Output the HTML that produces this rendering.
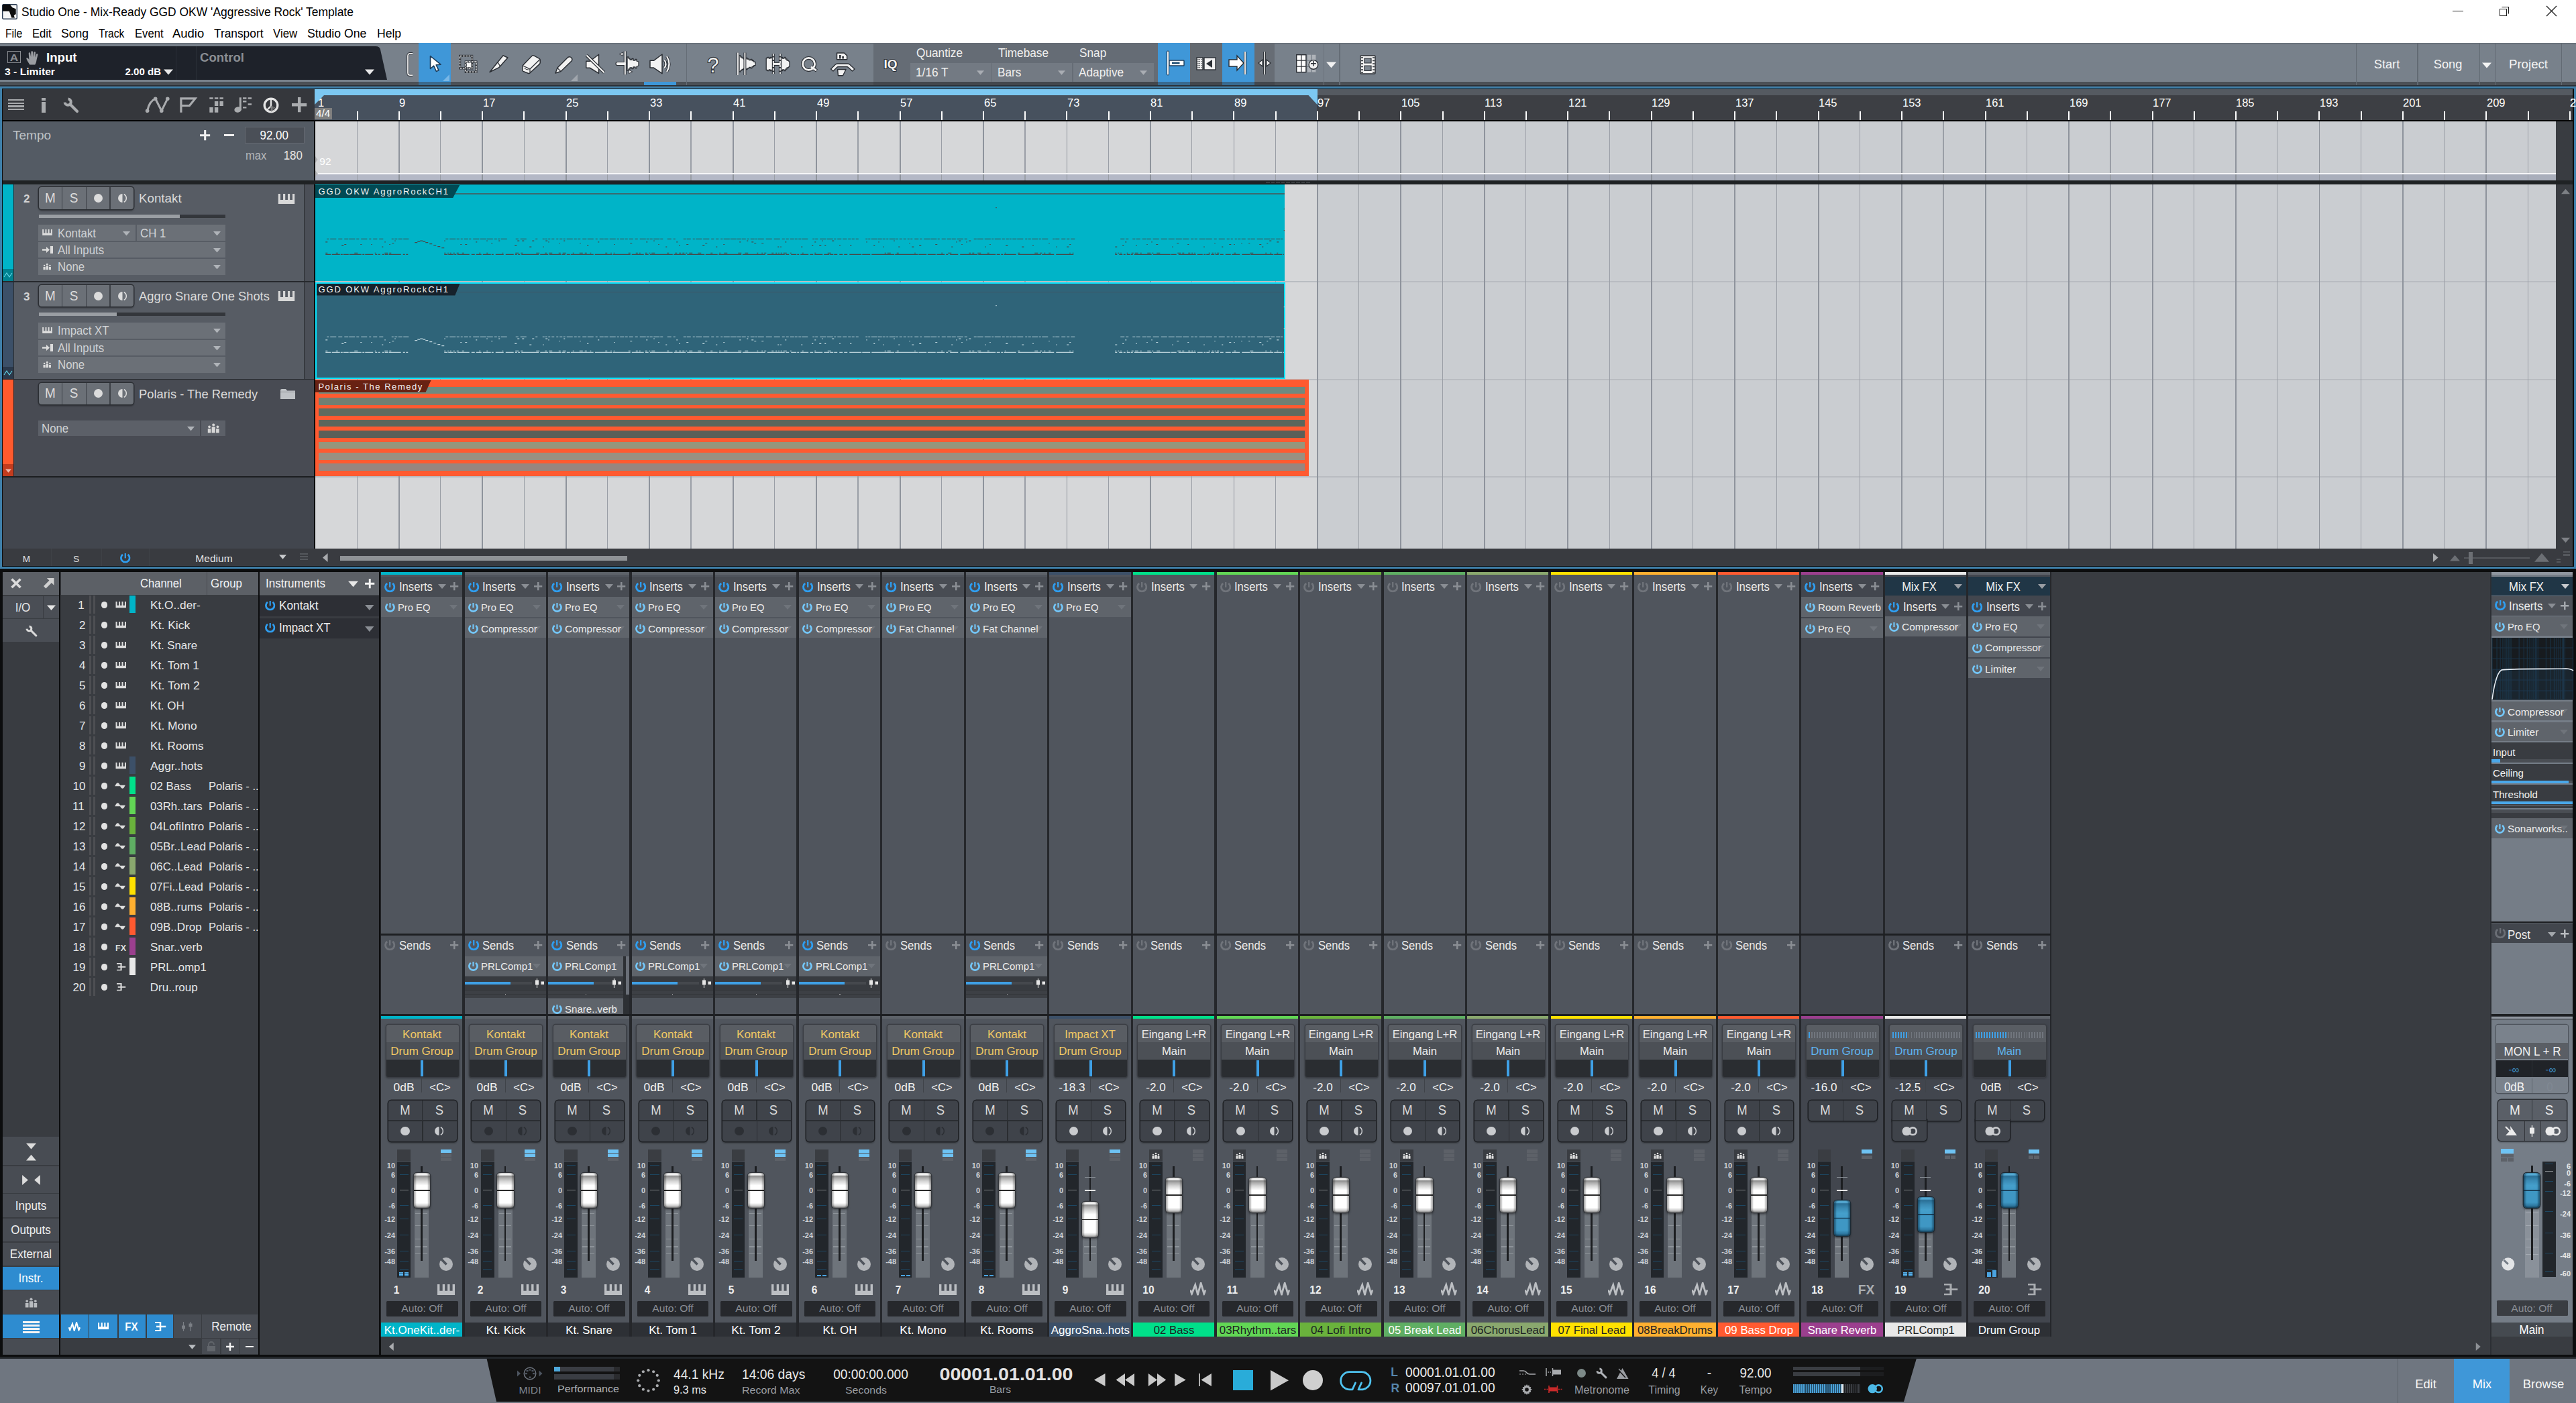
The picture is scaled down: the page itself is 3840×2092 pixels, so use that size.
<!DOCTYPE html><html><head><meta charset="utf-8"><title>Studio One</title><style>html,body{margin:0;padding:0;background:#393c41}
body{width:3840px;height:2092px;position:relative;overflow:hidden;font-family:"Liberation Sans",sans-serif;font-size:17.5px;color:#e4e4e4}
i{position:absolute;display:block;font-style:normal}
b{font-weight:400}
.t,.tc,.tr{position:absolute;white-space:nowrap;line-height:1;transform-origin:0 0}
.tc{transform-origin:50% 0;translate:-50% 0}
.tr{transform-origin:100% 0;translate:-100% 0}
.u{position:absolute;overflow:visible;fill:currentColor}.f115{font-size:11.5px;line-height:12px}.f125{font-size:12.5px;line-height:14px}.f130{font-size:13px;line-height:15px}.f135{font-size:13.5px;line-height:15px}.f150{font-size:15px;line-height:17px}.f155{font-size:15.5px;line-height:17px}.f160{font-size:16px;line-height:17px}.f165{font-size:16.5px;line-height:18px}.f170{font-size:17px;line-height:19px}.f175{font-size:17.5px;line-height:20px}.f180{font-size:18px;line-height:20px}.f185{font-size:18.5px;line-height:21px}.f190{font-size:19px;line-height:21px}.f195{font-size:19.5px;line-height:22px}.f205{font-size:20.5px;line-height:23px}.f255{font-size:25.5px;line-height:28px}.f320{font-size:32px;line-height:36px}</style></head><body><svg width="0" height="0" style="position:absolute">
<symbol id="pw" viewBox="0 0 16.400 15.400"><path d="M12.230 1.850A6.700 6.700 0 1 1 4.170 1.850" fill="none" stroke="currentColor" stroke-width="2.900"/><rect x="7.050" y="0" width="2.300" height="7.700"/></symbol>
<symbol id="td" viewBox="0 0 12 7"><path d="M0 0H12L6 7z"/></symbol>
<symbol id="tu" viewBox="0 0 12 7"><path d="M0 7H12L6 0z"/></symbol>
<symbol id="tl" viewBox="0 0 7 12"><path d="M7 0V12L0 6z"/></symbol>
<symbol id="trr" viewBox="0 0 7 12"><path d="M0 0V12L7 6z"/></symbol>
<symbol id="pl" viewBox="0 0 12 12"><path d="M4.8 0h2.4v4.8H12v2.4H7.2V12H4.8V7.2H0V4.8h4.8z"/></symbol>
<symbol id="mi" viewBox="0 0 12 12"><path d="M0 4.8h12v2.4H0z"/></symbol>
<symbol id="kb" viewBox="0 0 26 16"><path d="M0 0H3.400V9.700H7.700V0H11.100V9.700H15.100V0H18.500V9.700H22.600V0H26V16H0z"/></symbol>
<symbol id="wv" viewBox="0 0 24 19.500"><path d="M.5 11.500L2.600 17.300L7.800 3.800L11.600 18.400L16.300 1.200L21 17.300L23.300 11.500" fill="none" stroke="currentColor" stroke-width="2.900" stroke-linejoin="miter" stroke-miterlimit="8"/></symbol>
<symbol id="wv2" viewBox="0 0 16 9"><path d="M0 5.200L.8 4.200Q4.400 -3.800 8.400 4.500L8.400 5.200zM7.600 3.800L16 3.800 15.200 4.800Q11.800 12.800 7.600 4.500z"/></symbol>
<symbol id="bus" viewBox="0 0 20.500 17.400"><path d="M0 0h11.500v17.400H0v-2.600h8.400v-4.700H2.600V7.300h5.800V2.500H0zM11.500 7.300h9v2.800h-9z"/></symbol>
<symbol id="ppl" viewBox="0 0 24 18"><circle cx="4" cy="6.2" r="2.4"/><path d="M1 10h6v8H1z"/><circle cx="12" cy="2.6" r="2.6"/><path d="M8.6 6.4h6.8V18H8.6z"/><circle cx="20" cy="6.2" r="2.4"/><path d="M17 10h6v8h-6z"/></symbol>
<symbol id="knob" viewBox="0 0 20 20"><circle cx="10" cy="10" r="10" fill="#b1b4b8"/><path d="M10.600 10.600L2.800 2.400" stroke="#50555d" stroke-width="3.600"/></symbol>
<symbol id="mono" viewBox="0 0 14 16"><circle cx="7" cy="8" r="7" fill="currentColor" opacity=".0"/><path d="M7 1a7 7 0 0 0 0 14z"/><path d="M9.5 1.8a7 7 0 0 1 0 12.4" fill="none" stroke="currentColor" stroke-width="1.6"/></symbol>
<symbol id="link" viewBox="0 0 24 14"><circle cx="7" cy="7" r="7"/><circle cx="16.5" cy="7" r="5.6" fill="none" stroke="currentColor" stroke-width="2.8"/></symbol>
<symbol id="wr" viewBox="0 0 24 24"><path d="M7.6 2.6A4.6 4.6 0 1 1 2.6 7.6" fill="none" stroke="currentColor" stroke-width="4"/><path d="M10.5 10.5L21 21" stroke="currentColor" stroke-width="4.2" stroke-linecap="round"/></symbol>
</svg>
<i style="left:0px;top:0px;width:3840px;height:64px;background:#fff;"></i>
<svg class="u" style="left:3px;top:6px;width:23px;height:23px;" viewBox="0 0 23 23"><rect x=".7" y=".7" width="21.6" height="21.6" rx="1.5" fill="#f6f6f6" stroke="#2a3a50" stroke-width="1.4"/><path d="M.9.8H11.800L15.500 5.200 10.800 10.800H.9zM15.500 5.200L20.700 7.300V15.100L17.600 16.900 19 20.600 14.300 20.600 10.800 10.800z" fill="#0d0d0d"/></svg>
<b class="t f180" style="left:31.6px;top:8px;color:#000;transform:scaleX(0.969);">Studio One - Mix-Ready GGD OKW 'Aggressive Rock' Template</b>
<b class="t f180" style="left:7.5px;top:40px;color:#000;transform:scaleX(0.873);">File</b>
<b class="t f180" style="left:47.7px;top:40px;color:#000;transform:scaleX(0.924);">Edit</b>
<b class="t f180" style="left:91.3px;top:40px;color:#000;transform:scaleX(0.975);">Song</b>
<b class="t f180" style="left:147.2px;top:40px;color:#000;transform:scaleX(0.864);">Track</b>
<b class="t f180" style="left:200.5px;top:40px;color:#000;transform:scaleX(0.924);">Event</b>
<b class="t f180" style="left:257.2px;top:40px;color:#000;transform:scaleX(1.026);">Audio</b>
<b class="t f180" style="left:319.4px;top:40px;color:#000;transform:scaleX(0.962);">Transport</b>
<b class="t f180" style="left:407.4px;top:40px;color:#000;transform:scaleX(0.933);">View</b>
<b class="t f180" style="left:458.4px;top:40px;color:#000;transform:scaleX(0.981);">Studio One</b>
<b class="t f180" style="left:561.7px;top:40px;color:#000;transform:scaleX(0.976);">Help</b>
<i style="left:3656px;top:16px;width:16px;height:1.3px;background:#222;"></i>
<i style="left:3725.5px;top:12.5px;width:11.5px;height:11.5px;background:transparent;border:1.3px solid #222;box-sizing:border-box"></i>
<i style="left:3728.5px;top:9.5px;width:11.5px;height:11.5px;background:transparent;border:1.3px solid #222;border-left-color:transparent;border-bottom-color:transparent;box-sizing:border-box"></i>
<svg class="u" style="left:3796px;top:9px;width:15px;height:15px;" viewBox="0 0 15 15"><path d="M0 0L15 15M15 0L0 15" stroke="#222" stroke-width="1.4" fill="none"/></svg>
<i style="left:0px;top:64px;width:3840px;height:58px;background:#78818b;"></i>
<i style="left:0px;top:64px;width:3840px;height:1.5px;background:#6a727b;"></i>
<i style="left:0px;top:122px;width:3840px;height:5.5px;background:#4b5056;"></i>
<svg class="u" style="left:0px;top:69px;width:580px;height:50px;" viewBox="0 0 580 50"><path d="M0 0H560Q566 0 567 5L577 50H0z" fill="#1e222a"/></svg>
<i style="left:262px;top:69px;width:1px;height:50px;background:#2a2f38;"></i>
<i style="left:292px;top:69px;width:1px;height:50px;background:#2a2f38;"></i>
<i style="left:10.5px;top:76px;width:20px;height:17.5px;background:transparent;border:1.3px solid #8a8d92;box-sizing:border-box"></i>
<b class="tc f150" style="left:20.52px;top:77px;color:#8a8d92;font-weight:700;transform:scaleX(1.150);">A</b>
<svg class="u" style="left:36.5px;top:75.5px;width:22px;height:21px;" viewBox="0 0 16.5 18.5"><path d="M5 18C3 15 1 12 .5 9.5 1.6 8.6 3 9.4 4.2 11.5L3.6 3.2C3.6 1.6 5.6 1.6 5.8 3.2L6.6 8 6.8 1.4C7 -.2 9 -.2 9.2 1.4L9.4 8 10.4 2C10.8.4 12.8.8 12.6 2.4L12 8.6 13.6 4.4C14.2 3 16 3.6 15.6 5.2L14 12C13.6 15 13 16.6 12 18z" fill="#9a9da2"/></svg>
<b class="t f185" style="left:69px;top:75px;color:#fff;font-weight:700;transform:scaleX(1.006);">Input</b>
<b class="t f155" style="left:7px;top:98px;color:#fff;font-weight:700;transform:scaleX(1.012);">3 - Limiter</b>
<b class="tr f155" style="left:239.53px;top:98px;color:#fff;font-weight:700;transform:scaleX(0.970);">2.00 dB</b>
<svg class="u" style="left:243.5px;top:102.5px;width:14px;height:9px;color:#e8e8e8;"><use href="#td"/></svg>
<b class="t f185" style="left:298px;top:75px;color:#8b8e93;font-weight:700;transform:scaleX(1.004);">Control</b>
<svg class="u" style="left:543.5px;top:102.5px;width:14px;height:9px;color:#e8e8e8;"><use href="#td"/></svg>
<i style="left:624px;top:64px;width:48px;height:58px;background:#3f97d8;"></i>
<i style="left:624px;top:122px;width:48px;height:5.5px;background:#3a6a8e;"></i>
<i style="left:960px;top:121.5px;width:48px;height:5px;background:#3f97d8;"></i>
<svg class="u" style="left:606px;top:77.5px;width:10px;height:36px;" viewBox="0 0 10 36"><path d="M9 1.800H5.500Q2 1.800 2 5.500V30.500Q2 34.200 5.500 34.200H9" fill="none" stroke="#2b2f35" stroke-width="3.600"/><path d="M9 1.800H5.500Q2 1.800 2 5.500V30.500Q2 34.200 5.500 34.200H9" fill="none" stroke="#f2f2f2" stroke-width="1.800"/></svg>
<svg class="u" style="left:640px;top:82px;width:20px;height:26px;" viewBox="0 0 20 26"><path d="M1.5 1.5V20.5L6.6 16.2 10.4 24.5 14 22.8 10.2 14.8 17 14.2z" fill="#fff" stroke="#1c3d5c" stroke-width="1.6" stroke-linejoin="round"/></svg>
<svg class="u" style="left:659.5px;top:111px;width:10px;height:10px;" viewBox="0 0 10 10"><path d="M10 0V10H0z" fill="#79b7e6"/></svg>
<svg class="u" style="left:684px;top:82px;width:28px;height:27px;" viewBox="0 0 28 27"><rect x="10.500" y="10.200" width="9" height="9.500" fill="#e2e2e2"/><rect x="1.600" y="1.400" width="18" height="18.400" fill="none" stroke="#2b2f35" stroke-width="3.200"/><rect x="1.600" y="1.400" width="18" height="18.400" fill="none" stroke="#f2f2f2" stroke-width="1.500" stroke-dasharray="2.800 1.500"/><rect x="10.300" y="10" width="15.600" height="15.300" fill="none" stroke="#2b2f35" stroke-width="3.200"/><rect x="10.300" y="10" width="15.600" height="15.300" fill="none" stroke="#f2f2f2" stroke-width="1.500" stroke-dasharray="2.800 1.500"/><path d="M12 12l6 6m0-6l-6 6" stroke="#f7f7f7" stroke-width="2.200"/></svg>
<svg class="u" style="left:729px;top:82px;width:29px;height:27px;" viewBox="0 0 29 27"><path d="M1 25.500L12.900 10.750 21 .8 27.900 4 16.600 16.750 14.750 18.600z" fill="#f2f2f2" stroke="#2b2f35" stroke-width="1.500" stroke-linejoin="round"/><path d="M12.900 10.750L16.600 16.750" stroke="#2b2f35" stroke-width="1.300"/></svg>
<svg class="u" style="left:777px;top:82px;width:30px;height:29px;" viewBox="0 0 30 29"><path d="M1.750 17.500Q1.750 16.200 2.800 15L15.800 1.500Q17.400 .3 19.200 1.200L27 5.400Q28.200 6.200 28.200 7.600V11.500Q28.200 12.600 27.200 13.600L13 26.800Q11.750 27.800 10.200 27.200L3 24.400Q1.750 23.800 1.750 22.400z" fill="#f2f2f2" stroke="#2b2f35" stroke-width="1.500"/><path d="M2.500 16L12.300 20.600Q13.300 21.300 13 22.800V26.600M13 21L27.800 6.500" fill="none" stroke="#2b2f35" stroke-width="1.300"/><path d="M4.500 19.500Q8 22.500 11 22" fill="none" stroke="#2b2f35" stroke-width="1"/></svg>
<svg class="u" style="left:826px;top:83px;width:29px;height:28px;" viewBox="0 0 29 28"><path d="M2 26L5 18 20.5 2.5Q23.5.8 26 3.2 27.8 5.6 26 8L10 23.5z" fill="#f2f2f2" stroke="#2b2f35" stroke-width="1.5" stroke-linejoin="round"/><path d="M5 18.5L9.6 23" stroke="#2b2f35" stroke-width="1.2"/></svg>
<svg class="u" style="left:851px;top:111px;width:10px;height:10px;" viewBox="0 0 10 10"><path d="M10 0V10H0z" fill="#a0a6ad"/></svg>
<svg class="u" style="left:872px;top:80px;width:31px;height:31px;" viewBox="0 0 31 31"><path d="M1.750 11.250H7.400L20.500 1.250V29.400L7.400 21.250H1.750z" fill="#f2f2f2" stroke="#2b2f35" stroke-width="1.500" stroke-linejoin="round"/><path d="M2.400 2.500L28.600 28.100" stroke="#2b2f35" stroke-width="4.600"/><path d="M2.400 2.500L28.600 28.100" stroke="#f2f2f2" stroke-width="2.200"/></svg>
<svg class="u" style="left:916px;top:75px;width:38px;height:38px;" viewBox="0 0 38 38"><path d="M19 10h2v2h2v2h3v-1.500h2V15h3v-1.500h2V16l3 1v6l-3 1v2.500h-2V25h-3v2.500h-2V26h-3v2h-2v2h-2z" fill="#f2f2f2" stroke="#2b2f35" stroke-width="1.300" stroke-linejoin="round"/><path d="M15.800 1.300V36.200" stroke="#2b2f35" stroke-width="4.200"/><path d="M4.500 20H15" stroke="#2b2f35" stroke-width="6.200" stroke-linecap="round"/><path d="M4.500 20H15" stroke="#f2f2f2" stroke-width="3.800" stroke-linecap="round"/><path d="M15.800 1.300V36.200" stroke="#f2f2f2" stroke-width="2"/><path d="M12.700 2.900V8.300L7.300 5.600zM21.300 29.300V34.700L26.800 32z" fill="#f2f2f2" stroke="#2b2f35" stroke-width=".9"/></svg>
<svg class="u" style="left:968px;top:80px;width:33px;height:31px;" viewBox="0 0 33 31"><path d="M1 10.300H6.500L19 1V29.700L6.500 21.100H1z" fill="#f2f2f2" stroke="#2b2f35" stroke-width="1.500" stroke-linejoin="round"/><path d="M22.500 9.500Q26.500 15.500 22.500 21.500M26 4Q33 15.500 26 27" fill="none" stroke="#2b2f35" stroke-width="4.200"/><path d="M22.500 9.500Q26.500 15.500 22.500 21.500M26 4Q33 15.500 26 27" fill="none" stroke="#f2f2f2" stroke-width="2.200"/></svg>
<i style="left:1023px;top:64px;width:1px;height:63px;background:#656d76;"></i>
<b class="tc f320" style="left:1063.42px;top:79px;color:#2b2f35;transform:scaleX(0.950);-webkit-text-stroke:2.5px #2b2f35">?</b>
<b class="tc f320" style="left:1063.42px;top:79px;color:#f2f2f2;transform:scaleX(0.950);">?</b>
<svg class="u" style="left:1097px;top:77px;width:32px;height:38px;" viewBox="0 0 32 38"><path d="M5 6h2v2h2v1.500h2.500V11H15V9.500h2V11h2.500v1.500H22v-1h2v2h2.500V15l2.500.5v5l-2.500.5v1.500H24v2h-2v-1h-2.500V25H17v1.500h-2V25h-3.500v1.500H9V28H7v2H5z" fill="#f2f2f2" stroke="#2b2f35" stroke-width="1.300" stroke-linejoin="round"/><path d="M3 1.600V35M13.400 1.600V35" stroke="#2b2f35" stroke-width="4"/><path d="M3 1.600V35M13.400 1.600V35" stroke="#f2f2f2" stroke-width="1.900"/></svg>
<svg class="u" style="left:1141px;top:77px;width:38px;height:38px;" viewBox="0 0 38 38"><path d="M1.200 9.500h2V8.500h2V10h2V8.500h2.500v1.500h1.500v17H9.700v1.500H7.200V27h-2v1.500h-2V27.500h-2zM23.500 8.500h2V10h2.500V8.500h2v2.500h2V13h2l2 2.500v6l-2 2.500h-2v2h-2v2.500h-2V27h-2.500v1.500h-2z" fill="#f2f2f2" stroke="#2b2f35" stroke-width="1.300" stroke-linejoin="round"/><path d="M11.800 3.200V33M21.900 3.200V33" stroke="#2b2f35" stroke-width="4"/><path d="M11 18.400H22.500" stroke="#2b2f35" stroke-width="5.200"/><path d="M11 18.400H22.500" stroke="#f2f2f2" stroke-width="3"/><path d="M11.800 3.200V33M21.900 3.200V33" stroke="#f2f2f2" stroke-width="1.900" stroke-dasharray="3.600 1.800"/></svg>
<svg class="u" style="left:1192px;top:82px;width:28px;height:28px;" viewBox="0 0 28 28"><circle cx="13.600" cy="13.400" r="9" fill="none" stroke="#2b2f35" stroke-width="5"/><path d="M17 17.500L25.500 23.500" stroke="#2b2f35" stroke-width="5"/><circle cx="13.600" cy="13.400" r="9" fill="none" stroke="#f2f2f2" stroke-width="2.800"/><path d="M17 17.500L25 23.200" stroke="#f2f2f2" stroke-width="2.800"/></svg>
<svg class="u" style="left:1237px;top:76px;width:38px;height:38px;" viewBox="0 0 38 38"><path d="M10.500 3H21.500L25.600 7V12.700H10.500z" fill="#f2f2f2" stroke="#2b2f35" stroke-width="1.500" stroke-linejoin="round"/><path d="M14 6h2.600v5.500H14zM18.300 8h2.600v3.500h-2.600z" fill="#2b2f35"/><path d="M1.500 27L8.500 20Q10 19 12 19H26Q28 19 29.500 20L37 27 33.500 30 27.500 24.500Q26.500 23.500 25 23.500H13Q11.500 23.500 10.500 24.500L5 30z" fill="#f2f2f2" stroke="#2b2f35" stroke-width="1.400" stroke-linejoin="round"/><path d="M11.600 27.500H24L19.500 36.800H12.400z" fill="#f2f2f2" stroke="#2b2f35" stroke-width="1.400" stroke-linejoin="round"/></svg>
<i style="left:1301.6px;top:64px;width:598.4px;height:58px;background:#656c75;"></i>
<i style="left:1301.6px;top:122px;width:598.4px;height:5.5px;background:#43474d;"></i>
<b class="tc f190" style="left:1327.51px;top:85px;color:#2b2f35;font-weight:700;-webkit-text-stroke:2.2px #2b2f35">IQ</b>
<b class="tc f190" style="left:1327.51px;top:85px;color:#f2f2f2;font-weight:700;">IQ</b>
<i style="left:1356.5px;top:94px;width:120px;height:27.5px;background:#737a83;"></i>
<b class="t f175" style="left:1366px;top:69px;color:#f0f0f0;transform:scaleX(0.985);">Quantize</b>
<b class="t f175" style="left:1365px;top:98px;color:#f0f0f0;transform:scaleX(0.985);">1/16 T</b>
<svg class="u" style="left:1455.5px;top:104.5px;width:11px;height:7px;color:#a9adb3;"><use href="#td"/></svg>
<i style="left:1478.2px;top:94px;width:120px;height:27.5px;background:#737a83;"></i>
<b class="t f175" style="left:1487.7px;top:69px;color:#f0f0f0;transform:scaleX(0.985);">Timebase</b>
<b class="t f175" style="left:1486.7px;top:98px;color:#f0f0f0;transform:scaleX(0.985);">Bars</b>
<svg class="u" style="left:1577.2px;top:104.5px;width:11px;height:7px;color:#a9adb3;"><use href="#td"/></svg>
<i style="left:1599.9px;top:94px;width:120px;height:27.5px;background:#737a83;"></i>
<b class="t f175" style="left:1609.4px;top:69px;color:#f0f0f0;transform:scaleX(0.985);">Snap</b>
<b class="t f175" style="left:1608.4px;top:98px;color:#f0f0f0;transform:scaleX(0.985);">Adaptive</b>
<svg class="u" style="left:1698.9px;top:104.5px;width:11px;height:7px;color:#a9adb3;"><use href="#td"/></svg>
<i style="left:1726px;top:64px;width:48px;height:58px;background:#3f97d8;"></i>
<i style="left:1726px;top:122px;width:48px;height:5.5px;background:#386a90;"></i>
<i style="left:1774px;top:64px;width:48px;height:58px;background:#636970;"></i>
<i style="left:1822px;top:64px;width:48px;height:58px;background:#3f97d8;"></i>
<i style="left:1822px;top:122px;width:48px;height:5.5px;background:#386a90;"></i>
<i style="left:1870px;top:64px;width:30px;height:58px;background:#676d75;"></i>
<svg class="u" style="left:1738px;top:76px;width:28px;height:36px;" viewBox="0 0 28 36"><rect x="5" y="14" width="22" height="8" rx=".8" fill="#fff" stroke="#1c3d5c" stroke-width="1.400"/><rect x="9" y="16.700" width="11.500" height="2.600" fill="#17476e"/><path d="M3 1.500V34.500" stroke="#1c3d5c" stroke-width="4.200" stroke-linecap="round"/><path d="M3 1.500V34.500" stroke="#fff" stroke-width="1.900" stroke-linecap="round"/></svg>
<svg class="u" style="left:1783px;top:85px;width:30px;height:20px;" viewBox="0 0 30 20"><rect x="1" y="1" width="9" height="18" fill="#f2f2f2" stroke="#2b2f35" stroke-width="1.400"/><path d="M3 3v14M5.500 3v14M8 3v14" stroke="#2b2f35" stroke-width="1" stroke-dasharray="1.500 1.500"/><rect x="12" y="1" width="17" height="18" fill="#f2f2f2" stroke="#2b2f35" stroke-width="1.400"/><path d="M24 4V16L15 10z" fill="#2b2f35"/></svg>
<svg class="u" style="left:1831px;top:76px;width:30px;height:36px;" viewBox="0 0 30 36"><path d="M25 1V35" stroke="#2b2f35" stroke-width="4"/><path d="M25 1V35" stroke="#fff" stroke-width="1.800"/><path d="M1 13H13V7L23 18 13 29V23H1z" fill="#fff" stroke="#2b2f35" stroke-width="1.400"/></svg>
<svg class="u" style="left:1874px;top:76px;width:22px;height:36px;" viewBox="0 0 22 36"><path d="M11 1V35" stroke="#2b2f35" stroke-width="3.800"/><path d="M11 1V35" stroke="#f2f2f2" stroke-width="1.600"/><path d="M8 13V23L2 18zM14 13V23L20 18z" fill="#f2f2f2" stroke="#2b2f35" stroke-width="1.200"/></svg>
<i style="left:1972.5px;top:64px;width:1px;height:63px;background:#6a727b;"></i>
<i style="left:1996px;top:64px;width:1.5px;height:63px;background:#656d76;"></i>
<svg class="u" style="left:1932px;top:81px;width:34px;height:28px;" viewBox="0 0 34 28"><path d="M16.800.7h5.600v7.700h-5.600zM23.800.7h5.600v7.700h-5.600zM16.800 9.800h5.600v7.700h-5.600zM16.800 18.900h5.600v7.700h-5.600zM23.800 18.900h5.600v7.700h-5.600z" fill="#aeb3b9"/><rect x=".7" y=".7" width="14.200" height="25.900" fill="#fdfdfd" stroke="#2b2f35" stroke-width="1.400"/><path d="M7.800.7V26.600M.7 9.100H14.900M.7 18.200H14.900" stroke="#2b2f35" stroke-width="1.300"/><circle cx="25.900" cy="15.400" r="6.800" fill="#f2f2f2" stroke="#2b2f35" stroke-width="1.400"/><path d="M22 13.700h7.800M25.900 9.800v7.800" stroke="#2b2f35" stroke-width="1.500"/></svg>
<svg class="u" style="left:1977px;top:92px;width:15px;height:9.5px;color:#f2f2f2;"><use href="#td"/></svg>
<svg class="u" style="left:2027px;top:82px;width:24px;height:29px;" viewBox="0 0 24 29"><rect x="1" y="1" width="22" height="27" rx="1" fill="#f2f2f2" stroke="#2b2f35" stroke-width="1.400"/><path d="M7 5H17V12H7zM7 16H17V23.500H7z" fill="#7b848e" stroke="#2b2f35" stroke-width="1.200"/><path d="M2 4h3M2 8.500h3M2 13h3M2 17.500h3M2 22h3M2 26h3M19 4h3M19 8.500h3M19 13h3M19 17.500h3M19 22h3M19 26h3" stroke="#2b2f35" stroke-width="1.600"/></svg>
<i style="left:3511.5px;top:64px;width:1.5px;height:63px;background:#626a73;"></i>
<i style="left:3603px;top:64px;width:1.5px;height:63px;background:#626a73;"></i>
<i style="left:3695.5px;top:64px;width:1.5px;height:63px;background:#626a73;"></i>
<i style="left:3718.5px;top:64px;width:1.5px;height:63px;background:#626a73;"></i>
<i style="left:3817.5px;top:64px;width:1.5px;height:63px;background:#626a73;"></i>
<b class="tc f180" style="left:3558.02px;top:86px;color:#f4f4f4;transform:scaleX(1.014);">Start</b>
<b class="tc f180" style="left:3649px;top:86px;color:#f4f4f4;transform:scaleX(1.011);">Song</b>
<svg class="u" style="left:3700px;top:93px;width:14px;height:9px;color:#f4f4f4;"><use href="#td"/></svg>
<b class="tc f180" style="left:3768.82px;top:86px;color:#f4f4f4;transform:scaleX(1.036);">Project</b>
<i style="left:0px;top:127.4px;width:3840px;height:1.1px;background:#2b3036;"></i>
<i style="left:0px;top:128.5px;width:3840px;height:719.7px;background:#3f80aa;"></i>
<i style="left:3px;top:132px;width:3834px;height:713px;background:#0c0d0e;"></i>
<i style="left:4px;top:133px;width:3831px;height:711px;background:#d6d7d9;"></i>
<i style="left:4px;top:133px;width:464.8px;height:45.8px;background:#35373c;"></i>
<i style="left:12px;top:148px;width:24px;height:2.4px;background:#a9abae;"></i>
<i style="left:12px;top:152.7px;width:24px;height:2.4px;background:#a9abae;"></i>
<i style="left:12px;top:157.4px;width:24px;height:2.4px;background:#a9abae;"></i>
<i style="left:12px;top:162.1px;width:24px;height:2.4px;background:#a9abae;"></i>
<i style="left:62px;top:145.5px;width:5.5px;height:4.5px;background:#a9abae;"></i>
<i style="left:62px;top:152px;width:5.5px;height:16px;background:#a9abae;"></i>
<svg class="u" style="left:94px;top:145px;width:24px;height:24px;color:#a9abae;"><use href="#wr"/></svg>
<svg class="u" style="left:216px;top:144px;width:37px;height:25px;" viewBox="0 0 37 25"><path d="M3.600 21.200Q6.500 7 15.700 3.200L24.800 21.200 33.800 3.200" fill="none" stroke="#a9abae" stroke-width="3" stroke-linejoin="round"/><circle cx="3.600" cy="21.200" r="2.800" fill="#a9abae"/><circle cx="15.700" cy="3.200" r="2.800" fill="#a9abae"/><circle cx="24.800" cy="21.200" r="2.800" fill="#a9abae"/><circle cx="33.800" cy="3.200" r="2.800" fill="#a9abae"/></svg>
<svg class="u" style="left:267px;top:144px;width:28px;height:24px;" viewBox="0 0 28 24"><path d="M2.900 23.700V2.900H24L15.500 13.500H2.900" fill="none" stroke="#a9abae" stroke-width="3.200"/></svg>
<svg class="u" style="left:312px;top:145px;width:21px;height:23px;" viewBox="0 0 21 23"><path d="M.3.3h5.400v2.500H.3zM7.900.3h5.400v2.500H7.900zM15.500.3h5.400v2.500h-5.400zM7.900 6h5.400v7.100H7.900zM15.500 6h5.400v7.100h-5.400zM.3 15h5.400v7.700H.3zM7.900 15h5.400v7.700H7.900z" fill="#a9abae"/></svg>
<svg class="u" style="left:349px;top:145px;width:27px;height:23px;" viewBox="0 0 27 23"><ellipse cx="5.600" cy="18.500" rx="5.300" ry="4.200" fill="#a9abae" transform="rotate(-15 5.600 18.500)"/><path d="M7.800 .3h3V19h-3z" fill="#a9abae"/><path d="M13 .3h5.400v2.400H13zM20.600 .3H26v2.400h-5.400zM13 5h5.400v2.400H13zM20.600 9.300H26v2.400h-5.400zM13 14.200h5.400v2.400H13z" fill="#a9abae"/></svg>
<svg class="u" style="left:392.3px;top:144.5px;width:24px;height:24px;" viewBox="0 0 24 24"><circle cx="12" cy="12" r="9.800" fill="none" stroke="#e4e4e4" stroke-width="3.300"/><path d="M12 3V13L5.500 19.500" fill="none" stroke="#e4e4e4" stroke-width="2.400"/><path d="M12 13L17.500 19.500M12 13L15 21M12 13L12.500 21.500M12 13L19.500 17" stroke="#8f8f8f" stroke-width="1"/></svg>
<svg class="u" style="left:435.3px;top:145.3px;width:22.4px;height:22.4px;color:#a9abae;"><use href="#pl"/></svg>
<i style="left:468.8px;top:133px;width:3366.2px;height:9px;background:#555a61;"></i>
<i style="left:468.8px;top:142px;width:3366.2px;height:36.8px;background:#3d3f44;"></i>
<i style="left:468.8px;top:142px;width:1494.37px;height:36.8px;background:#47515e;"></i>
<i style="left:468.8px;top:133px;width:1495.37px;height:9px;background:#7cc8f2;"></i>
<svg class="u" style="left:468.8px;top:141.5px;width:14px;height:15px;" viewBox="0 0 14 15"><path d="M0 0H14L0 14z" fill="#7cc8f2"/></svg>
<svg class="u" style="left:1950.17px;top:141.5px;width:14px;height:15px;" viewBox="0 0 14 15"><path d="M.5 0H14V14.500z" fill="#7cc8f2"/></svg>
<i style="left:468.8px;top:161px;width:26px;height:16.8px;background:#7f7f7f;"></i>
<b class="t f155" style="left:471.3px;top:160px;color:#fff;transform:scaleX(0.980);">4/4</b>
<b class="t f170" style="left:473.8px;top:144px;color:#fff;transform:scaleX(0.970);">1</b>
<i style="left:531.53px;top:166.2px;width:2px;height:12.6px;background:#fff;"></i>
<i style="left:593.76px;top:166.2px;width:2px;height:12.6px;background:#fff;"></i>
<b class="t f170" style="left:595.26px;top:144px;color:#fff;transform:scaleX(0.970);">9</b>
<i style="left:656px;top:166.2px;width:2px;height:12.6px;background:#fff;"></i>
<i style="left:718.23px;top:166.2px;width:2px;height:12.6px;background:#fff;"></i>
<b class="t f170" style="left:719.73px;top:144px;color:#fff;transform:scaleX(0.970);">17</b>
<i style="left:780.46px;top:166.2px;width:2px;height:12.6px;background:#fff;"></i>
<i style="left:842.69px;top:166.2px;width:2px;height:12.6px;background:#fff;"></i>
<b class="t f170" style="left:844.19px;top:144px;color:#fff;transform:scaleX(0.970);">25</b>
<i style="left:904.92px;top:166.2px;width:2px;height:12.6px;background:#fff;"></i>
<i style="left:967.16px;top:166.2px;width:2px;height:12.6px;background:#fff;"></i>
<b class="t f170" style="left:968.66px;top:144px;color:#fff;transform:scaleX(0.970);">33</b>
<i style="left:1029.39px;top:166.2px;width:2px;height:12.6px;background:#fff;"></i>
<i style="left:1091.62px;top:166.2px;width:2px;height:12.6px;background:#fff;"></i>
<b class="t f170" style="left:1093.12px;top:144px;color:#fff;transform:scaleX(0.970);">41</b>
<i style="left:1153.85px;top:166.2px;width:2px;height:12.6px;background:#fff;"></i>
<i style="left:1216.08px;top:166.2px;width:2px;height:12.6px;background:#fff;"></i>
<b class="t f170" style="left:1217.58px;top:144px;color:#fff;transform:scaleX(0.970);">49</b>
<i style="left:1278.32px;top:166.2px;width:2px;height:12.6px;background:#fff;"></i>
<i style="left:1340.55px;top:166.2px;width:2px;height:12.6px;background:#fff;"></i>
<b class="t f170" style="left:1342.05px;top:144px;color:#fff;transform:scaleX(0.970);">57</b>
<i style="left:1402.78px;top:166.2px;width:2px;height:12.6px;background:#fff;"></i>
<i style="left:1465.01px;top:166.2px;width:2px;height:12.6px;background:#fff;"></i>
<b class="t f170" style="left:1466.51px;top:144px;color:#fff;transform:scaleX(0.970);">65</b>
<i style="left:1527.24px;top:166.2px;width:2px;height:12.6px;background:#fff;"></i>
<i style="left:1589.48px;top:166.2px;width:2px;height:12.6px;background:#fff;"></i>
<b class="t f170" style="left:1590.98px;top:144px;color:#fff;transform:scaleX(0.970);">73</b>
<i style="left:1651.71px;top:166.2px;width:2px;height:12.6px;background:#fff;"></i>
<i style="left:1713.94px;top:166.2px;width:2px;height:12.6px;background:#fff;"></i>
<b class="t f170" style="left:1715.44px;top:144px;color:#fff;transform:scaleX(0.970);">81</b>
<i style="left:1776.17px;top:166.2px;width:2px;height:12.6px;background:#fff;"></i>
<i style="left:1838.4px;top:166.2px;width:2px;height:12.6px;background:#fff;"></i>
<b class="t f170" style="left:1839.9px;top:144px;color:#fff;transform:scaleX(0.970);">89</b>
<i style="left:1900.64px;top:166.2px;width:2px;height:12.6px;background:#fff;"></i>
<i style="left:1962.87px;top:166.2px;width:2px;height:12.6px;background:#fff;"></i>
<b class="t f170" style="left:1964.37px;top:144px;color:#fff;transform:scaleX(0.970);">97</b>
<i style="left:2025.1px;top:166.2px;width:2px;height:12.6px;background:#fff;"></i>
<i style="left:2087.33px;top:166.2px;width:2px;height:12.6px;background:#fff;"></i>
<b class="t f170" style="left:2088.83px;top:144px;color:#fff;transform:scaleX(0.970);">105</b>
<i style="left:2149.56px;top:166.2px;width:2px;height:12.6px;background:#fff;"></i>
<i style="left:2211.8px;top:166.2px;width:2px;height:12.6px;background:#fff;"></i>
<b class="t f170" style="left:2213.3px;top:144px;color:#fff;transform:scaleX(0.970);">113</b>
<i style="left:2274.03px;top:166.2px;width:2px;height:12.6px;background:#fff;"></i>
<i style="left:2336.26px;top:166.2px;width:2px;height:12.6px;background:#fff;"></i>
<b class="t f170" style="left:2337.76px;top:144px;color:#fff;transform:scaleX(0.970);">121</b>
<i style="left:2398.49px;top:166.2px;width:2px;height:12.6px;background:#fff;"></i>
<i style="left:2460.72px;top:166.2px;width:2px;height:12.6px;background:#fff;"></i>
<b class="t f170" style="left:2462.22px;top:144px;color:#fff;transform:scaleX(0.970);">129</b>
<i style="left:2522.96px;top:166.2px;width:2px;height:12.6px;background:#fff;"></i>
<i style="left:2585.19px;top:166.2px;width:2px;height:12.6px;background:#fff;"></i>
<b class="t f170" style="left:2586.69px;top:144px;color:#fff;transform:scaleX(0.970);">137</b>
<i style="left:2647.42px;top:166.2px;width:2px;height:12.6px;background:#fff;"></i>
<i style="left:2709.65px;top:166.2px;width:2px;height:12.6px;background:#fff;"></i>
<b class="t f170" style="left:2711.15px;top:144px;color:#fff;transform:scaleX(0.970);">145</b>
<i style="left:2771.88px;top:166.2px;width:2px;height:12.6px;background:#fff;"></i>
<i style="left:2834.12px;top:166.2px;width:2px;height:12.6px;background:#fff;"></i>
<b class="t f170" style="left:2835.62px;top:144px;color:#fff;transform:scaleX(0.970);">153</b>
<i style="left:2896.35px;top:166.2px;width:2px;height:12.6px;background:#fff;"></i>
<i style="left:2958.58px;top:166.2px;width:2px;height:12.6px;background:#fff;"></i>
<b class="t f170" style="left:2960.08px;top:144px;color:#fff;transform:scaleX(0.970);">161</b>
<i style="left:3020.81px;top:166.2px;width:2px;height:12.6px;background:#fff;"></i>
<i style="left:3083.04px;top:166.2px;width:2px;height:12.6px;background:#fff;"></i>
<b class="t f170" style="left:3084.54px;top:144px;color:#fff;transform:scaleX(0.970);">169</b>
<i style="left:3145.28px;top:166.2px;width:2px;height:12.6px;background:#fff;"></i>
<i style="left:3207.51px;top:166.2px;width:2px;height:12.6px;background:#fff;"></i>
<b class="t f170" style="left:3209.01px;top:144px;color:#fff;transform:scaleX(0.970);">177</b>
<i style="left:3269.74px;top:166.2px;width:2px;height:12.6px;background:#fff;"></i>
<i style="left:3331.97px;top:166.2px;width:2px;height:12.6px;background:#fff;"></i>
<b class="t f170" style="left:3333.47px;top:144px;color:#fff;transform:scaleX(0.970);">185</b>
<i style="left:3394.2px;top:166.2px;width:2px;height:12.6px;background:#fff;"></i>
<i style="left:3456.44px;top:166.2px;width:2px;height:12.6px;background:#fff;"></i>
<b class="t f170" style="left:3457.94px;top:144px;color:#fff;transform:scaleX(0.970);">193</b>
<i style="left:3518.67px;top:166.2px;width:2px;height:12.6px;background:#fff;"></i>
<i style="left:3580.9px;top:166.2px;width:2px;height:12.6px;background:#fff;"></i>
<b class="t f170" style="left:3582.4px;top:144px;color:#fff;transform:scaleX(0.970);">201</b>
<i style="left:3643.13px;top:166.2px;width:2px;height:12.6px;background:#fff;"></i>
<i style="left:3705.36px;top:166.2px;width:2px;height:12.6px;background:#fff;"></i>
<b class="t f170" style="left:3706.86px;top:144px;color:#fff;transform:scaleX(0.970);">209</b>
<i style="left:3767.6px;top:166.2px;width:2px;height:12.6px;background:#fff;"></i>
<i style="left:3829.83px;top:166.2px;width:2px;height:12.6px;background:#fff;"></i>
<b class="t f170" style="left:3831.33px;top:144px;color:#fff;transform:scaleX(0.970);clip-path:inset(0 3px 0 0);">217</b>
<i style="left:3835px;top:133px;width:5px;height:50px;background:transparent;"></i>
<i style="left:3828px;top:140px;width:7px;height:24px;overflow:hidden"><b class="t" style="left:3px;top:4.600px;font-size:17px;color:#fff">2</b></i>
<i style="left:4px;top:178.75px;width:3831px;height:2.25px;background:#000;"></i>
<i style="left:4px;top:181px;width:464px;height:87.75px;background:#545b64;"></i>
<b class="t f185" style="left:19.4px;top:191px;color:#bfc2c6;transform:scaleX(1.027);">Tempo</b>
<svg class="u" style="left:297.8px;top:194px;width:15.4px;height:15.4px;color:#f0f0f0;"><use href="#pl"/></svg>
<i style="left:333.5px;top:200.3px;width:15px;height:2.4px;background:#f0f0f0;"></i>
<i style="left:365px;top:189.3px;width:89px;height:24.5px;background:#4a4f57;box-shadow:inset 0 0 0 1px #646971"></i>
<b class="tr f175" style="left:430.46px;top:192px;color:#fff;transform:scaleX(0.970);">92.00</b>
<b class="t f175" style="left:366.3px;top:222px;color:#b4b7bb;transform:scaleX(0.949);">max</b>
<b class="tr f175" style="left:451.47px;top:222px;color:#e6e6e6;transform:scaleX(0.970);">180</b>
<i style="left:468.3px;top:178.75px;width:1.6px;height:665.25px;background:#0c0d0e;"></i>
<i style="left:469.75px;top:181px;width:1493.42px;height:87.75px;background:#d6d7d9;"></i>
<i style="left:1963.17px;top:181px;width:1846.83px;height:87.75px;background:#cacdd1;"></i>
<i style="left:469.75px;top:260px;width:1493.42px;height:8.75px;background:#b4b8c6;"></i>
<i style="left:1963.17px;top:260px;width:1846.83px;height:8.75px;background:#a9aebb;"></i>
<i style="left:1963.17px;top:275px;width:1846.83px;height:542.5px;background:#cacdd1;"></i>
<i style="left:469.75px;top:419.1px;width:3340.25px;height:1.7px;background:#b9bcc1;"></i>
<i style="left:469.75px;top:565.1px;width:3340.25px;height:1.7px;background:#b9bcc1;"></i>
<i style="left:469.75px;top:710.3px;width:3340.25px;height:1.7px;background:#b9bcc1;"></i>
<i style="left:531.63px;top:181px;width:1.2px;height:87.75px;background:#9a9ea6;"></i>
<i style="left:531.63px;top:275px;width:1.2px;height:542.5px;background:#9a9ea6;"></i>
<i style="left:593.86px;top:181px;width:1.9px;height:87.75px;background:#8e939c;"></i>
<i style="left:593.86px;top:275px;width:1.9px;height:542.5px;background:#8e939c;"></i>
<i style="left:656.1px;top:181px;width:1.2px;height:87.75px;background:#9a9ea6;"></i>
<i style="left:656.1px;top:275px;width:1.2px;height:542.5px;background:#9a9ea6;"></i>
<i style="left:718.33px;top:181px;width:1.9px;height:87.75px;background:#8e939c;"></i>
<i style="left:718.33px;top:275px;width:1.9px;height:542.5px;background:#8e939c;"></i>
<i style="left:780.56px;top:181px;width:1.2px;height:87.75px;background:#9a9ea6;"></i>
<i style="left:780.56px;top:275px;width:1.2px;height:542.5px;background:#9a9ea6;"></i>
<i style="left:842.79px;top:181px;width:1.9px;height:87.75px;background:#8e939c;"></i>
<i style="left:842.79px;top:275px;width:1.9px;height:542.5px;background:#8e939c;"></i>
<i style="left:905.02px;top:181px;width:1.2px;height:87.75px;background:#9a9ea6;"></i>
<i style="left:905.02px;top:275px;width:1.2px;height:542.5px;background:#9a9ea6;"></i>
<i style="left:967.26px;top:181px;width:1.9px;height:87.75px;background:#8e939c;"></i>
<i style="left:967.26px;top:275px;width:1.9px;height:542.5px;background:#8e939c;"></i>
<i style="left:1029.49px;top:181px;width:1.2px;height:87.75px;background:#9a9ea6;"></i>
<i style="left:1029.49px;top:275px;width:1.2px;height:542.5px;background:#9a9ea6;"></i>
<i style="left:1091.72px;top:181px;width:1.9px;height:87.75px;background:#8e939c;"></i>
<i style="left:1091.72px;top:275px;width:1.9px;height:542.5px;background:#8e939c;"></i>
<i style="left:1153.95px;top:181px;width:1.2px;height:87.75px;background:#9a9ea6;"></i>
<i style="left:1153.95px;top:275px;width:1.2px;height:542.5px;background:#9a9ea6;"></i>
<i style="left:1216.18px;top:181px;width:1.9px;height:87.75px;background:#8e939c;"></i>
<i style="left:1216.18px;top:275px;width:1.9px;height:542.5px;background:#8e939c;"></i>
<i style="left:1278.42px;top:181px;width:1.2px;height:87.75px;background:#9a9ea6;"></i>
<i style="left:1278.42px;top:275px;width:1.2px;height:542.5px;background:#9a9ea6;"></i>
<i style="left:1340.65px;top:181px;width:1.9px;height:87.75px;background:#8e939c;"></i>
<i style="left:1340.65px;top:275px;width:1.9px;height:542.5px;background:#8e939c;"></i>
<i style="left:1402.88px;top:181px;width:1.2px;height:87.75px;background:#9a9ea6;"></i>
<i style="left:1402.88px;top:275px;width:1.2px;height:542.5px;background:#9a9ea6;"></i>
<i style="left:1465.11px;top:181px;width:1.9px;height:87.75px;background:#8e939c;"></i>
<i style="left:1465.11px;top:275px;width:1.9px;height:542.5px;background:#8e939c;"></i>
<i style="left:1527.34px;top:181px;width:1.2px;height:87.75px;background:#9a9ea6;"></i>
<i style="left:1527.34px;top:275px;width:1.2px;height:542.5px;background:#9a9ea6;"></i>
<i style="left:1589.58px;top:181px;width:1.9px;height:87.75px;background:#8e939c;"></i>
<i style="left:1589.58px;top:275px;width:1.9px;height:542.5px;background:#8e939c;"></i>
<i style="left:1651.81px;top:181px;width:1.2px;height:87.75px;background:#9a9ea6;"></i>
<i style="left:1651.81px;top:275px;width:1.2px;height:542.5px;background:#9a9ea6;"></i>
<i style="left:1714.04px;top:181px;width:1.9px;height:87.75px;background:#8e939c;"></i>
<i style="left:1714.04px;top:275px;width:1.9px;height:542.5px;background:#8e939c;"></i>
<i style="left:1776.27px;top:181px;width:1.2px;height:87.75px;background:#9a9ea6;"></i>
<i style="left:1776.27px;top:275px;width:1.2px;height:542.5px;background:#9a9ea6;"></i>
<i style="left:1838.5px;top:181px;width:1.9px;height:87.75px;background:#8e939c;"></i>
<i style="left:1838.5px;top:275px;width:1.9px;height:542.5px;background:#8e939c;"></i>
<i style="left:1900.74px;top:181px;width:1.2px;height:87.75px;background:#9a9ea6;"></i>
<i style="left:1900.74px;top:275px;width:1.2px;height:542.5px;background:#9a9ea6;"></i>
<i style="left:1962.97px;top:181px;width:1.9px;height:87.75px;background:#8e939c;"></i>
<i style="left:1962.97px;top:275px;width:1.9px;height:542.5px;background:#8e939c;"></i>
<i style="left:2025.2px;top:181px;width:1.2px;height:87.75px;background:#9a9ea6;"></i>
<i style="left:2025.2px;top:275px;width:1.2px;height:542.5px;background:#9a9ea6;"></i>
<i style="left:2087.43px;top:181px;width:1.9px;height:87.75px;background:#8e939c;"></i>
<i style="left:2087.43px;top:275px;width:1.9px;height:542.5px;background:#8e939c;"></i>
<i style="left:2149.66px;top:181px;width:1.2px;height:87.75px;background:#9a9ea6;"></i>
<i style="left:2149.66px;top:275px;width:1.2px;height:542.5px;background:#9a9ea6;"></i>
<i style="left:2211.9px;top:181px;width:1.9px;height:87.75px;background:#8e939c;"></i>
<i style="left:2211.9px;top:275px;width:1.9px;height:542.5px;background:#8e939c;"></i>
<i style="left:2274.13px;top:181px;width:1.2px;height:87.75px;background:#9a9ea6;"></i>
<i style="left:2274.13px;top:275px;width:1.2px;height:542.5px;background:#9a9ea6;"></i>
<i style="left:2336.36px;top:181px;width:1.9px;height:87.75px;background:#8e939c;"></i>
<i style="left:2336.36px;top:275px;width:1.9px;height:542.5px;background:#8e939c;"></i>
<i style="left:2398.59px;top:181px;width:1.2px;height:87.75px;background:#9a9ea6;"></i>
<i style="left:2398.59px;top:275px;width:1.2px;height:542.5px;background:#9a9ea6;"></i>
<i style="left:2460.82px;top:181px;width:1.9px;height:87.75px;background:#8e939c;"></i>
<i style="left:2460.82px;top:275px;width:1.9px;height:542.5px;background:#8e939c;"></i>
<i style="left:2523.06px;top:181px;width:1.2px;height:87.75px;background:#9a9ea6;"></i>
<i style="left:2523.06px;top:275px;width:1.2px;height:542.5px;background:#9a9ea6;"></i>
<i style="left:2585.29px;top:181px;width:1.9px;height:87.75px;background:#8e939c;"></i>
<i style="left:2585.29px;top:275px;width:1.9px;height:542.5px;background:#8e939c;"></i>
<i style="left:2647.52px;top:181px;width:1.2px;height:87.75px;background:#9a9ea6;"></i>
<i style="left:2647.52px;top:275px;width:1.2px;height:542.5px;background:#9a9ea6;"></i>
<i style="left:2709.75px;top:181px;width:1.9px;height:87.75px;background:#8e939c;"></i>
<i style="left:2709.75px;top:275px;width:1.9px;height:542.5px;background:#8e939c;"></i>
<i style="left:2771.98px;top:181px;width:1.2px;height:87.75px;background:#9a9ea6;"></i>
<i style="left:2771.98px;top:275px;width:1.2px;height:542.5px;background:#9a9ea6;"></i>
<i style="left:2834.22px;top:181px;width:1.9px;height:87.75px;background:#8e939c;"></i>
<i style="left:2834.22px;top:275px;width:1.9px;height:542.5px;background:#8e939c;"></i>
<i style="left:2896.45px;top:181px;width:1.2px;height:87.75px;background:#9a9ea6;"></i>
<i style="left:2896.45px;top:275px;width:1.2px;height:542.5px;background:#9a9ea6;"></i>
<i style="left:2958.68px;top:181px;width:1.9px;height:87.75px;background:#8e939c;"></i>
<i style="left:2958.68px;top:275px;width:1.9px;height:542.5px;background:#8e939c;"></i>
<i style="left:3020.91px;top:181px;width:1.2px;height:87.75px;background:#9a9ea6;"></i>
<i style="left:3020.91px;top:275px;width:1.2px;height:542.5px;background:#9a9ea6;"></i>
<i style="left:3083.14px;top:181px;width:1.9px;height:87.75px;background:#8e939c;"></i>
<i style="left:3083.14px;top:275px;width:1.9px;height:542.5px;background:#8e939c;"></i>
<i style="left:3145.38px;top:181px;width:1.2px;height:87.75px;background:#9a9ea6;"></i>
<i style="left:3145.38px;top:275px;width:1.2px;height:542.5px;background:#9a9ea6;"></i>
<i style="left:3207.61px;top:181px;width:1.9px;height:87.75px;background:#8e939c;"></i>
<i style="left:3207.61px;top:275px;width:1.9px;height:542.5px;background:#8e939c;"></i>
<i style="left:3269.84px;top:181px;width:1.2px;height:87.75px;background:#9a9ea6;"></i>
<i style="left:3269.84px;top:275px;width:1.2px;height:542.5px;background:#9a9ea6;"></i>
<i style="left:3332.07px;top:181px;width:1.9px;height:87.75px;background:#8e939c;"></i>
<i style="left:3332.07px;top:275px;width:1.9px;height:542.5px;background:#8e939c;"></i>
<i style="left:3394.3px;top:181px;width:1.2px;height:87.75px;background:#9a9ea6;"></i>
<i style="left:3394.3px;top:275px;width:1.2px;height:542.5px;background:#9a9ea6;"></i>
<i style="left:3456.54px;top:181px;width:1.9px;height:87.75px;background:#8e939c;"></i>
<i style="left:3456.54px;top:275px;width:1.9px;height:542.5px;background:#8e939c;"></i>
<i style="left:3518.77px;top:181px;width:1.2px;height:87.75px;background:#9a9ea6;"></i>
<i style="left:3518.77px;top:275px;width:1.2px;height:542.5px;background:#9a9ea6;"></i>
<i style="left:3581px;top:181px;width:1.9px;height:87.75px;background:#8e939c;"></i>
<i style="left:3581px;top:275px;width:1.9px;height:542.5px;background:#8e939c;"></i>
<i style="left:3643.23px;top:181px;width:1.2px;height:87.75px;background:#9a9ea6;"></i>
<i style="left:3643.23px;top:275px;width:1.2px;height:542.5px;background:#9a9ea6;"></i>
<i style="left:3705.46px;top:181px;width:1.9px;height:87.75px;background:#8e939c;"></i>
<i style="left:3705.46px;top:275px;width:1.9px;height:542.5px;background:#8e939c;"></i>
<i style="left:3767.7px;top:181px;width:1.2px;height:87.75px;background:#9a9ea6;"></i>
<i style="left:3767.7px;top:275px;width:1.2px;height:542.5px;background:#9a9ea6;"></i>
<i style="left:474px;top:258px;width:3336px;height:2.2px;background:#f6f6f8;"></i>
<b class="t f155" style="left:476.3px;top:232px;color:#fff;">92</b>
<svg class="u" style="left:469.75px;top:233px;width:3.5px;height:10px;" viewBox="0 0 3.500 10"><path d="M0 0L3.500 5 0 10z" fill="#b4b4b6"/></svg>
<svg class="u" style="left:469.75px;top:254px;width:3.5px;height:10px;" viewBox="0 0 3.500 10"><path d="M0 0L3.500 5 0 10z" fill="#b4b4b6"/></svg>
<i style="left:4px;top:268.75px;width:3831px;height:6.25px;background:#1f2224;"></i>
<i style="left:1887px;top:271px;width:5.5px;height:2px;background:#3a3d41;"></i>
<i style="left:1894.5px;top:271px;width:5.5px;height:2px;background:#3a3d41;"></i>
<i style="left:1902px;top:271px;width:5.5px;height:2px;background:#3a3d41;"></i>
<i style="left:1909.5px;top:271px;width:5.5px;height:2px;background:#3a3d41;"></i>
<i style="left:1917px;top:271px;width:5.5px;height:2px;background:#3a3d41;"></i>
<i style="left:1924.5px;top:271px;width:5.5px;height:2px;background:#3a3d41;"></i>
<i style="left:1932px;top:271px;width:5.5px;height:2px;background:#3a3d41;"></i>
<i style="left:1939.5px;top:271px;width:5.5px;height:2px;background:#3a3d41;"></i>
<i style="left:1947px;top:271px;width:5.5px;height:2px;background:#3a3d41;"></i>
<i style="left:3810px;top:181px;width:25px;height:87.75px;background:#393c41;"></i>
<i style="left:3810px;top:275px;width:25px;height:569px;background:#393c41;"></i>
<svg class="u" style="left:3817.5px;top:281px;width:13px;height:9px;color:#7d8085;"><use href="#tu"/></svg>
<svg class="u" style="left:3817.5px;top:801px;width:13px;height:9px;color:#7d8085;"><use href="#td"/></svg>
<i style="left:4px;top:275px;width:464px;height:437px;background:#2a2d31;"></i>
<i style="left:4px;top:275px;width:15.5px;height:144.2px;background:#00b4c8;"></i>
<i style="left:20.5px;top:275px;width:432.7px;height:144.2px;background:#575c64;"></i>
<i style="left:454.2px;top:275px;width:13.8px;height:144.2px;background:#4b4f57;"></i>
<b class="tc f170" style="left:39.61px;top:287px;color:#d4d4d4;font-weight:700;">2</b>
<i style="left:57.5px;top:279px;width:141.5px;height:32.6px;background:#6b7077;border-radius:4px;box-shadow:0 0 0 1.5px #2c2f34,0 2px 2px 1px rgba(0,0,0,.25)"></i>
<i style="left:91.7px;top:279px;width:1.5px;height:32.6px;background:#3c4046;"></i>
<i style="left:127.6px;top:279px;width:1.5px;height:32.6px;background:#3c4046;"></i>
<i style="left:163.4px;top:279px;width:1.5px;height:32.6px;background:#3c4046;"></i>
<b class="tc f195" style="left:75.08px;top:284px;color:#dcdcdc;transform:scaleX(0.970);">M</b>
<b class="tc f195" style="left:110.32px;top:284px;color:#dcdcdc;transform:scaleX(0.970);">S</b>
<i style="left:139.5px;top:288.8px;width:13px;height:13px;background:#dcdcdc;border-radius:50%"></i>
<svg class="u" style="left:175.5px;top:287.8px;width:13px;height:15px;color:#dcdcdc;"><use href="#mono"/></svg>
<b class="t f190" style="left:207.3px;top:285px;color:#dadada;transform:scaleX(0.987);">Kontakt</b>
<svg class="u" style="left:414px;top:288.5px;width:26px;height:15px;color:#d8d8d8;"><use href="#kb"/></svg>
<i style="left:58px;top:320.3px;width:278px;height:5px;background:#33363b;"></i>
<i style="left:58px;top:320.3px;width:209.5px;height:5px;background:#9a9ea3;"></i>
<i style="left:4px;top:401px;width:15.5px;height:18px;background:rgba(0,0,0,.28);"></i>
<svg class="u" style="left:6px;top:405px;width:12px;height:10px;" viewBox="0 0 12 10"><path d="M0 8L4 2 8 8 12 2" fill="none" stroke="#5fd3e6" stroke-width="1.200"/></svg>
<i style="left:57px;top:335.3px;width:144.5px;height:23.8px;background:#6b7077;"></i>
<svg class="u" style="left:63px;top:342.3px;width:15px;height:9px;color:#dcdcdc;"><use href="#kb"/></svg>
<b class="t f175" style="left:85.5px;top:338px;color:#d0d2d5;transform:scaleX(0.960);">Kontakt</b>
<svg class="u" style="left:183px;top:344.6px;width:11px;height:6.5px;color:#b0b4b9;"><use href="#td"/></svg>
<i style="left:203.8px;top:335.3px;width:132.2px;height:23.8px;background:#6b7077;"></i>
<b class="t f175" style="left:208.8px;top:338px;color:#d0d2d5;transform:scaleX(0.960);">CH 1</b>
<svg class="u" style="left:317.5px;top:344.6px;width:11px;height:6.5px;color:#b0b4b9;"><use href="#td"/></svg>
<i style="left:57px;top:360.5px;width:279px;height:23.8px;background:#6b7077;"></i>
<svg class="u" style="left:63px;top:366.5px;width:16px;height:11px;" viewBox="0 0 16 11"><path d="M0 4.300h6V1l5 4.500-5 4.500V6.700H0zM12 0h4v11h-4z" fill="#dcdcdc"/></svg>
<b class="t f175" style="left:85.5px;top:363px;color:#d0d2d5;transform:scaleX(0.960);">All Inputs</b>
<svg class="u" style="left:317.5px;top:369.8px;width:11px;height:6.5px;color:#b0b4b9;"><use href="#td"/></svg>
<i style="left:57px;top:386.1px;width:279px;height:23.8px;background:#6b7077;"></i>
<svg class="u" style="left:63.5px;top:391.6px;width:12.5px;height:11px;color:#dcdcdc;"><use href="#ppl"/></svg>
<b class="t f175" style="left:85.5px;top:388px;color:#d0d2d5;transform:scaleX(0.960);">None</b>
<svg class="u" style="left:317.5px;top:395.4px;width:11px;height:6.5px;color:#b0b4b9;"><use href="#td"/></svg>
<i style="left:4px;top:419.1px;width:464px;height:1.7px;background:#26292d;"></i>
<i style="left:4px;top:420.8px;width:15.5px;height:144.2px;background:#3c5068;"></i>
<i style="left:20.5px;top:420.8px;width:432.7px;height:144.2px;background:#575c64;"></i>
<i style="left:454.2px;top:420.8px;width:13.8px;height:144.2px;background:#4b4f57;"></i>
<b class="tc f170" style="left:39.61px;top:433px;color:#d4d4d4;font-weight:700;">3</b>
<i style="left:57.5px;top:424.8px;width:141.5px;height:32.6px;background:#6b7077;border-radius:4px;box-shadow:0 0 0 1.5px #2c2f34,0 2px 2px 1px rgba(0,0,0,.25)"></i>
<i style="left:91.7px;top:424.8px;width:1.5px;height:32.6px;background:#3c4046;"></i>
<i style="left:127.6px;top:424.8px;width:1.5px;height:32.6px;background:#3c4046;"></i>
<i style="left:163.4px;top:424.8px;width:1.5px;height:32.6px;background:#3c4046;"></i>
<b class="tc f195" style="left:75.08px;top:430px;color:#dcdcdc;transform:scaleX(0.970);">M</b>
<b class="tc f195" style="left:110.32px;top:430px;color:#dcdcdc;transform:scaleX(0.970);">S</b>
<i style="left:139.5px;top:434.6px;width:13px;height:13px;background:#dcdcdc;border-radius:50%"></i>
<svg class="u" style="left:175.5px;top:433.6px;width:13px;height:15px;color:#dcdcdc;"><use href="#mono"/></svg>
<b class="t f190" style="left:207.3px;top:431px;color:#dadada;transform:scaleX(0.966);">Aggro Snare One Shots</b>
<svg class="u" style="left:414px;top:434.3px;width:26px;height:15px;color:#d8d8d8;"><use href="#kb"/></svg>
<i style="left:58px;top:466.1px;width:278px;height:5px;background:#33363b;"></i>
<i style="left:58px;top:466.1px;width:116px;height:5px;background:#9a9ea3;"></i>
<i style="left:4px;top:546.8px;width:15.5px;height:18px;background:rgba(0,0,0,.28);"></i>
<svg class="u" style="left:6px;top:550.8px;width:12px;height:10px;" viewBox="0 0 12 10"><path d="M0 8L4 2 8 8 12 2" fill="none" stroke="#5fd3e6" stroke-width="1.200"/></svg>
<i style="left:57px;top:481px;width:279px;height:23.8px;background:#6b7077;"></i>
<svg class="u" style="left:63px;top:488px;width:15px;height:9px;color:#dcdcdc;"><use href="#kb"/></svg>
<b class="t f175" style="left:85.5px;top:483px;color:#d0d2d5;transform:scaleX(0.960);">Impact XT</b>
<svg class="u" style="left:317.5px;top:490.3px;width:11px;height:6.5px;color:#b0b4b9;"><use href="#td"/></svg>
<i style="left:57px;top:506.5px;width:279px;height:23.8px;background:#6b7077;"></i>
<svg class="u" style="left:63px;top:512.5px;width:16px;height:11px;" viewBox="0 0 16 11"><path d="M0 4.300h6V1l5 4.500-5 4.500V6.700H0zM12 0h4v11h-4z" fill="#dcdcdc"/></svg>
<b class="t f175" style="left:85.5px;top:509px;color:#d0d2d5;transform:scaleX(0.960);">All Inputs</b>
<svg class="u" style="left:317.5px;top:515.8px;width:11px;height:6.5px;color:#b0b4b9;"><use href="#td"/></svg>
<i style="left:57px;top:532.1px;width:279px;height:23.8px;background:#6b7077;"></i>
<svg class="u" style="left:63.5px;top:537.6px;width:12.5px;height:11px;color:#dcdcdc;"><use href="#ppl"/></svg>
<b class="t f175" style="left:85.5px;top:534px;color:#d0d2d5;transform:scaleX(0.960);">None</b>
<svg class="u" style="left:317.5px;top:541.4px;width:11px;height:6.5px;color:#b0b4b9;"><use href="#td"/></svg>
<i style="left:4px;top:565.1px;width:464px;height:1.1px;background:#26292d;"></i>
<i style="left:4px;top:566.2px;width:15.5px;height:143.8px;background:#ff5a2d;"></i>
<i style="left:20.5px;top:566.2px;width:447.5px;height:143.8px;background:#484b53;"></i>
<i style="left:57.5px;top:570.5px;width:141.5px;height:32.6px;background:#6b7077;border-radius:4px;box-shadow:0 0 0 1.5px #2c2f34,0 2px 2px 1px rgba(0,0,0,.25)"></i>
<i style="left:91.7px;top:570.5px;width:1.5px;height:32.6px;background:#3c4046;"></i>
<i style="left:127.6px;top:570.5px;width:1.5px;height:32.6px;background:#3c4046;"></i>
<i style="left:163.4px;top:570.5px;width:1.5px;height:32.6px;background:#3c4046;"></i>
<b class="tc f195" style="left:75.08px;top:575px;color:#dcdcdc;transform:scaleX(0.970);">M</b>
<b class="tc f195" style="left:110.32px;top:575px;color:#dcdcdc;transform:scaleX(0.970);">S</b>
<i style="left:139.5px;top:580.3px;width:13px;height:13px;background:#dcdcdc;border-radius:50%"></i>
<svg class="u" style="left:175.5px;top:579.3px;width:13px;height:15px;color:#dcdcdc;"><use href="#mono"/></svg>
<b class="t f190" style="left:207.3px;top:577px;color:#dadada;transform:scaleX(0.966);">Polaris - The Remedy</b>
<svg class="u" style="left:417.7px;top:580px;width:22px;height:15px;" viewBox="0 0 22 15"><path d="M0 2Q0 0 2 0H8L10 2.500H22V15H0z" fill="#bfc2c6"/><path d="M0 4.500H22" stroke="#8d9096" stroke-width="1"/></svg>
<i style="left:57px;top:626.6px;width:240.6px;height:23.8px;background:#5c6068;"></i>
<b class="t f175" style="left:61.5px;top:629px;color:#d0d2d5;transform:scaleX(0.960);">None</b>
<svg class="u" style="left:279.1px;top:635.9px;width:11px;height:6.5px;color:#b0b4b9;"><use href="#td"/></svg>
<i style="left:299.7px;top:626.6px;width:36.3px;height:23.8px;background:#5c6068;"></i>
<svg class="u" style="left:308.5px;top:630.5px;width:18.5px;height:15px;color:#d6d6d6;"><use href="#ppl"/></svg>
<i style="left:4px;top:692px;width:15.5px;height:18px;background:#c33c1e;"></i>
<svg class="u" style="left:7.5px;top:698.5px;width:9px;height:6px;color:#f1b8aa;"><use href="#td"/></svg>
<i style="left:4px;top:710px;width:464px;height:2px;background:#1c1e21;"></i>
<i style="left:4px;top:712px;width:464px;height:105.5px;background:#42464e;"></i>
<i style="left:469.75px;top:275px;width:1445px;height:144.1px;background:#00b4c8;"></i>
<i style="left:469.75px;top:288.2px;width:1445px;height:1.7px;background:#3a6a6e;"></i>
<i style="left:469.75px;top:275px;width:1445px;height:1.1px;background:#0293a4;"></i>
<svg class="u" style="left:469.75px;top:276px;width:218px;height:19px;" viewBox="0 0 218 19"><path d="M0 0H215.300L205.200 19H0z" fill="#014a54"/></svg>
<b class="t f130" style="left:474.4px;top:278px;color:#f4f4f4;letter-spacing:1.9px">GGD OKW AggroRockCH1</b>
<svg class="u" style="left:469.75px;top:275px;width:1445px;height:144px;" viewBox="0 0 1445 144"><path d="M15.25 104.4h8M24.75 104.4h12M37.75 104.4h3M41.75 104.4h8M50.75 104.4h18M70.25 104.4h3M74.25 104.4h12M89.25 104.4h3M93.75 104.4h3M99.75 104.4h3M103.75 104.4h5M109.75 104.4h18M130.75 104.4h3M135.25 104.4h3M15.25 102.3h3M30.75 102.3h3M58.25 102.3h5M88.75 102.3h1.5M103.25 102.3h5M110.25 102.3h3M17.25 81.2h3M22.25 81.2h9M34.25 81.2h6M43.25 81.2h6M50.25 81.2h9M61.25 81.2h4M68.25 81.2h9M80.25 81.2h3M86.25 81.2h6M95.25 81.2h6M113.75 81.2h3M118.25 81.2h4M123.75 81.2h6M131.25 81.2h8M15.25 85.9h3M39.25 91.3h3M43.25 89.5h3M67.25 89.5h2M83.25 89.5h1.5M99.25 93.1h2M103.25 85.9h1.5M110.25 89.5h1.5M114.25 87.7h3M118.25 84.1h1.5M192.25 104.4h5M198.25 104.4h8M207.25 104.4h3M211.75 104.4h18M232.75 104.4h5M239.75 104.4h8M249.75 104.4h12M262.75 104.4h3M268.75 104.4h12M283.75 104.4h12M297.75 104.4h3M302.25 104.4h3M307.25 104.4h26M335.25 104.4h12M348.75 104.4h18M367.75 104.4h5M374.75 104.4h5M380.75 104.4h34M416.75 104.4h26M443.75 104.4h26M471.75 104.4h18M491.75 104.4h5M498.75 104.4h34M534.25 104.4h18M554.25 104.4h26M581.75 104.4h18M601.25 104.4h34M636.75 104.4h34M673.75 104.4h26M701.25 104.4h5M709.25 104.4h8M718.25 104.4h3M723.25 104.4h12M737.25 104.4h5M744.25 104.4h12M758.25 104.4h8M767.25 104.4h5M773.25 104.4h5M781.25 104.4h5M788.25 104.4h5M796.25 104.4h18M815.25 104.4h12M829.25 104.4h34M864.25 104.4h34M899.25 104.4h12M912.75 104.4h12M926.25 104.4h12M940.25 104.4h3M946.25 104.4h12M961.25 104.4h26M988.25 104.4h26M1015.75 104.4h5M1022.25 104.4h3M1026.75 104.4h18M1047.75 104.4h34M1083.25 104.4h18M1104.25 104.4h26M192.25 102.3h2M197.25 102.3h1.5M200.75 102.3h2M205.75 102.3h2M210.75 102.3h3M218.75 102.3h3M244.25 102.3h2M255.25 102.3h2M278.75 102.3h1.5M298.25 102.3h5M306.25 102.3h3M329.25 102.3h5M342.25 102.3h3M348.25 102.3h5M362.75 102.3h3M368.75 102.3h5M383.75 102.3h2M393.75 102.3h5M401.75 102.3h3M409.75 102.3h1.5M432.25 102.3h3M440.25 102.3h1.5M444.75 102.3h1.5M466.75 102.3h3M477.75 102.3h3M482.75 102.3h2M491.75 102.3h3M497.75 102.3h1.5M501.25 102.3h5M524.25 102.3h3M536.25 102.3h3M542.25 102.3h3M547.25 102.3h3M552.25 102.3h2M557.25 102.3h5M570.25 102.3h5M589.25 102.3h3M602.25 102.3h2M609.25 102.3h5M630.25 102.3h5M640.25 102.3h5M658.25 102.3h2M665.25 102.3h2M669.25 102.3h3M680.25 102.3h3M686.25 102.3h2M690.25 102.3h1.5M693.75 102.3h2M697.75 102.3h5M707.75 102.3h2M725.75 102.3h2M744.25 102.3h2M763.75 102.3h5M848.75 102.3h2M852.75 102.3h5M866.75 102.3h3M893.25 102.3h1.5M933.25 102.3h2M943.25 102.3h5M974.25 102.3h3M979.25 102.3h3M987.25 102.3h5M1001.75 102.3h3M1027.75 102.3h1.5M1047.25 102.3h3M1072.25 102.3h5M1080.25 102.3h3M1086.25 102.3h2M1093.25 102.3h3M1124.25 102.3h1.5M1128.75 102.3h1.5M194.25 81.2h4M200.25 81.2h9M210.75 81.2h4M216.75 81.2h3M221.75 81.2h6M229.25 81.2h3M235.25 81.2h9M245.75 81.2h9M255.75 81.2h9M266.75 81.2h4M272.25 81.2h3M276.75 81.2h9M298.75 81.2h4M305.75 81.2h9M328.25 81.2h3M338.75 81.2h3M342.75 81.2h3M347.25 81.2h3M352.25 81.2h4M359.25 81.2h3M364.25 81.2h4M369.75 81.2h3M374.75 81.2h9M385.75 81.2h4M391.25 81.2h4M398.25 81.2h6M405.75 81.2h9M417.75 81.2h3M423.75 81.2h6M430.75 81.2h6M438.75 81.2h9M449.75 81.2h3M454.25 81.2h6M461.75 81.2h4M467.75 81.2h6M476.75 81.2h4M483.75 81.2h9M493.75 81.2h4M498.75 81.2h4M504.25 81.2h9M514.25 81.2h4M524.75 81.2h6M533.75 81.2h3M548.75 81.2h4M553.75 81.2h6M562.75 81.2h3M567.25 81.2h9M578.25 81.2h9M590.25 81.2h4M597.25 81.2h4M604.25 81.2h3M608.75 81.2h9M618.75 81.2h9M628.75 81.2h6M635.75 81.2h6M643.75 81.2h3M648.75 81.2h6M655.75 81.2h3M659.75 81.2h9M671.75 81.2h9M683.75 81.2h9M695.75 81.2h4M701.75 81.2h4M707.75 81.2h6M714.75 81.2h4M720.25 81.2h4M725.25 81.2h9M741.25 81.2h3M745.25 81.2h4M752.25 81.2h9M762.75 81.2h9M773.25 81.2h3M778.25 81.2h6M786.25 81.2h6M794.25 81.2h4M799.75 81.2h4M805.75 81.2h4M820.25 81.2h3M824.25 81.2h3M828.75 81.2h9M838.75 81.2h6M845.75 81.2h4M851.25 81.2h3M855.75 81.2h9M865.75 81.2h3M870.75 81.2h4M876.75 81.2h4M882.75 81.2h3M887.25 81.2h3M893.25 81.2h6M901.25 81.2h3M907.25 81.2h9M917.25 81.2h9M927.75 81.2h3M933.75 81.2h6M941.75 81.2h6M948.75 81.2h6M956.75 81.2h9M967.75 81.2h4M981.75 81.2h4M986.75 81.2h9M997.75 81.2h9M1008.25 81.2h3M1012.75 81.2h9M1023.75 81.2h4M1029.75 81.2h4M1034.75 81.2h3M1039.25 81.2h6M1046.25 81.2h9M1058.25 81.2h3M1062.75 81.2h4M1068.25 81.2h9M1078.75 81.2h3M1083.25 81.2h9M1099.25 81.2h3M1103.25 81.2h6M1112.25 81.2h6M1120.25 81.2h4M1126.25 81.2h6M192.25 84.1h1.5M216.25 89.5h2M223.25 89.5h3M239.25 85.9h2M255.25 84.1h1.5M262.25 87.7h2M273.25 84.1h2M297.25 91.3h3M301.25 84.1h3M308.25 84.1h3M319.25 93.1h3M323.25 84.1h3M339.25 93.1h1.5M343.25 84.1h3M347.25 85.9h1.5M363.25 87.7h1.5M370.25 84.1h2M394.25 87.7h1.5M405.25 91.3h2M421.25 85.9h2M445.25 89.5h1.5M469.25 87.7h3M493.25 85.9h2M504.25 84.1h1.5M511.25 89.5h1.5M522.25 93.1h2M538.25 85.9h2M542.25 91.3h1.5M553.25 89.5h3M577.25 91.3h3M581.25 87.7h3M597.25 93.1h2M608.25 89.5h2M632.25 85.9h2M643.25 84.1h2M650.25 85.9h3M654.25 87.7h3M665.25 87.7h3M689.25 93.1h2M693.25 93.1h1.5M700.25 85.9h2M724.25 93.1h2M740.25 91.3h2M744.25 85.9h2M751.25 91.3h3M755.25 84.1h1.5M759.25 91.3h2M770.25 84.1h3M781.25 91.3h1.5M797.25 91.3h2M821.25 85.9h1.5M832.25 91.3h2M839.25 85.9h1.5M846.25 93.1h1.5M862.25 84.1h1.5M869.25 93.1h2M885.25 87.7h1.5M889.25 93.1h3M900.25 91.3h3M924.25 89.5h3M948.25 93.1h2M955.25 85.9h1.5M959.25 84.1h3M963.25 89.5h1.5M970.25 85.9h1.5M974.25 84.1h3M998.25 93.1h1.5M1005.25 89.5h1.5M1029.25 91.3h3M1053.25 93.1h3M1069.25 91.3h1.5M1093.25 87.7h1.5M1104.25 93.1h1.5M1120.25 93.1h3M1124.25 89.5h2M1192.25 104.4h3M1198.25 104.4h5M1204.75 104.4h3M1209.75 104.4h5M1215.75 104.4h3M1220.75 104.4h26M1248.75 104.4h26M1275.75 104.4h8M1286.75 104.4h26M1314.75 104.4h8M1324.25 104.4h3M1328.25 104.4h5M1335.25 104.4h5M1341.75 104.4h5M1348.75 104.4h5M1356.75 104.4h8M1366.25 104.4h12M1381.25 104.4h12M1394.25 104.4h34M1429.25 104.4h12M1442.75 104.4h1.25M1192.25 102.3h2M1196.25 102.3h2M1200.25 102.3h1.5M1209.75 102.3h1.5M1216.75 102.3h3M1221.75 102.3h5M1229.75 102.3h2M1240.25 102.3h5M1247.25 102.3h2M1254.25 102.3h5M1285.25 102.3h5M1292.25 102.3h3M1301.25 102.3h3M1306.25 102.3h2M1310.25 102.3h1.5M1331.75 102.3h2M1336.75 102.3h2M1340.75 102.3h1.5M1344.25 102.3h3M1369.25 102.3h3M1393.25 102.3h5M1416.25 102.3h2M1423.25 102.3h2M1433.25 102.3h2M1200.25 81.2h6M1208.25 81.2h4M1218.25 81.2h4M1223.75 81.2h6M1232.75 81.2h6M1239.75 81.2h6M1248.75 81.2h9M1260.75 81.2h9M1271.75 81.2h9M1282.75 81.2h9M1293.25 81.2h9M1305.25 81.2h4M1310.75 81.2h4M1317.75 81.2h9M1327.75 81.2h9M1339.75 81.2h4M1346.75 81.2h9M1358.75 81.2h4M1364.75 81.2h3M1370.75 81.2h3M1375.25 81.2h4M1380.75 81.2h6M1389.75 81.2h4M1394.75 81.2h6M1403.75 81.2h9M1414.25 81.2h9M1424.25 81.2h6M1432.25 81.2h6M1439.25 81.2h3M1192.25 93.1h3M1203.25 91.3h2M1207.25 85.9h2M1223.25 91.3h1.5M1239.25 89.5h1.5M1246.25 85.9h1.5M1253.25 89.5h3M1277.25 93.1h1.5M1284.25 87.7h3M1300.25 89.5h2M1324.25 93.1h1.5M1340.25 87.7h1.5M1351.25 93.1h2M1362.25 89.5h3M1369.25 89.5h1.5M1380.25 87.7h1.5M1391.25 87.7h2M1407.25 89.5h3M1411.25 93.1h2M1418.25 87.7h2M1422.25 84.1h3M1433.25 85.9h3M148.25 86.6h4M152.25 85.1h4M156.25 84.1h4M160.25 85.1h4M164.25 86.6h4M170.25 88.6h4M176.25 90.6h4M182.25 92.6h4M188.25 94.6h4M1014.25 34.6h1.5M1443.75 36.6h1.2M1443.75 68.6h1.2" stroke="#46494a" stroke-width="1.15" fill="none"/></svg>
<i style="left:469.75px;top:420.8px;width:1446px;height:144.3px;background:#2f6479;box-shadow:inset 0 0 0 2px #0ae4ff"></i>
<i style="left:471.75px;top:434.5px;width:1442px;height:1.6px;background:#3d5666;"></i>
<svg class="u" style="left:471.75px;top:422.8px;width:216px;height:17.5px;" viewBox="0 0 216 17.500"><path d="M0 0H213.500L206.300 17.500H0z" fill="#16222c"/></svg>
<b class="t f130" style="left:474.4px;top:424px;color:#f4f4f4;letter-spacing:1.9px">GGD OKW AggroRockCH1</b>
<svg class="u" style="left:469.75px;top:420.8px;width:1445px;height:144px;" viewBox="0 0 1445 144"><path d="M15.25 104.4h8M24.75 104.4h12M37.75 104.4h3M41.75 104.4h8M50.75 104.4h18M70.25 104.4h3M74.25 104.4h12M89.25 104.4h3M93.75 104.4h3M99.75 104.4h3M103.75 104.4h5M109.75 104.4h18M130.75 104.4h3M135.25 104.4h3M15.25 102.3h3M30.75 102.3h3M58.25 102.3h5M88.75 102.3h1.5M103.25 102.3h5M110.25 102.3h3M17.25 81.2h3M22.25 81.2h9M34.25 81.2h6M43.25 81.2h6M50.25 81.2h9M61.25 81.2h4M68.25 81.2h9M80.25 81.2h3M86.25 81.2h6M95.25 81.2h6M113.75 81.2h3M118.25 81.2h4M123.75 81.2h6M131.25 81.2h8M15.25 85.9h3M39.25 91.3h3M43.25 89.5h3M67.25 89.5h2M83.25 89.5h1.5M99.25 93.1h2M103.25 85.9h1.5M110.25 89.5h1.5M114.25 87.7h3M118.25 84.1h1.5M192.25 104.4h5M198.25 104.4h8M207.25 104.4h3M211.75 104.4h18M232.75 104.4h5M239.75 104.4h8M249.75 104.4h12M262.75 104.4h3M268.75 104.4h12M283.75 104.4h12M297.75 104.4h3M302.25 104.4h3M307.25 104.4h26M335.25 104.4h12M348.75 104.4h18M367.75 104.4h5M374.75 104.4h5M380.75 104.4h34M416.75 104.4h26M443.75 104.4h26M471.75 104.4h18M491.75 104.4h5M498.75 104.4h34M534.25 104.4h18M554.25 104.4h26M581.75 104.4h18M601.25 104.4h34M636.75 104.4h34M673.75 104.4h26M701.25 104.4h5M709.25 104.4h8M718.25 104.4h3M723.25 104.4h12M737.25 104.4h5M744.25 104.4h12M758.25 104.4h8M767.25 104.4h5M773.25 104.4h5M781.25 104.4h5M788.25 104.4h5M796.25 104.4h18M815.25 104.4h12M829.25 104.4h34M864.25 104.4h34M899.25 104.4h12M912.75 104.4h12M926.25 104.4h12M940.25 104.4h3M946.25 104.4h12M961.25 104.4h26M988.25 104.4h26M1015.75 104.4h5M1022.25 104.4h3M1026.75 104.4h18M1047.75 104.4h34M1083.25 104.4h18M1104.25 104.4h26M192.25 102.3h2M197.25 102.3h1.5M200.75 102.3h2M205.75 102.3h2M210.75 102.3h3M218.75 102.3h3M244.25 102.3h2M255.25 102.3h2M278.75 102.3h1.5M298.25 102.3h5M306.25 102.3h3M329.25 102.3h5M342.25 102.3h3M348.25 102.3h5M362.75 102.3h3M368.75 102.3h5M383.75 102.3h2M393.75 102.3h5M401.75 102.3h3M409.75 102.3h1.5M432.25 102.3h3M440.25 102.3h1.5M444.75 102.3h1.5M466.75 102.3h3M477.75 102.3h3M482.75 102.3h2M491.75 102.3h3M497.75 102.3h1.5M501.25 102.3h5M524.25 102.3h3M536.25 102.3h3M542.25 102.3h3M547.25 102.3h3M552.25 102.3h2M557.25 102.3h5M570.25 102.3h5M589.25 102.3h3M602.25 102.3h2M609.25 102.3h5M630.25 102.3h5M640.25 102.3h5M658.25 102.3h2M665.25 102.3h2M669.25 102.3h3M680.25 102.3h3M686.25 102.3h2M690.25 102.3h1.5M693.75 102.3h2M697.75 102.3h5M707.75 102.3h2M725.75 102.3h2M744.25 102.3h2M763.75 102.3h5M848.75 102.3h2M852.75 102.3h5M866.75 102.3h3M893.25 102.3h1.5M933.25 102.3h2M943.25 102.3h5M974.25 102.3h3M979.25 102.3h3M987.25 102.3h5M1001.75 102.3h3M1027.75 102.3h1.5M1047.25 102.3h3M1072.25 102.3h5M1080.25 102.3h3M1086.25 102.3h2M1093.25 102.3h3M1124.25 102.3h1.5M1128.75 102.3h1.5M194.25 81.2h4M200.25 81.2h9M210.75 81.2h4M216.75 81.2h3M221.75 81.2h6M229.25 81.2h3M235.25 81.2h9M245.75 81.2h9M255.75 81.2h9M266.75 81.2h4M272.25 81.2h3M276.75 81.2h9M298.75 81.2h4M305.75 81.2h9M328.25 81.2h3M338.75 81.2h3M342.75 81.2h3M347.25 81.2h3M352.25 81.2h4M359.25 81.2h3M364.25 81.2h4M369.75 81.2h3M374.75 81.2h9M385.75 81.2h4M391.25 81.2h4M398.25 81.2h6M405.75 81.2h9M417.75 81.2h3M423.75 81.2h6M430.75 81.2h6M438.75 81.2h9M449.75 81.2h3M454.25 81.2h6M461.75 81.2h4M467.75 81.2h6M476.75 81.2h4M483.75 81.2h9M493.75 81.2h4M498.75 81.2h4M504.25 81.2h9M514.25 81.2h4M524.75 81.2h6M533.75 81.2h3M548.75 81.2h4M553.75 81.2h6M562.75 81.2h3M567.25 81.2h9M578.25 81.2h9M590.25 81.2h4M597.25 81.2h4M604.25 81.2h3M608.75 81.2h9M618.75 81.2h9M628.75 81.2h6M635.75 81.2h6M643.75 81.2h3M648.75 81.2h6M655.75 81.2h3M659.75 81.2h9M671.75 81.2h9M683.75 81.2h9M695.75 81.2h4M701.75 81.2h4M707.75 81.2h6M714.75 81.2h4M720.25 81.2h4M725.25 81.2h9M741.25 81.2h3M745.25 81.2h4M752.25 81.2h9M762.75 81.2h9M773.25 81.2h3M778.25 81.2h6M786.25 81.2h6M794.25 81.2h4M799.75 81.2h4M805.75 81.2h4M820.25 81.2h3M824.25 81.2h3M828.75 81.2h9M838.75 81.2h6M845.75 81.2h4M851.25 81.2h3M855.75 81.2h9M865.75 81.2h3M870.75 81.2h4M876.75 81.2h4M882.75 81.2h3M887.25 81.2h3M893.25 81.2h6M901.25 81.2h3M907.25 81.2h9M917.25 81.2h9M927.75 81.2h3M933.75 81.2h6M941.75 81.2h6M948.75 81.2h6M956.75 81.2h9M967.75 81.2h4M981.75 81.2h4M986.75 81.2h9M997.75 81.2h9M1008.25 81.2h3M1012.75 81.2h9M1023.75 81.2h4M1029.75 81.2h4M1034.75 81.2h3M1039.25 81.2h6M1046.25 81.2h9M1058.25 81.2h3M1062.75 81.2h4M1068.25 81.2h9M1078.75 81.2h3M1083.25 81.2h9M1099.25 81.2h3M1103.25 81.2h6M1112.25 81.2h6M1120.25 81.2h4M1126.25 81.2h6M192.25 84.1h1.5M216.25 89.5h2M223.25 89.5h3M239.25 85.9h2M255.25 84.1h1.5M262.25 87.7h2M273.25 84.1h2M297.25 91.3h3M301.25 84.1h3M308.25 84.1h3M319.25 93.1h3M323.25 84.1h3M339.25 93.1h1.5M343.25 84.1h3M347.25 85.9h1.5M363.25 87.7h1.5M370.25 84.1h2M394.25 87.7h1.5M405.25 91.3h2M421.25 85.9h2M445.25 89.5h1.5M469.25 87.7h3M493.25 85.9h2M504.25 84.1h1.5M511.25 89.5h1.5M522.25 93.1h2M538.25 85.9h2M542.25 91.3h1.5M553.25 89.5h3M577.25 91.3h3M581.25 87.7h3M597.25 93.1h2M608.25 89.5h2M632.25 85.9h2M643.25 84.1h2M650.25 85.9h3M654.25 87.7h3M665.25 87.7h3M689.25 93.1h2M693.25 93.1h1.5M700.25 85.9h2M724.25 93.1h2M740.25 91.3h2M744.25 85.9h2M751.25 91.3h3M755.25 84.1h1.5M759.25 91.3h2M770.25 84.1h3M781.25 91.3h1.5M797.25 91.3h2M821.25 85.9h1.5M832.25 91.3h2M839.25 85.9h1.5M846.25 93.1h1.5M862.25 84.1h1.5M869.25 93.1h2M885.25 87.7h1.5M889.25 93.1h3M900.25 91.3h3M924.25 89.5h3M948.25 93.1h2M955.25 85.9h1.5M959.25 84.1h3M963.25 89.5h1.5M970.25 85.9h1.5M974.25 84.1h3M998.25 93.1h1.5M1005.25 89.5h1.5M1029.25 91.3h3M1053.25 93.1h3M1069.25 91.3h1.5M1093.25 87.7h1.5M1104.25 93.1h1.5M1120.25 93.1h3M1124.25 89.5h2M1192.25 104.4h3M1198.25 104.4h5M1204.75 104.4h3M1209.75 104.4h5M1215.75 104.4h3M1220.75 104.4h26M1248.75 104.4h26M1275.75 104.4h8M1286.75 104.4h26M1314.75 104.4h8M1324.25 104.4h3M1328.25 104.4h5M1335.25 104.4h5M1341.75 104.4h5M1348.75 104.4h5M1356.75 104.4h8M1366.25 104.4h12M1381.25 104.4h12M1394.25 104.4h34M1429.25 104.4h12M1442.75 104.4h1.25M1192.25 102.3h2M1196.25 102.3h2M1200.25 102.3h1.5M1209.75 102.3h1.5M1216.75 102.3h3M1221.75 102.3h5M1229.75 102.3h2M1240.25 102.3h5M1247.25 102.3h2M1254.25 102.3h5M1285.25 102.3h5M1292.25 102.3h3M1301.25 102.3h3M1306.25 102.3h2M1310.25 102.3h1.5M1331.75 102.3h2M1336.75 102.3h2M1340.75 102.3h1.5M1344.25 102.3h3M1369.25 102.3h3M1393.25 102.3h5M1416.25 102.3h2M1423.25 102.3h2M1433.25 102.3h2M1200.25 81.2h6M1208.25 81.2h4M1218.25 81.2h4M1223.75 81.2h6M1232.75 81.2h6M1239.75 81.2h6M1248.75 81.2h9M1260.75 81.2h9M1271.75 81.2h9M1282.75 81.2h9M1293.25 81.2h9M1305.25 81.2h4M1310.75 81.2h4M1317.75 81.2h9M1327.75 81.2h9M1339.75 81.2h4M1346.75 81.2h9M1358.75 81.2h4M1364.75 81.2h3M1370.75 81.2h3M1375.25 81.2h4M1380.75 81.2h6M1389.75 81.2h4M1394.75 81.2h6M1403.75 81.2h9M1414.25 81.2h9M1424.25 81.2h6M1432.25 81.2h6M1439.25 81.2h3M1192.25 93.1h3M1203.25 91.3h2M1207.25 85.9h2M1223.25 91.3h1.5M1239.25 89.5h1.5M1246.25 85.9h1.5M1253.25 89.5h3M1277.25 93.1h1.5M1284.25 87.7h3M1300.25 89.5h2M1324.25 93.1h1.5M1340.25 87.7h1.5M1351.25 93.1h2M1362.25 89.5h3M1369.25 89.5h1.5M1380.25 87.7h1.5M1391.25 87.7h2M1407.25 89.5h3M1411.25 93.1h2M1418.25 87.7h2M1422.25 84.1h3M1433.25 85.9h3M148.25 86.6h4M152.25 85.1h4M156.25 84.1h4M160.25 85.1h4M164.25 86.6h4M170.25 88.6h4M176.25 90.6h4M182.25 92.6h4M188.25 94.6h4M1014.25 34.6h1.5M1443.75 36.6h1.2M1443.75 68.6h1.2" stroke="#bcd3dc" stroke-width="1.15" fill="none"/></svg>
<i style="left:469.75px;top:566.2px;width:1481.05px;height:143.6px;background:#ff5a30;"></i>
<i style="left:475px;top:576.7px;width:1470px;height:10.6px;background:#6e8a80;"></i>
<i style="left:475px;top:593.08px;width:1470px;height:10.6px;background:#717f72;"></i>
<i style="left:475px;top:609.46px;width:1470px;height:10.6px;background:#5f6b5f;"></i>
<i style="left:475px;top:625.84px;width:1470px;height:10.6px;background:#5b665c;"></i>
<i style="left:475px;top:642.22px;width:1470px;height:10.6px;background:#5b5f58;"></i>
<i style="left:475px;top:658.6px;width:1470px;height:10.6px;background:#97967b;"></i>
<i style="left:475px;top:674.98px;width:1470px;height:10.6px;background:#9a9081;"></i>
<i style="left:475px;top:691.36px;width:1470px;height:10.6px;background:#98857f;"></i>
<svg class="u" style="left:469.75px;top:567.2px;width:176px;height:18px;" viewBox="0 0 176 18"><path d="M0 0H172.500L164.500 18H0z" fill="#682213"/></svg>
<b class="t f130" style="left:474.4px;top:569px;color:#f4f4f4;letter-spacing:1.55px">Polaris - The Remedy</b>
<i style="left:4px;top:817.5px;width:3831px;height:26.5px;background:#393b40;"></i>
<i style="left:76px;top:817.5px;width:1px;height:26.5px;background:#3f4247;"></i>
<i style="left:150.5px;top:817.5px;width:1px;height:26.5px;background:#3f4247;"></i>
<i style="left:222px;top:817.5px;width:1px;height:26.5px;background:#3f4247;"></i>
<b class="tc f135" style="left:39.49px;top:826px;color:#e4e4e4;">M</b>
<b class="tc f135" style="left:113.71px;top:826px;color:#e4e4e4;">S</b>
<svg class="u" style="left:178.8px;top:824.5px;width:15.6px;height:14.7px;color:#2f9ef0;"><use href="#pw"/></svg>
<b class="tc f155" style="left:319.31px;top:824px;color:#e4e4e4;transform:scaleX(1.007);">Medium</b>
<svg class="u" style="left:416px;top:827px;width:11px;height:7px;color:#c9cbce;"><use href="#td"/></svg>
<i style="left:447px;top:824.5px;width:12px;height:2.4px;background:#55585d;"></i>
<i style="left:447px;top:828.7px;width:12px;height:2.4px;background:#55585d;"></i>
<i style="left:447px;top:832.9px;width:12px;height:2.4px;background:#55585d;"></i>
<svg class="u" style="left:479.5px;top:825px;width:9.5px;height:13px;color:#a9abae;"><use href="#tl"/></svg>
<i style="left:506.8px;top:828.5px;width:428px;height:7px;background:#8f9296;"></i>
<svg class="u" style="left:3626px;top:825px;width:9.5px;height:13px;color:#a9abae;"><use href="#trr"/></svg>
<svg class="u" style="left:3652px;top:826.5px;width:15px;height:10px;color:#6c6f74;"><use href="#tu"/></svg>
<i style="left:3672.5px;top:830.8px;width:98px;height:2.2px;background:#55585d;"></i>
<i style="left:3679.5px;top:823px;width:6px;height:17.5px;background:#6c6f74;"></i>
<svg class="u" style="left:3777.5px;top:824px;width:22px;height:14.5px;color:#6c6f74;"><use href="#tu"/></svg>
<i style="left:3821px;top:821.5px;width:10px;height:2.8px;background:#55585d;"></i>
<i style="left:3821px;top:826px;width:10px;height:2.8px;background:#55585d;"></i>
<i style="left:3811px;top:833px;width:6px;height:2.2px;background:#55585d;"></i>
<i style="left:3811px;top:837px;width:6px;height:2.2px;background:#55585d;"></i>
<i style="left:0px;top:848.2px;width:3840px;height:1176.8px;background:#0c0d0e;"></i>
<i style="left:4px;top:853px;width:3831px;height:1167px;background:#393c41;"></i>
<i style="left:4px;top:853px;width:83.8px;height:33.7px;background:#5c6066;"></i>
<svg class="u" style="left:16.3px;top:861.7px;width:16px;height:15.5px;" viewBox="0 0 16 15.500"><path d="M1.500 1.500L14.500 14M14.500 1.500L1.500 14" stroke="#dcdcdc" stroke-width="3.600"/></svg>
<svg class="u" style="left:64.5px;top:861.5px;width:15.5px;height:15.5px;" viewBox="0 0 16 16"><path d="M5 0H16V11L12.300 7.300 3.500 16 0 12.500 8.700 3.700z" fill="#d0d0d0"/></svg>
<i style="left:4px;top:889px;width:60.4px;height:32.5px;background:#4a4e55;"></i>
<i style="left:65.2px;top:889px;width:22.6px;height:32.5px;background:#4a4e55;"></i>
<b class="tc f175" style="left:33.99px;top:896px;color:#e6e6e6;transform:scaleX(0.970);">I/O</b>
<svg class="u" style="left:70px;top:901.5px;width:13px;height:8.5px;color:#e6e6e6;"><use href="#td"/></svg>
<i style="left:4px;top:923.4px;width:83.8px;height:34px;background:#4a4e55;"></i>
<svg class="u" style="left:37.5px;top:931.5px;width:18px;height:18px;color:#d8d8d8;"><use href="#wr"/></svg>
<i style="left:87.8px;top:853px;width:2.7px;height:1167px;background:#0c0d0e;"></i>
<i style="left:4px;top:1695.4px;width:83.8px;height:41.6px;background:#484c53;"></i>
<i style="left:4px;top:1738.5px;width:83.8px;height:40.1px;background:#484c53;"></i>
<i style="left:4px;top:1780px;width:83.8px;height:35px;background:#484c53;"></i>
<i style="left:4px;top:1816.5px;width:83.8px;height:34.5px;background:#484c53;"></i>
<i style="left:4px;top:1852.5px;width:83.8px;height:34.8px;background:#484c53;"></i>
<i style="left:4px;top:1888.5px;width:83.8px;height:34.2px;background:#2e8cd0;"></i>
<i style="left:4px;top:1924px;width:83.8px;height:34.7px;background:#484c53;"></i>
<i style="left:4px;top:1960.3px;width:83.8px;height:34.5px;background:#2e8cd0;"></i>
<i style="left:4px;top:1996px;width:83.8px;height:23.5px;background:#484c53;"></i>
<svg class="u" style="left:38.5px;top:1704px;width:15px;height:10px;color:#dcdcdc;"><use href="#td"/></svg>
<svg class="u" style="left:38.5px;top:1720.5px;width:15px;height:10px;color:#dcdcdc;"><use href="#tu"/></svg>
<svg class="u" style="left:32.5px;top:1751.5px;width:9px;height:15px;color:#dcdcdc;"><use href="#trr"/></svg>
<svg class="u" style="left:50.5px;top:1751.5px;width:9px;height:15px;color:#dcdcdc;"><use href="#tl"/></svg>
<b class="tc f175" style="left:45.99px;top:1788px;color:#f0f0f0;transform:scaleX(0.970);">Inputs</b>
<b class="tc f175" style="left:46.02px;top:1824px;color:#f0f0f0;transform:scaleX(0.970);">Outputs</b>
<b class="tc f175" style="left:45.99px;top:1860px;color:#f0f0f0;transform:scaleX(0.970);">External</b>
<b class="tc f175" style="left:45.98px;top:1896px;color:#fff;transform:scaleX(0.970);">Instr.</b>
<svg class="u" style="left:36.5px;top:1933.5px;width:19px;height:16.5px;color:#b9bcc0;"><use href="#ppl"/></svg>
<i style="left:34px;top:1970px;width:24.5px;height:2.8px;background:#f4f4f4;"></i>
<i style="left:34px;top:1975px;width:24.5px;height:2.8px;background:#f4f4f4;"></i>
<i style="left:34px;top:1980px;width:24.5px;height:2.8px;background:#f4f4f4;"></i>
<i style="left:34px;top:1985px;width:24.5px;height:2.8px;background:#f4f4f4;"></i>
<i style="left:90.5px;top:853px;width:294px;height:33.7px;background:#5c6066;"></i>
<i style="left:307.5px;top:853px;width:1.5px;height:33.7px;background:#484b51;"></i>
<b class="t f175" style="left:208.7px;top:860px;color:#f4f4f4;transform:scaleX(0.947);">Channel</b>
<b class="t f175" style="left:314px;top:860px;color:#f4f4f4;transform:scaleX(0.966);">Group</b>
<i style="left:90.500px;top:886.700px;width:294px;height:620px;overflow:hidden">
<b class="tr f170" style="left:35.32px;top:6px;color:#e6e6e6;">1</b>
<i style="left:42.8px;top:1.8px;width:2.8px;height:27px;background:#4d4e52;"></i>
<i style="left:48.6px;top:1.8px;width:2.8px;height:27px;background:#4d4e52;"></i>
<i style="left:60.5px;top:10.8px;width:9.2px;height:9.2px;background:#e2e2e2;border-radius:50%"></i>
<svg class="u" style="left:81.5px;top:10.8px;width:16.5px;height:9.5px;color:#dcdcdc;"><use href="#kb"/></svg>
<i style="left:102.6px;top:1px;width:9px;height:26.8px;background:#00b4c8;"></i>
<b class="t f170" style="left:133.3px;top:6px;color:#e6e6e6;transform:scaleX(1.014);">Kt.O..der-</b>
<b class="tr f170" style="left:37.02px;top:36px;color:#e6e6e6;">2</b>
<i style="left:42.8px;top:31.8px;width:2.8px;height:27px;background:#4d4e52;"></i>
<i style="left:48.6px;top:31.8px;width:2.8px;height:27px;background:#4d4e52;"></i>
<i style="left:60.5px;top:40.8px;width:9.2px;height:9.2px;background:#e2e2e2;border-radius:50%"></i>
<svg class="u" style="left:81.5px;top:40.8px;width:16.5px;height:9.5px;color:#dcdcdc;"><use href="#kb"/></svg>
<b class="t f170" style="left:133.3px;top:36px;color:#e6e6e6;transform:scaleX(1.026);">Kt. Kick</b>
<b class="tr f170" style="left:37.02px;top:66px;color:#e6e6e6;">3</b>
<i style="left:42.8px;top:61.8px;width:2.8px;height:27px;background:#4d4e52;"></i>
<i style="left:48.6px;top:61.8px;width:2.8px;height:27px;background:#4d4e52;"></i>
<i style="left:60.5px;top:70.8px;width:9.2px;height:9.2px;background:#e2e2e2;border-radius:50%"></i>
<svg class="u" style="left:81.5px;top:70.8px;width:16.5px;height:9.5px;color:#dcdcdc;"><use href="#kb"/></svg>
<b class="t f170" style="left:133.3px;top:66px;color:#e6e6e6;transform:scaleX(0.989);">Kt. Snare</b>
<b class="tr f170" style="left:37.02px;top:96px;color:#e6e6e6;">4</b>
<i style="left:42.8px;top:91.8px;width:2.8px;height:27px;background:#4d4e52;"></i>
<i style="left:48.6px;top:91.8px;width:2.8px;height:27px;background:#4d4e52;"></i>
<i style="left:60.5px;top:100.8px;width:9.2px;height:9.2px;background:#e2e2e2;border-radius:50%"></i>
<svg class="u" style="left:81.5px;top:100.8px;width:16.5px;height:9.5px;color:#dcdcdc;"><use href="#kb"/></svg>
<b class="t f170" style="left:133.3px;top:96px;color:#e6e6e6;transform:scaleX(1.018);">Kt. Tom 1</b>
<b class="tr f170" style="left:37.02px;top:126px;color:#e6e6e6;">5</b>
<i style="left:42.8px;top:121.8px;width:2.8px;height:27px;background:#4d4e52;"></i>
<i style="left:48.6px;top:121.8px;width:2.8px;height:27px;background:#4d4e52;"></i>
<i style="left:60.5px;top:130.8px;width:9.2px;height:9.2px;background:#e2e2e2;border-radius:50%"></i>
<svg class="u" style="left:81.5px;top:130.8px;width:16.5px;height:9.5px;color:#dcdcdc;"><use href="#kb"/></svg>
<b class="t f170" style="left:133.3px;top:126px;color:#e6e6e6;transform:scaleX(1.030);">Kt. Tom 2</b>
<b class="tr f170" style="left:37.02px;top:156px;color:#e6e6e6;">6</b>
<i style="left:42.8px;top:151.8px;width:2.8px;height:27px;background:#4d4e52;"></i>
<i style="left:48.6px;top:151.8px;width:2.8px;height:27px;background:#4d4e52;"></i>
<i style="left:60.5px;top:160.8px;width:9.2px;height:9.2px;background:#e2e2e2;border-radius:50%"></i>
<svg class="u" style="left:81.5px;top:160.8px;width:16.5px;height:9.5px;color:#dcdcdc;"><use href="#kb"/></svg>
<b class="t f170" style="left:133.3px;top:156px;color:#e6e6e6;">Kt. OH</b>
<b class="tr f170" style="left:37.02px;top:186px;color:#e6e6e6;">7</b>
<i style="left:42.8px;top:181.8px;width:2.8px;height:27px;background:#4d4e52;"></i>
<i style="left:48.6px;top:181.8px;width:2.8px;height:27px;background:#4d4e52;"></i>
<i style="left:60.5px;top:190.8px;width:9.2px;height:9.2px;background:#e2e2e2;border-radius:50%"></i>
<svg class="u" style="left:81.5px;top:190.8px;width:16.5px;height:9.5px;color:#dcdcdc;"><use href="#kb"/></svg>
<b class="t f170" style="left:133.3px;top:186px;color:#e6e6e6;transform:scaleX(1.024);">Kt. Mono</b>
<b class="tr f170" style="left:37.02px;top:216px;color:#e6e6e6;">8</b>
<i style="left:42.8px;top:211.8px;width:2.8px;height:27px;background:#4d4e52;"></i>
<i style="left:48.6px;top:211.8px;width:2.8px;height:27px;background:#4d4e52;"></i>
<i style="left:60.5px;top:220.8px;width:9.2px;height:9.2px;background:#e2e2e2;border-radius:50%"></i>
<svg class="u" style="left:81.5px;top:220.8px;width:16.5px;height:9.5px;color:#dcdcdc;"><use href="#kb"/></svg>
<b class="t f170" style="left:133.3px;top:216px;color:#e6e6e6;transform:scaleX(1.003);">Kt. Rooms</b>
<b class="tr f170" style="left:37.02px;top:246px;color:#e6e6e6;">9</b>
<i style="left:42.8px;top:241.8px;width:2.8px;height:27px;background:#4d4e52;"></i>
<i style="left:48.6px;top:241.8px;width:2.8px;height:27px;background:#4d4e52;"></i>
<i style="left:60.5px;top:250.8px;width:9.2px;height:9.2px;background:#e2e2e2;border-radius:50%"></i>
<svg class="u" style="left:81.5px;top:250.8px;width:16.5px;height:9.5px;color:#dcdcdc;"><use href="#kb"/></svg>
<i style="left:102.6px;top:241px;width:9px;height:26.8px;background:#3c5068;"></i>
<b class="t f170" style="left:133.3px;top:246px;color:#e6e6e6;transform:scaleX(1.022);">Aggr..hots</b>
<b class="tr f170" style="left:37.04px;top:276px;color:#e6e6e6;">10</b>
<i style="left:42.8px;top:271.8px;width:2.8px;height:27px;background:#4d4e52;"></i>
<i style="left:48.6px;top:271.8px;width:2.8px;height:27px;background:#4d4e52;"></i>
<i style="left:60.5px;top:280.8px;width:9.2px;height:9.2px;background:#e2e2e2;border-radius:50%"></i>
<svg class="u" style="left:80.7px;top:280.8px;width:16px;height:9px;color:#dcdcdc;"><use href="#wv2"/></svg>
<i style="left:102.6px;top:271px;width:9px;height:26.8px;background:#00e08a;"></i>
<b class="t f170" style="left:133.3px;top:276px;color:#e6e6e6;transform:scaleX(0.994);">02 Bass</b>
<b class="t f170" style="left:220.1px;top:276px;color:#e6e6e6;transform:scaleX(0.976);">Polaris - ..</b>
<b class="tr f170" style="left:35.27px;top:306px;color:#e6e6e6;">11</b>
<i style="left:42.8px;top:301.8px;width:2.8px;height:27px;background:#4d4e52;"></i>
<i style="left:48.6px;top:301.8px;width:2.8px;height:27px;background:#4d4e52;"></i>
<i style="left:60.5px;top:310.8px;width:9.2px;height:9.2px;background:#e2e2e2;border-radius:50%"></i>
<svg class="u" style="left:80.7px;top:310.8px;width:16px;height:9px;color:#dcdcdc;"><use href="#wv2"/></svg>
<i style="left:102.6px;top:301px;width:9px;height:26.8px;background:#62d655;"></i>
<b class="t f170" style="left:133.3px;top:306px;color:#e6e6e6;transform:scaleX(0.990);">03Rh..tars</b>
<b class="t f170" style="left:220.1px;top:306px;color:#e6e6e6;transform:scaleX(0.976);">Polaris - ..</b>
<b class="tr f170" style="left:37.04px;top:336px;color:#e6e6e6;">12</b>
<i style="left:42.8px;top:331.8px;width:2.8px;height:27px;background:#4d4e52;"></i>
<i style="left:48.6px;top:331.8px;width:2.8px;height:27px;background:#4d4e52;"></i>
<i style="left:60.5px;top:340.8px;width:9.2px;height:9.2px;background:#e2e2e2;border-radius:50%"></i>
<svg class="u" style="left:80.7px;top:340.8px;width:16px;height:9px;color:#dcdcdc;"><use href="#wv2"/></svg>
<i style="left:102.6px;top:331px;width:9px;height:26.8px;background:#6ab23c;"></i>
<b class="t f170" style="left:133.3px;top:336px;color:#e6e6e6;">04LofiIntro</b>
<b class="t f170" style="left:220.1px;top:336px;color:#e6e6e6;transform:scaleX(0.976);">Polaris - ..</b>
<b class="tr f170" style="left:37.04px;top:366px;color:#e6e6e6;">13</b>
<i style="left:42.8px;top:361.8px;width:2.8px;height:27px;background:#4d4e52;"></i>
<i style="left:48.6px;top:361.8px;width:2.8px;height:27px;background:#4d4e52;"></i>
<i style="left:60.5px;top:370.8px;width:9.2px;height:9.2px;background:#e2e2e2;border-radius:50%"></i>
<svg class="u" style="left:80.7px;top:370.8px;width:16px;height:9px;color:#dcdcdc;"><use href="#wv2"/></svg>
<i style="left:102.6px;top:361px;width:9px;height:26.8px;background:#5fae63;"></i>
<b class="t f170" style="left:133.3px;top:366px;color:#e6e6e6;transform:scaleX(1.011);">05Br..Lead</b>
<b class="t f170" style="left:220.1px;top:366px;color:#e6e6e6;transform:scaleX(0.976);">Polaris - ..</b>
<b class="tr f170" style="left:37.04px;top:396px;color:#e6e6e6;">14</b>
<i style="left:42.8px;top:391.8px;width:2.8px;height:27px;background:#4d4e52;"></i>
<i style="left:48.6px;top:391.8px;width:2.8px;height:27px;background:#4d4e52;"></i>
<i style="left:60.5px;top:400.8px;width:9.2px;height:9.2px;background:#e2e2e2;border-radius:50%"></i>
<svg class="u" style="left:80.7px;top:400.8px;width:16px;height:9px;color:#dcdcdc;"><use href="#wv2"/></svg>
<i style="left:102.6px;top:391px;width:9px;height:26.8px;background:#8aa86e;"></i>
<b class="t f170" style="left:133.3px;top:396px;color:#e6e6e6;transform:scaleX(0.990);">06C..Lead</b>
<b class="t f170" style="left:220.1px;top:396px;color:#e6e6e6;transform:scaleX(0.976);">Polaris - ..</b>
<b class="tr f170" style="left:37.04px;top:426px;color:#e6e6e6;">15</b>
<i style="left:42.8px;top:421.8px;width:2.8px;height:27px;background:#4d4e52;"></i>
<i style="left:48.6px;top:421.8px;width:2.8px;height:27px;background:#4d4e52;"></i>
<i style="left:60.5px;top:430.8px;width:9.2px;height:9.2px;background:#e2e2e2;border-radius:50%"></i>
<svg class="u" style="left:80.7px;top:430.8px;width:16px;height:9px;color:#dcdcdc;"><use href="#wv2"/></svg>
<i style="left:102.6px;top:421px;width:9px;height:26.8px;background:#ffe100;"></i>
<b class="t f170" style="left:133.3px;top:426px;color:#e6e6e6;transform:scaleX(0.981);">07Fi..Lead</b>
<b class="t f170" style="left:220.1px;top:426px;color:#e6e6e6;transform:scaleX(0.976);">Polaris - ..</b>
<b class="tr f170" style="left:37.04px;top:456px;color:#e6e6e6;">16</b>
<i style="left:42.8px;top:451.8px;width:2.8px;height:27px;background:#4d4e52;"></i>
<i style="left:48.6px;top:451.8px;width:2.8px;height:27px;background:#4d4e52;"></i>
<i style="left:60.5px;top:460.8px;width:9.2px;height:9.2px;background:#e2e2e2;border-radius:50%"></i>
<svg class="u" style="left:80.7px;top:460.8px;width:16px;height:9px;color:#dcdcdc;"><use href="#wv2"/></svg>
<i style="left:102.6px;top:451px;width:9px;height:26.8px;background:#ffb030;"></i>
<b class="t f170" style="left:133.3px;top:456px;color:#e6e6e6;transform:scaleX(1.003);">08B..rums</b>
<b class="t f170" style="left:220.1px;top:456px;color:#e6e6e6;transform:scaleX(0.976);">Polaris - ..</b>
<b class="tr f170" style="left:37.04px;top:486px;color:#e6e6e6;">17</b>
<i style="left:42.8px;top:481.8px;width:2.8px;height:27px;background:#4d4e52;"></i>
<i style="left:48.6px;top:481.8px;width:2.8px;height:27px;background:#4d4e52;"></i>
<i style="left:60.5px;top:490.8px;width:9.2px;height:9.2px;background:#e2e2e2;border-radius:50%"></i>
<svg class="u" style="left:80.7px;top:490.8px;width:16px;height:9px;color:#dcdcdc;"><use href="#wv2"/></svg>
<i style="left:102.6px;top:481px;width:9px;height:26.8px;background:#ff5a30;"></i>
<b class="t f170" style="left:133.3px;top:486px;color:#e6e6e6;transform:scaleX(1.004);">09B..Drop</b>
<b class="t f170" style="left:220.1px;top:486px;color:#e6e6e6;transform:scaleX(0.976);">Polaris - ..</b>
<b class="tr f170" style="left:37.04px;top:516px;color:#e6e6e6;">18</b>
<i style="left:42.8px;top:511.8px;width:2.8px;height:27px;background:#4d4e52;"></i>
<i style="left:48.6px;top:511.8px;width:2.8px;height:27px;background:#4d4e52;"></i>
<i style="left:60.5px;top:520.8px;width:9.2px;height:9.2px;background:#e2e2e2;border-radius:50%"></i>
<b class="tc f125" style="left:89.49px;top:520px;color:#dcdcdc;font-weight:700;">FX</b>
<i style="left:102.6px;top:511px;width:9px;height:26.8px;background:#9b3f8e;"></i>
<b class="t f170" style="left:133.3px;top:516px;color:#e6e6e6;transform:scaleX(1.002);">Snar..verb</b>
<b class="tr f170" style="left:37.04px;top:546px;color:#e6e6e6;">19</b>
<i style="left:42.8px;top:541.8px;width:2.8px;height:27px;background:#4d4e52;"></i>
<i style="left:48.6px;top:541.8px;width:2.8px;height:27px;background:#4d4e52;"></i>
<i style="left:60.5px;top:550.8px;width:9.2px;height:9.2px;background:#e2e2e2;border-radius:50%"></i>
<svg class="u" style="left:83.5px;top:549.8px;width:13.5px;height:11.5px;color:#dcdcdc;"><use href="#bus"/></svg>
<i style="left:102.6px;top:541px;width:9px;height:26.8px;background:#e8e8e8;"></i>
<b class="t f170" style="left:133.3px;top:546px;color:#e6e6e6;transform:scaleX(0.984);">PRL..omp1</b>
<b class="tr f170" style="left:37.04px;top:576px;color:#e6e6e6;">20</b>
<i style="left:42.8px;top:571.8px;width:2.8px;height:27px;background:#4d4e52;"></i>
<i style="left:48.6px;top:571.8px;width:2.8px;height:27px;background:#4d4e52;"></i>
<i style="left:60.5px;top:580.8px;width:9.2px;height:9.2px;background:#e2e2e2;border-radius:50%"></i>
<svg class="u" style="left:83.5px;top:579.8px;width:13.5px;height:11.5px;color:#dcdcdc;"><use href="#bus"/></svg>
<b class="t f170" style="left:133.3px;top:576px;color:#e6e6e6;">Dru..roup</b>
</i>
<i style="left:384.5px;top:853px;width:2.5px;height:1167px;background:#0c0d0e;"></i>
<i style="left:387px;top:853px;width:177.7px;height:33.7px;background:#5c6066;"></i>
<b class="t f175" style="left:396px;top:860px;color:#f4f4f4;transform:scaleX(0.973);">Instruments</b>
<svg class="u" style="left:519px;top:865.5px;width:15px;height:9.5px;color:#e8e8e8;"><use href="#td"/></svg>
<svg class="u" style="left:543.5px;top:862.5px;width:14.5px;height:14.5px;color:#f4f4f4;"><use href="#pl"/></svg>
<i style="left:387px;top:889px;width:177.7px;height:30.3px;background:#2d2f35;"></i>
<svg class="u" style="left:395px;top:896px;width:15.4px;height:14.5px;color:#2f9ef0;"><use href="#pw"/></svg>
<b class="t f175" style="left:415.8px;top:893px;color:#ececec;transform:scaleX(0.986);">Kontakt</b>
<svg class="u" style="left:543.5px;top:901.5px;width:13.5px;height:8px;color:#8a8e94;"><use href="#td"/></svg>
<i style="left:387px;top:921.6px;width:177.7px;height:30.3px;background:#2d2f35;"></i>
<svg class="u" style="left:395px;top:928.6px;width:15.4px;height:14.5px;color:#2f9ef0;"><use href="#pw"/></svg>
<b class="t f175" style="left:415.8px;top:926px;color:#ececec;transform:scaleX(0.960);">Impact XT</b>
<svg class="u" style="left:543.5px;top:934.1px;width:13.5px;height:8px;color:#8a8e94;"><use href="#td"/></svg>
<i style="left:564.7px;top:853px;width:3.8px;height:1167px;background:#0c0d0e;"></i>
<i style="left:90.5px;top:1960.3px;width:41.3px;height:34.5px;background:#2e8cd0;"></i>
<i style="left:133px;top:1960.3px;width:42px;height:34.5px;background:#2e8cd0;"></i>
<i style="left:176.5px;top:1960.3px;width:40.3px;height:34.5px;background:#2e8cd0;"></i>
<i style="left:218.7px;top:1960.3px;width:39.1px;height:34.5px;background:#2e8cd0;"></i>
<i style="left:259.3px;top:1960.3px;width:40.4px;height:34.5px;background:#484c53;"></i>
<i style="left:301.2px;top:1960.3px;width:83.3px;height:34.5px;background:#484c53;"></i>
<svg class="u" style="left:100.5px;top:1970.5px;width:20px;height:14px;color:#fff;"><use href="#wv"/></svg>
<svg class="u" style="left:146px;top:1971.5px;width:16px;height:10.5px;color:#fff;"><use href="#kb"/></svg>
<b class="tc f160" style="left:196.48px;top:1970px;color:#fff;font-weight:700;transform:scaleX(0.950);">FX</b>
<svg class="u" style="left:230.5px;top:1970.5px;width:16.5px;height:14px;color:#fff;"><use href="#bus"/></svg>
<svg class="u" style="left:270px;top:1970.5px;width:18px;height:14px;" viewBox="0 0 18 14"><path d="M3.500 0v14M14 0v14" stroke="#7b7f85" stroke-width="1.200"/><rect x="1" y="5.500" width="5" height="5" fill="#7b7f85"/><rect x="11.500" y="2.500" width="5" height="5" fill="#7b7f85"/></svg>
<b class="tc f175" style="left:344.51px;top:1968px;color:#f0f0f0;transform:scaleX(0.970);">Remote</b>
<i style="left:301.2px;top:1996px;width:27.3px;height:23px;background:#484c53;"></i>
<i style="left:330px;top:1996px;width:26.6px;height:23px;background:#484c53;"></i>
<i style="left:358px;top:1996px;width:27px;height:23px;background:#484c53;"></i>
<svg class="u" style="left:281px;top:2005px;width:11px;height:7px;color:#b9bcc0;"><use href="#td"/></svg>
<svg class="u" style="left:309px;top:2000.5px;width:12px;height:14px;" viewBox="0 0 12 14"><path d="M2 6V4a4 4 0 0 1 8 0" fill="none" stroke="#62666c" stroke-width="1.800"/><rect x="0" y="6" width="12" height="8" fill="#62666c"/></svg>
<svg class="u" style="left:337px;top:2002px;width:12px;height:12px;color:#f4f4f4;"><use href="#pl"/></svg>
<i style="left:366px;top:2006.8px;width:11.5px;height:2.6px;background:#f4f4f4;"></i>
<svg class="u" style="left:579px;top:2001.5px;width:8.5px;height:12px;color:#a9abae;"><use href="#tl"/></svg>
<svg class="u" style="left:3689.5px;top:2001.5px;width:8.5px;height:12px;color:#8d9095;"><use href="#trr"/></svg>
<i style="left:566.5px;top:852.8px;width:2491.5px;height:1140.5px;background:#25272b;"></i>
<i style="left:568px;top:852.8px;width:121.3px;height:539.6px;background:#50555d;"></i>
<i style="left:568px;top:852.8px;width:121.3px;height:4.3px;background:#00b4c8;"></i>
<i style="left:568px;top:859.8px;width:121.3px;height:29.8px;background:#484c53;"></i>
<svg class="u" style="left:573px;top:867.5px;width:16.4px;height:15.4px;color:#2f9ef0;"><use href="#pw"/></svg>
<b class="t f175" style="left:594.8px;top:865px;color:#ececec;transform:scaleX(0.950);">Inserts</b>
<svg class="u" style="left:652.5px;top:870.8px;width:12px;height:7px;color:#8a8e94;"><use href="#td"/></svg>
<svg class="u" style="left:671.3px;top:867.8px;width:12.5px;height:12.5px;color:#8a8e94;"><use href="#pl"/></svg>
<i style="left:568px;top:890.3px;width:121.3px;height:29.3px;background:#5f646b;"></i>
<svg class="u" style="left:573.7px;top:899.1px;width:14.9px;height:14px;color:#74c8fb;"><use href="#pw"/></svg>
<svg class="u" style="left:669.8px;top:901.8px;width:12px;height:7px;color:#6f747b;"><use href="#td"/></svg>
<b class="t f155" style="left:592.8px;top:897px;color:#ececec;transform:scaleX(0.954);">Pro EQ</b>
<i style="left:566.5px;top:1392.4px;width:124.3px;height:2.8px;background:#1d1f22;"></i>
<i style="left:568px;top:1395.2px;width:121.3px;height:116.5px;background:#50555d;"></i>
<svg class="u" style="left:573px;top:1401.6px;width:16.4px;height:15.4px;color:#70747b;"><use href="#pw"/></svg>
<b class="t f175" style="left:594.5px;top:1400px;color:#ececec;transform:scaleX(0.949);">Sends</b>
<svg class="u" style="left:671.3px;top:1402.5px;width:12.5px;height:12.5px;color:#8a8e94;"><use href="#pl"/></svg>
<i style="left:566.5px;top:1511.7px;width:124.3px;height:3px;background:#1d1f22;"></i>
<i style="left:568px;top:1514.7px;width:121.3px;height:457px;background:#50555d;"></i>
<i style="left:568px;top:1515.3px;width:121.3px;height:3.5px;background:#00b4c8;"></i>
<i style="left:575.5px;top:1528px;width:108px;height:77.8px;background:#2a2d31;border-radius:3px;box-shadow:0 0 0 1.200px #3a3d43,0 1px 3px 1px rgba(0,0,0,.3)"></i>
<i style="left:575.5px;top:1528px;width:108px;height:26.2px;background:#595d63;border-radius:3px 3px 0 0"></i>
<i style="left:575.5px;top:1554.2px;width:108px;height:25.4px;background:#4c5056;"></i>
<b class="tc f165" style="left:629.01px;top:1533px;color:#f0c864;transform:scaleX(1.035);">Kontakt</b>
<b class="tc f165" style="left:629.01px;top:1558px;color:#f0c864;transform:scaleX(1.029);">Drum Group</b>
<i style="left:627.3px;top:1581px;width:4px;height:24px;background:#3fa0e6;"></i>
<i style="left:628.3px;top:1607px;width:1px;height:22px;background:#3f4349;"></i>
<b class="tc f165" style="left:601.79px;top:1612px;color:#f2f2f2;transform:scaleX(1.055);">0dB</b>
<b class="tc f165" style="left:656.3px;top:1612px;color:#f2f2f2;transform:scaleX(1.004);">&lt;C&gt;</b>
<i style="left:578.9px;top:1641px;width:101.8px;height:60.5px;background:#3f434a;border-radius:4.500px;box-shadow:0 0 0 1.500px #1e2024,0 2px 2px 1px rgba(0,0,0,.25);"></i>
<i style="left:578.9px;top:1670.3px;width:101.8px;height:1.3px;background:#2a2d31;"></i>
<i style="left:629.4px;top:1670.3px;width:1.3px;height:31px;background:#2a2d31;"></i>
<i style="left:597.2px;top:1679.8px;width:13.4px;height:13.4px;background:#c9cbce;border-radius:50%"></i>
<svg class="u" style="left:647.9px;top:1679px;width:13px;height:15px;color:#c9cbce;"><use href="#mono"/></svg>
<i style="left:629.2px;top:1641px;width:1.3px;height:29.5px;background:#2a2d31;"></i>
<b class="tc f195" style="left:603.88px;top:1644px;color:#dadada;transform:scaleX(0.950);">M</b>
<b class="tc f195" style="left:654.92px;top:1644px;color:#dadada;transform:scaleX(0.950);">S</b>
<i style="left:592.3px;top:1714px;width:19.7px;height:17px;background:#3a3d42;"></i>
<i style="left:592.3px;top:1731.5px;width:19.7px;height:173.3px;background:#22262b;"></i>
<b class="tr f115" style="left:588.83px;top:1732px;color:#cfd1d4;font-weight:700;transform:scaleX(0.950);">10</b>
<i style="left:595.6px;top:1737.2px;width:13.3px;height:1.3px;background:#1d4763;"></i>
<b class="tr f115" style="left:588.81px;top:1746px;color:#cfd1d4;font-weight:700;transform:scaleX(0.950);">6</b>
<i style="left:595.6px;top:1750.7px;width:13.3px;height:1.3px;background:#1d4763;"></i>
<b class="tr f115" style="left:588.81px;top:1769px;color:#cfd1d4;font-weight:700;transform:scaleX(0.950);">0</b>
<i style="left:595.6px;top:1774.2px;width:13.3px;height:1.3px;background:#7d8084;"></i>
<b class="tr f115" style="left:588.79px;top:1792px;color:#cfd1d4;font-weight:700;transform:scaleX(0.950);">-6</b>
<i style="left:595.6px;top:1797.2px;width:13.3px;height:1.3px;background:#1d4763;"></i>
<b class="tr f115" style="left:588.8px;top:1812px;color:#cfd1d4;font-weight:700;transform:scaleX(0.950);">-12</b>
<i style="left:595.6px;top:1817.2px;width:13.3px;height:1.3px;background:#1d4763;"></i>
<b class="tr f115" style="left:588.8px;top:1836px;color:#cfd1d4;font-weight:700;transform:scaleX(0.950);">-24</b>
<i style="left:595.6px;top:1841.2px;width:13.3px;height:1.3px;background:#1d4763;"></i>
<b class="tr f115" style="left:588.8px;top:1860px;color:#cfd1d4;font-weight:700;transform:scaleX(0.950);">-36</b>
<i style="left:595.6px;top:1865.2px;width:13.3px;height:1.3px;background:#1d4763;"></i>
<b class="tr f115" style="left:588.8px;top:1875px;color:#cfd1d4;font-weight:700;transform:scaleX(0.950);">-48</b>
<i style="left:595.6px;top:1880.2px;width:13.3px;height:1.3px;background:#1d4763;"></i>
<i style="left:595.6px;top:1892.2px;width:13.3px;height:1.3px;background:#1d4763;"></i>
<i style="left:595.3px;top:1896.8px;width:6.2px;height:6.3px;background:;background:repeating-linear-gradient(180deg,#58b0e8 0,#58b0e8 1.500px,#2f6f9c 1.500px,#2f6f9c 2.300px)"></i>
<i style="left:603px;top:1896.8px;width:6.2px;height:6.3px;background:;background:repeating-linear-gradient(180deg,#58b0e8 0,#58b0e8 1.500px,#2f6f9c 1.500px,#2f6f9c 2.300px)"></i>
<i style="left:657.2px;top:1714px;width:16px;height:5px;background:#6ec3f4;"></i>
<i style="left:657.2px;top:1720px;width:16px;height:5px;background:#5d6168;"></i>
<i style="left:657.2px;top:1726px;width:16px;height:5px;background:#5d6168;"></i>
<i style="left:618px;top:1797.5px;width:21px;height:107.3px;background:#6e747b;"></i>
<i style="left:619.1px;top:1809px;width:18px;height:1.2px;background:#8d9399;"></i>
<i style="left:619.1px;top:1827.2px;width:18px;height:1.2px;background:#8d9399;"></i>
<i style="left:619.1px;top:1846.6px;width:18px;height:1.2px;background:#8d9399;"></i>
<i style="left:619.1px;top:1858.4px;width:18px;height:1.2px;background:#8d9399;"></i>
<i style="left:619.1px;top:1869px;width:18px;height:1.2px;background:#8d9399;"></i>
<i style="left:627.1px;top:1738.5px;width:2.8px;height:141px;background:#1c1e21;"></i>
<i style="left:616.8px;top:1748.8px;width:24.3px;height:52.6px;background:;background:linear-gradient(180deg,#fafafa 0,#f0f0f0 6%,#8c8c8c 9%,#a9a9a9 14%,#d6d6d6 24%,#fff 36%,#fff 48.500%,#2a2a2a 48.500%,#2a2a2a 51.500%,#fff 51.500%,#fff 86%,#d4d4d4 93%,#8a8a8a 100%);border-radius:4.500px;box-shadow:inset 2.500px 0 2px rgba(0,0,0,.32),inset -2.500px 0 2px rgba(0,0,0,.32),0 0 0 1.300px #34373c,0 2px 3px 1px rgba(0,0,0,.35)"></i>
<svg class="u" style="left:655.2px;top:1874.8px;width:20px;height:20px;"><use href="#knob"/></svg>
<b class="tc f160" style="left:591.31px;top:1915px;color:#f0f0f0;font-weight:700;transform:scaleX(0.970);">1</b>
<svg class="u" style="left:652.2px;top:1915px;width:26px;height:16px;color:#bcbfc3;"><use href="#kb"/></svg>
<i style="left:576px;top:1940px;width:106.5px;height:22.6px;background:#26282c;border-radius:1.500px"></i>
<b class="tc f150" style="left:628.99px;top:1942px;color:#8b8e94;transform:scaleX(1.043);">Auto: Off</b>
<i style="left:568px;top:1972px;width:121.3px;height:21.3px;background:#00b4c8;"></i>
<b class="tc f170" style="left:628.99px;top:1974px;color:#fff;">Kt.OneKit..der-</b>
<i style="left:692.55px;top:852.8px;width:121.3px;height:539.6px;background:#50555d;"></i>
<i style="left:692.55px;top:852.8px;width:121.3px;height:4.3px;background:#5d6269;"></i>
<i style="left:692.55px;top:859.8px;width:121.3px;height:29.8px;background:#484c53;"></i>
<svg class="u" style="left:697.55px;top:867.5px;width:16.4px;height:15.4px;color:#2f9ef0;"><use href="#pw"/></svg>
<b class="t f175" style="left:719.35px;top:865px;color:#ececec;transform:scaleX(0.950);">Inserts</b>
<svg class="u" style="left:777.05px;top:870.8px;width:12px;height:7px;color:#8a8e94;"><use href="#td"/></svg>
<svg class="u" style="left:795.85px;top:867.8px;width:12.5px;height:12.5px;color:#8a8e94;"><use href="#pl"/></svg>
<i style="left:692.55px;top:890.3px;width:121.3px;height:29.3px;background:#5f646b;"></i>
<svg class="u" style="left:698.25px;top:899.1px;width:14.9px;height:14px;color:#74c8fb;"><use href="#pw"/></svg>
<svg class="u" style="left:794.35px;top:901.8px;width:12px;height:7px;color:#6f747b;"><use href="#td"/></svg>
<b class="t f155" style="left:717.35px;top:897px;color:#ececec;transform:scaleX(0.954);">Pro EQ</b>
<i style="left:692.55px;top:922.2px;width:121.3px;height:29.3px;background:#5f646b;"></i>
<svg class="u" style="left:698.25px;top:931px;width:14.9px;height:14px;color:#74c8fb;"><use href="#pw"/></svg>
<svg class="u" style="left:794.35px;top:933.7px;width:12px;height:7px;color:#6f747b;"><use href="#td"/></svg>
<b class="t f155" style="left:717.35px;top:929px;color:#ececec;transform:scaleX(0.995);">Compressor</b>
<i style="left:691.05px;top:1392.4px;width:124.3px;height:2.8px;background:#1d1f22;"></i>
<i style="left:692.55px;top:1395.2px;width:121.3px;height:116.5px;background:#50555d;"></i>
<svg class="u" style="left:697.55px;top:1401.6px;width:16.4px;height:15.4px;color:#2f9ef0;"><use href="#pw"/></svg>
<b class="t f175" style="left:719.05px;top:1400px;color:#ececec;transform:scaleX(0.949);">Sends</b>
<svg class="u" style="left:795.85px;top:1402.5px;width:12.5px;height:12.5px;color:#8a8e94;"><use href="#pl"/></svg>
<i style="left:692.55px;top:1425.5px;width:121.3px;height:29.5px;background:#5f646b;"></i>
<svg class="u" style="left:698.25px;top:1434.3px;width:14.9px;height:14px;color:#74c8fb;"><use href="#pw"/></svg>
<svg class="u" style="left:794.35px;top:1437px;width:12px;height:7px;color:#6f747b;"><use href="#td"/></svg>
<b class="t f155" style="left:717.35px;top:1432px;color:#ececec;transform:scaleX(0.966);">PRLComp1</b>
<i style="left:692.55px;top:1456px;width:121.3px;height:20px;background:#383b40;"></i>
<i style="left:692.55px;top:1464px;width:100px;height:4px;background:#45484d;"></i>
<i style="left:692.55px;top:1464px;width:68px;height:4px;background:#3fa0e6;"></i>
<svg class="u" style="left:796.85px;top:1459px;width:15px;height:14px;" viewBox="0 0 15 14"><path d="M3.500 0v14" stroke="#d8d8d8" stroke-width="1.200"/><rect x="1" y="2.500" width="5" height="7" fill="#e6e6e6"/><rect x="9.500" y="4.500" width="4.500" height="4.500" fill="#e6e6e6"/></svg>
<i style="left:692.55px;top:1476px;width:121.3px;height:12px;background:#3d4045;"></i>
<i style="left:692.55px;top:1476px;width:121.3px;height:1.2px;background:#33363a;"></i>
<i style="left:692.55px;top:1482px;width:121.3px;height:1px;background:#33363a;"></i>
<i style="left:753.2px;top:1481.7px;width:1.2px;height:1.2px;background:#b0b0b0;"></i>
<i style="left:691.05px;top:1511.7px;width:124.3px;height:3px;background:#1d1f22;"></i>
<i style="left:692.55px;top:1514.7px;width:121.3px;height:457px;background:#50555d;"></i>
<i style="left:692.55px;top:1515.3px;width:121.3px;height:3.5px;background:#5d6269;"></i>
<i style="left:700.05px;top:1528px;width:108px;height:77.8px;background:#2a2d31;border-radius:3px;box-shadow:0 0 0 1.200px #3a3d43,0 1px 3px 1px rgba(0,0,0,.3)"></i>
<i style="left:700.05px;top:1528px;width:108px;height:26.2px;background:#595d63;border-radius:3px 3px 0 0"></i>
<i style="left:700.05px;top:1554.2px;width:108px;height:25.4px;background:#4c5056;"></i>
<b class="tc f165" style="left:753.56px;top:1533px;color:#f0c864;transform:scaleX(1.035);">Kontakt</b>
<b class="tc f165" style="left:753.56px;top:1558px;color:#f0c864;transform:scaleX(1.029);">Drum Group</b>
<i style="left:751.85px;top:1581px;width:4px;height:24px;background:#3fa0e6;"></i>
<i style="left:752.85px;top:1607px;width:1px;height:22px;background:#3f4349;"></i>
<b class="tc f165" style="left:726.34px;top:1612px;color:#f2f2f2;transform:scaleX(1.055);">0dB</b>
<b class="tc f165" style="left:780.85px;top:1612px;color:#f2f2f2;transform:scaleX(1.004);">&lt;C&gt;</b>
<i style="left:703.45px;top:1641px;width:101.8px;height:60.5px;background:#3f434a;border-radius:4.500px;box-shadow:0 0 0 1.500px #1e2024,0 2px 2px 1px rgba(0,0,0,.25);"></i>
<i style="left:703.45px;top:1670.3px;width:101.8px;height:1.3px;background:#2a2d31;"></i>
<i style="left:753.95px;top:1670.3px;width:1.3px;height:31px;background:#2a2d31;"></i>
<i style="left:721.75px;top:1679.8px;width:13.4px;height:13.4px;background:#2c2f34;border-radius:50%"></i>
<svg class="u" style="left:772.45px;top:1679px;width:13px;height:15px;color:#2c2f34;"><use href="#mono"/></svg>
<i style="left:753.75px;top:1641px;width:1.3px;height:29.5px;background:#2a2d31;"></i>
<b class="tc f195" style="left:728.43px;top:1644px;color:#dadada;transform:scaleX(0.950);">M</b>
<b class="tc f195" style="left:779.47px;top:1644px;color:#dadada;transform:scaleX(0.950);">S</b>
<i style="left:716.85px;top:1714px;width:19.7px;height:17px;background:#3a3d42;"></i>
<i style="left:716.85px;top:1731.5px;width:19.7px;height:173.3px;background:#22262b;"></i>
<b class="tr f115" style="left:713.38px;top:1732px;color:#cfd1d4;font-weight:700;transform:scaleX(0.950);">10</b>
<i style="left:720.15px;top:1737.2px;width:13.3px;height:1.3px;background:#1d4763;"></i>
<b class="tr f115" style="left:713.36px;top:1746px;color:#cfd1d4;font-weight:700;transform:scaleX(0.950);">6</b>
<i style="left:720.15px;top:1750.7px;width:13.3px;height:1.3px;background:#1d4763;"></i>
<b class="tr f115" style="left:713.36px;top:1769px;color:#cfd1d4;font-weight:700;transform:scaleX(0.950);">0</b>
<i style="left:720.15px;top:1774.2px;width:13.3px;height:1.3px;background:#7d8084;"></i>
<b class="tr f115" style="left:713.34px;top:1792px;color:#cfd1d4;font-weight:700;transform:scaleX(0.950);">-6</b>
<i style="left:720.15px;top:1797.2px;width:13.3px;height:1.3px;background:#1d4763;"></i>
<b class="tr f115" style="left:713.35px;top:1812px;color:#cfd1d4;font-weight:700;transform:scaleX(0.950);">-12</b>
<i style="left:720.15px;top:1817.2px;width:13.3px;height:1.3px;background:#1d4763;"></i>
<b class="tr f115" style="left:713.35px;top:1836px;color:#cfd1d4;font-weight:700;transform:scaleX(0.950);">-24</b>
<i style="left:720.15px;top:1841.2px;width:13.3px;height:1.3px;background:#1d4763;"></i>
<b class="tr f115" style="left:713.35px;top:1860px;color:#cfd1d4;font-weight:700;transform:scaleX(0.950);">-36</b>
<i style="left:720.15px;top:1865.2px;width:13.3px;height:1.3px;background:#1d4763;"></i>
<b class="tr f115" style="left:713.35px;top:1875px;color:#cfd1d4;font-weight:700;transform:scaleX(0.950);">-48</b>
<i style="left:720.15px;top:1880.2px;width:13.3px;height:1.3px;background:#1d4763;"></i>
<i style="left:720.15px;top:1892.2px;width:13.3px;height:1.3px;background:#1d4763;"></i>
<i style="left:781.75px;top:1714px;width:16px;height:5px;background:#6ec3f4;"></i>
<i style="left:781.75px;top:1720px;width:16px;height:5px;background:#6ec3f4;"></i>
<i style="left:781.75px;top:1726px;width:16px;height:5px;background:#5d6168;"></i>
<i style="left:742.55px;top:1797.5px;width:21px;height:107.3px;background:#6e747b;"></i>
<i style="left:743.65px;top:1809px;width:18px;height:1.2px;background:#8d9399;"></i>
<i style="left:743.65px;top:1827.2px;width:18px;height:1.2px;background:#8d9399;"></i>
<i style="left:743.65px;top:1846.6px;width:18px;height:1.2px;background:#8d9399;"></i>
<i style="left:743.65px;top:1858.4px;width:18px;height:1.2px;background:#8d9399;"></i>
<i style="left:743.65px;top:1869px;width:18px;height:1.2px;background:#8d9399;"></i>
<i style="left:751.65px;top:1738.5px;width:2.8px;height:141px;background:#1c1e21;"></i>
<i style="left:741.35px;top:1748.8px;width:24.3px;height:52.6px;background:;background:linear-gradient(180deg,#fafafa 0,#f0f0f0 6%,#8c8c8c 9%,#a9a9a9 14%,#d6d6d6 24%,#fff 36%,#fff 48.500%,#2a2a2a 48.500%,#2a2a2a 51.500%,#fff 51.500%,#fff 86%,#d4d4d4 93%,#8a8a8a 100%);border-radius:4.500px;box-shadow:inset 2.500px 0 2px rgba(0,0,0,.32),inset -2.500px 0 2px rgba(0,0,0,.32),0 0 0 1.300px #34373c,0 2px 3px 1px rgba(0,0,0,.35)"></i>
<svg class="u" style="left:779.75px;top:1874.8px;width:20px;height:20px;"><use href="#knob"/></svg>
<b class="tc f160" style="left:715.86px;top:1915px;color:#f0f0f0;font-weight:700;transform:scaleX(0.970);">2</b>
<svg class="u" style="left:776.75px;top:1915px;width:26px;height:16px;color:#bcbfc3;"><use href="#kb"/></svg>
<i style="left:700.55px;top:1940px;width:106.5px;height:22.6px;background:#26282c;border-radius:1.500px"></i>
<b class="tc f150" style="left:753.54px;top:1942px;color:#8b8e94;transform:scaleX(1.043);">Auto: Off</b>
<i style="left:692.55px;top:1972px;width:121.3px;height:21.3px;background:#2d3035;"></i>
<b class="tc f170" style="left:753.5px;top:1974px;color:#fff;transform:scaleX(1.012);">Kt. Kick</b>
<i style="left:817.1px;top:852.8px;width:121.3px;height:539.6px;background:#50555d;"></i>
<i style="left:817.1px;top:852.8px;width:121.3px;height:4.3px;background:#5d6269;"></i>
<i style="left:817.1px;top:859.8px;width:121.3px;height:29.8px;background:#484c53;"></i>
<svg class="u" style="left:822.1px;top:867.5px;width:16.4px;height:15.4px;color:#2f9ef0;"><use href="#pw"/></svg>
<b class="t f175" style="left:843.9px;top:865px;color:#ececec;transform:scaleX(0.950);">Inserts</b>
<svg class="u" style="left:901.6px;top:870.8px;width:12px;height:7px;color:#8a8e94;"><use href="#td"/></svg>
<svg class="u" style="left:920.4px;top:867.8px;width:12.5px;height:12.5px;color:#8a8e94;"><use href="#pl"/></svg>
<i style="left:817.1px;top:890.3px;width:121.3px;height:29.3px;background:#5f646b;"></i>
<svg class="u" style="left:822.8px;top:899.1px;width:14.9px;height:14px;color:#74c8fb;"><use href="#pw"/></svg>
<svg class="u" style="left:918.9px;top:901.8px;width:12px;height:7px;color:#6f747b;"><use href="#td"/></svg>
<b class="t f155" style="left:841.9px;top:897px;color:#ececec;transform:scaleX(0.954);">Pro EQ</b>
<i style="left:817.1px;top:922.2px;width:121.3px;height:29.3px;background:#5f646b;"></i>
<svg class="u" style="left:822.8px;top:931px;width:14.9px;height:14px;color:#74c8fb;"><use href="#pw"/></svg>
<svg class="u" style="left:918.9px;top:933.7px;width:12px;height:7px;color:#6f747b;"><use href="#td"/></svg>
<b class="t f155" style="left:841.9px;top:929px;color:#ececec;transform:scaleX(0.995);">Compressor</b>
<i style="left:815.6px;top:1392.4px;width:124.3px;height:2.8px;background:#1d1f22;"></i>
<i style="left:817.1px;top:1395.2px;width:121.3px;height:116.5px;background:#50555d;"></i>
<svg class="u" style="left:822.1px;top:1401.6px;width:16.4px;height:15.4px;color:#2f9ef0;"><use href="#pw"/></svg>
<b class="t f175" style="left:843.6px;top:1400px;color:#ececec;transform:scaleX(0.949);">Sends</b>
<svg class="u" style="left:920.4px;top:1402.5px;width:12.5px;height:12.5px;color:#8a8e94;"><use href="#pl"/></svg>
<i style="left:817.1px;top:1425.5px;width:111.8px;height:29.5px;background:#5f646b;"></i>
<svg class="u" style="left:822.8px;top:1434.3px;width:14.9px;height:14px;color:#74c8fb;"><use href="#pw"/></svg>
<svg class="u" style="left:909.4px;top:1437px;width:12px;height:7px;color:#6f747b;"><use href="#td"/></svg>
<b class="t f155" style="left:841.9px;top:1432px;color:#ececec;transform:scaleX(0.966);">PRLComp1</b>
<i style="left:817.1px;top:1456px;width:111.8px;height:20px;background:#383b40;"></i>
<i style="left:817.1px;top:1464px;width:100px;height:4px;background:#45484d;"></i>
<i style="left:817.1px;top:1464px;width:68px;height:4px;background:#3fa0e6;"></i>
<svg class="u" style="left:911.9px;top:1459px;width:15px;height:14px;" viewBox="0 0 15 14"><path d="M3.500 0v14" stroke="#d8d8d8" stroke-width="1.200"/><rect x="1" y="2.500" width="5" height="7" fill="#e6e6e6"/><rect x="9.500" y="4.500" width="4.500" height="4.500" fill="#e6e6e6"/></svg>
<i style="left:817.1px;top:1476px;width:111.8px;height:12px;background:#3d4045;"></i>
<i style="left:817.1px;top:1476px;width:111.8px;height:1.2px;background:#33363a;"></i>
<i style="left:817.1px;top:1482px;width:111.8px;height:1px;background:#33363a;"></i>
<i style="left:873px;top:1481.7px;width:1.2px;height:1.2px;background:#b0b0b0;"></i>
<i style="left:928.9px;top:1425.5px;width:9.5px;height:86.2px;background:#2d3034;"></i>
<i style="left:932.9px;top:1425.5px;width:5.5px;height:57px;background:#6a6f77;"></i>
<i style="left:817.1px;top:1489px;width:111.8px;height:22.700px;overflow:hidden">
<i style="left:0px;top:0px;width:111.8px;height:29.3px;background:#5f646b;"></i>
<svg class="u" style="left:5.7px;top:8.8px;width:14.9px;height:14px;color:#74c8fb;"><use href="#pw"/></svg>
<svg class="u" style="left:92.3px;top:11.5px;width:12px;height:7px;color:#6f747b;"><use href="#td"/></svg>
<b class="t f155" style="left:24.8px;top:7px;color:#ececec;transform:scaleX(0.973);">Snare..verb</b>
</i>
<i style="left:815.6px;top:1511.7px;width:124.3px;height:3px;background:#1d1f22;"></i>
<i style="left:817.1px;top:1514.7px;width:121.3px;height:457px;background:#50555d;"></i>
<i style="left:817.1px;top:1515.3px;width:121.3px;height:3.5px;background:#5d6269;"></i>
<i style="left:824.6px;top:1528px;width:108px;height:77.8px;background:#2a2d31;border-radius:3px;box-shadow:0 0 0 1.200px #3a3d43,0 1px 3px 1px rgba(0,0,0,.3)"></i>
<i style="left:824.6px;top:1528px;width:108px;height:26.2px;background:#595d63;border-radius:3px 3px 0 0"></i>
<i style="left:824.6px;top:1554.2px;width:108px;height:25.4px;background:#4c5056;"></i>
<b class="tc f165" style="left:878.11px;top:1533px;color:#f0c864;transform:scaleX(1.035);">Kontakt</b>
<b class="tc f165" style="left:878.11px;top:1558px;color:#f0c864;transform:scaleX(1.029);">Drum Group</b>
<i style="left:876.4px;top:1581px;width:4px;height:24px;background:#3fa0e6;"></i>
<i style="left:877.4px;top:1607px;width:1px;height:22px;background:#3f4349;"></i>
<b class="tc f165" style="left:850.89px;top:1612px;color:#f2f2f2;transform:scaleX(1.055);">0dB</b>
<b class="tc f165" style="left:905.4px;top:1612px;color:#f2f2f2;transform:scaleX(1.004);">&lt;C&gt;</b>
<i style="left:828px;top:1641px;width:101.8px;height:60.5px;background:#3f434a;border-radius:4.500px;box-shadow:0 0 0 1.500px #1e2024,0 2px 2px 1px rgba(0,0,0,.25);"></i>
<i style="left:828px;top:1670.3px;width:101.8px;height:1.3px;background:#2a2d31;"></i>
<i style="left:878.5px;top:1670.3px;width:1.3px;height:31px;background:#2a2d31;"></i>
<i style="left:846.3px;top:1679.8px;width:13.4px;height:13.4px;background:#2c2f34;border-radius:50%"></i>
<svg class="u" style="left:897px;top:1679px;width:13px;height:15px;color:#2c2f34;"><use href="#mono"/></svg>
<i style="left:878.3px;top:1641px;width:1.3px;height:29.5px;background:#2a2d31;"></i>
<b class="tc f195" style="left:852.98px;top:1644px;color:#dadada;transform:scaleX(0.950);">M</b>
<b class="tc f195" style="left:904.02px;top:1644px;color:#dadada;transform:scaleX(0.950);">S</b>
<i style="left:841.4px;top:1714px;width:19.7px;height:17px;background:#3a3d42;"></i>
<i style="left:841.4px;top:1731.5px;width:19.7px;height:173.3px;background:#22262b;"></i>
<b class="tr f115" style="left:837.93px;top:1732px;color:#cfd1d4;font-weight:700;transform:scaleX(0.950);">10</b>
<i style="left:844.7px;top:1737.2px;width:13.3px;height:1.3px;background:#1d4763;"></i>
<b class="tr f115" style="left:837.91px;top:1746px;color:#cfd1d4;font-weight:700;transform:scaleX(0.950);">6</b>
<i style="left:844.7px;top:1750.7px;width:13.3px;height:1.3px;background:#1d4763;"></i>
<b class="tr f115" style="left:837.91px;top:1769px;color:#cfd1d4;font-weight:700;transform:scaleX(0.950);">0</b>
<i style="left:844.7px;top:1774.2px;width:13.3px;height:1.3px;background:#7d8084;"></i>
<b class="tr f115" style="left:837.89px;top:1792px;color:#cfd1d4;font-weight:700;transform:scaleX(0.950);">-6</b>
<i style="left:844.7px;top:1797.2px;width:13.3px;height:1.3px;background:#1d4763;"></i>
<b class="tr f115" style="left:837.9px;top:1812px;color:#cfd1d4;font-weight:700;transform:scaleX(0.950);">-12</b>
<i style="left:844.7px;top:1817.2px;width:13.3px;height:1.3px;background:#1d4763;"></i>
<b class="tr f115" style="left:837.9px;top:1836px;color:#cfd1d4;font-weight:700;transform:scaleX(0.950);">-24</b>
<i style="left:844.7px;top:1841.2px;width:13.3px;height:1.3px;background:#1d4763;"></i>
<b class="tr f115" style="left:837.9px;top:1860px;color:#cfd1d4;font-weight:700;transform:scaleX(0.950);">-36</b>
<i style="left:844.7px;top:1865.2px;width:13.3px;height:1.3px;background:#1d4763;"></i>
<b class="tr f115" style="left:837.9px;top:1875px;color:#cfd1d4;font-weight:700;transform:scaleX(0.950);">-48</b>
<i style="left:844.7px;top:1880.2px;width:13.3px;height:1.3px;background:#1d4763;"></i>
<i style="left:844.7px;top:1892.2px;width:13.3px;height:1.3px;background:#1d4763;"></i>
<i style="left:906.3px;top:1714px;width:16px;height:5px;background:#6ec3f4;"></i>
<i style="left:906.3px;top:1720px;width:16px;height:5px;background:#6ec3f4;"></i>
<i style="left:906.3px;top:1726px;width:16px;height:5px;background:#5d6168;"></i>
<i style="left:867.1px;top:1797.5px;width:21px;height:107.3px;background:#6e747b;"></i>
<i style="left:868.2px;top:1809px;width:18px;height:1.2px;background:#8d9399;"></i>
<i style="left:868.2px;top:1827.2px;width:18px;height:1.2px;background:#8d9399;"></i>
<i style="left:868.2px;top:1846.6px;width:18px;height:1.2px;background:#8d9399;"></i>
<i style="left:868.2px;top:1858.4px;width:18px;height:1.2px;background:#8d9399;"></i>
<i style="left:868.2px;top:1869px;width:18px;height:1.2px;background:#8d9399;"></i>
<i style="left:876.2px;top:1738.5px;width:2.8px;height:141px;background:#1c1e21;"></i>
<i style="left:865.9px;top:1748.8px;width:24.3px;height:52.6px;background:;background:linear-gradient(180deg,#fafafa 0,#f0f0f0 6%,#8c8c8c 9%,#a9a9a9 14%,#d6d6d6 24%,#fff 36%,#fff 48.500%,#2a2a2a 48.500%,#2a2a2a 51.500%,#fff 51.500%,#fff 86%,#d4d4d4 93%,#8a8a8a 100%);border-radius:4.500px;box-shadow:inset 2.500px 0 2px rgba(0,0,0,.32),inset -2.500px 0 2px rgba(0,0,0,.32),0 0 0 1.300px #34373c,0 2px 3px 1px rgba(0,0,0,.35)"></i>
<svg class="u" style="left:904.3px;top:1874.8px;width:20px;height:20px;"><use href="#knob"/></svg>
<b class="tc f160" style="left:840.41px;top:1915px;color:#f0f0f0;font-weight:700;transform:scaleX(0.970);">3</b>
<svg class="u" style="left:901.3px;top:1915px;width:26px;height:16px;color:#bcbfc3;"><use href="#kb"/></svg>
<i style="left:825.1px;top:1940px;width:106.5px;height:22.6px;background:#26282c;border-radius:1.500px"></i>
<b class="tc f150" style="left:878.09px;top:1942px;color:#8b8e94;transform:scaleX(1.043);">Auto: Off</b>
<i style="left:817.1px;top:1972px;width:121.3px;height:21.3px;background:#2d3035;"></i>
<b class="tc f170" style="left:878.09px;top:1974px;color:#fff;transform:scaleX(0.980);">Kt. Snare</b>
<i style="left:941.65px;top:852.8px;width:121.3px;height:539.6px;background:#50555d;"></i>
<i style="left:941.65px;top:852.8px;width:121.3px;height:4.3px;background:#5d6269;"></i>
<i style="left:941.65px;top:859.8px;width:121.3px;height:29.8px;background:#484c53;"></i>
<svg class="u" style="left:946.65px;top:867.5px;width:16.4px;height:15.4px;color:#2f9ef0;"><use href="#pw"/></svg>
<b class="t f175" style="left:968.45px;top:865px;color:#ececec;transform:scaleX(0.950);">Inserts</b>
<svg class="u" style="left:1026.15px;top:870.8px;width:12px;height:7px;color:#8a8e94;"><use href="#td"/></svg>
<svg class="u" style="left:1044.95px;top:867.8px;width:12.5px;height:12.5px;color:#8a8e94;"><use href="#pl"/></svg>
<i style="left:941.65px;top:890.3px;width:121.3px;height:29.3px;background:#5f646b;"></i>
<svg class="u" style="left:947.35px;top:899.1px;width:14.9px;height:14px;color:#74c8fb;"><use href="#pw"/></svg>
<svg class="u" style="left:1043.45px;top:901.8px;width:12px;height:7px;color:#6f747b;"><use href="#td"/></svg>
<b class="t f155" style="left:966.45px;top:897px;color:#ececec;transform:scaleX(0.954);">Pro EQ</b>
<i style="left:941.65px;top:922.2px;width:121.3px;height:29.3px;background:#5f646b;"></i>
<svg class="u" style="left:947.35px;top:931px;width:14.9px;height:14px;color:#74c8fb;"><use href="#pw"/></svg>
<svg class="u" style="left:1043.45px;top:933.7px;width:12px;height:7px;color:#6f747b;"><use href="#td"/></svg>
<b class="t f155" style="left:966.45px;top:929px;color:#ececec;transform:scaleX(0.995);">Compressor</b>
<i style="left:940.15px;top:1392.4px;width:124.3px;height:2.8px;background:#1d1f22;"></i>
<i style="left:941.65px;top:1395.2px;width:121.3px;height:116.5px;background:#50555d;"></i>
<svg class="u" style="left:946.65px;top:1401.6px;width:16.4px;height:15.4px;color:#2f9ef0;"><use href="#pw"/></svg>
<b class="t f175" style="left:968.15px;top:1400px;color:#ececec;transform:scaleX(0.949);">Sends</b>
<svg class="u" style="left:1044.95px;top:1402.5px;width:12.5px;height:12.5px;color:#8a8e94;"><use href="#pl"/></svg>
<i style="left:941.65px;top:1425.5px;width:121.3px;height:29.5px;background:#5f646b;"></i>
<svg class="u" style="left:947.35px;top:1434.3px;width:14.9px;height:14px;color:#74c8fb;"><use href="#pw"/></svg>
<svg class="u" style="left:1043.45px;top:1437px;width:12px;height:7px;color:#6f747b;"><use href="#td"/></svg>
<b class="t f155" style="left:966.45px;top:1432px;color:#ececec;transform:scaleX(0.966);">PRLComp1</b>
<i style="left:941.65px;top:1456px;width:121.3px;height:20px;background:#383b40;"></i>
<i style="left:941.65px;top:1464px;width:100px;height:4px;background:#45484d;"></i>
<i style="left:941.65px;top:1464px;width:68px;height:4px;background:#3fa0e6;"></i>
<svg class="u" style="left:1045.95px;top:1459px;width:15px;height:14px;" viewBox="0 0 15 14"><path d="M3.500 0v14" stroke="#d8d8d8" stroke-width="1.200"/><rect x="1" y="2.500" width="5" height="7" fill="#e6e6e6"/><rect x="9.500" y="4.500" width="4.500" height="4.500" fill="#e6e6e6"/></svg>
<i style="left:941.65px;top:1476px;width:121.3px;height:12px;background:#3d4045;"></i>
<i style="left:941.65px;top:1476px;width:121.3px;height:1.2px;background:#33363a;"></i>
<i style="left:941.65px;top:1482px;width:121.3px;height:1px;background:#33363a;"></i>
<i style="left:1002.3px;top:1481.7px;width:1.2px;height:1.2px;background:#b0b0b0;"></i>
<i style="left:940.15px;top:1511.7px;width:124.3px;height:3px;background:#1d1f22;"></i>
<i style="left:941.65px;top:1514.7px;width:121.3px;height:457px;background:#50555d;"></i>
<i style="left:941.65px;top:1515.3px;width:121.3px;height:3.5px;background:#5d6269;"></i>
<i style="left:949.15px;top:1528px;width:108px;height:77.8px;background:#2a2d31;border-radius:3px;box-shadow:0 0 0 1.200px #3a3d43,0 1px 3px 1px rgba(0,0,0,.3)"></i>
<i style="left:949.15px;top:1528px;width:108px;height:26.2px;background:#595d63;border-radius:3px 3px 0 0"></i>
<i style="left:949.15px;top:1554.2px;width:108px;height:25.4px;background:#4c5056;"></i>
<b class="tc f165" style="left:1002.66px;top:1533px;color:#f0c864;transform:scaleX(1.035);">Kontakt</b>
<b class="tc f165" style="left:1002.66px;top:1558px;color:#f0c864;transform:scaleX(1.029);">Drum Group</b>
<i style="left:1000.95px;top:1581px;width:4px;height:24px;background:#3fa0e6;"></i>
<i style="left:1001.95px;top:1607px;width:1px;height:22px;background:#3f4349;"></i>
<b class="tc f165" style="left:975.44px;top:1612px;color:#f2f2f2;transform:scaleX(1.055);">0dB</b>
<b class="tc f165" style="left:1029.95px;top:1612px;color:#f2f2f2;transform:scaleX(1.004);">&lt;C&gt;</b>
<i style="left:952.55px;top:1641px;width:101.8px;height:60.5px;background:#3f434a;border-radius:4.500px;box-shadow:0 0 0 1.500px #1e2024,0 2px 2px 1px rgba(0,0,0,.25);"></i>
<i style="left:952.55px;top:1670.3px;width:101.8px;height:1.3px;background:#2a2d31;"></i>
<i style="left:1003.05px;top:1670.3px;width:1.3px;height:31px;background:#2a2d31;"></i>
<i style="left:970.85px;top:1679.8px;width:13.4px;height:13.4px;background:#2c2f34;border-radius:50%"></i>
<svg class="u" style="left:1021.55px;top:1679px;width:13px;height:15px;color:#2c2f34;"><use href="#mono"/></svg>
<i style="left:1002.85px;top:1641px;width:1.3px;height:29.5px;background:#2a2d31;"></i>
<b class="tc f195" style="left:977.53px;top:1644px;color:#dadada;transform:scaleX(0.950);">M</b>
<b class="tc f195" style="left:1028.57px;top:1644px;color:#dadada;transform:scaleX(0.950);">S</b>
<i style="left:965.95px;top:1714px;width:19.7px;height:17px;background:#3a3d42;"></i>
<i style="left:965.95px;top:1731.5px;width:19.7px;height:173.3px;background:#22262b;"></i>
<b class="tr f115" style="left:962.48px;top:1732px;color:#cfd1d4;font-weight:700;transform:scaleX(0.950);">10</b>
<i style="left:969.25px;top:1737.2px;width:13.3px;height:1.3px;background:#1d4763;"></i>
<b class="tr f115" style="left:962.46px;top:1746px;color:#cfd1d4;font-weight:700;transform:scaleX(0.950);">6</b>
<i style="left:969.25px;top:1750.7px;width:13.3px;height:1.3px;background:#1d4763;"></i>
<b class="tr f115" style="left:962.46px;top:1769px;color:#cfd1d4;font-weight:700;transform:scaleX(0.950);">0</b>
<i style="left:969.25px;top:1774.2px;width:13.3px;height:1.3px;background:#7d8084;"></i>
<b class="tr f115" style="left:962.44px;top:1792px;color:#cfd1d4;font-weight:700;transform:scaleX(0.950);">-6</b>
<i style="left:969.25px;top:1797.2px;width:13.3px;height:1.3px;background:#1d4763;"></i>
<b class="tr f115" style="left:962.45px;top:1812px;color:#cfd1d4;font-weight:700;transform:scaleX(0.950);">-12</b>
<i style="left:969.25px;top:1817.2px;width:13.3px;height:1.3px;background:#1d4763;"></i>
<b class="tr f115" style="left:962.45px;top:1836px;color:#cfd1d4;font-weight:700;transform:scaleX(0.950);">-24</b>
<i style="left:969.25px;top:1841.2px;width:13.3px;height:1.3px;background:#1d4763;"></i>
<b class="tr f115" style="left:962.45px;top:1860px;color:#cfd1d4;font-weight:700;transform:scaleX(0.950);">-36</b>
<i style="left:969.25px;top:1865.2px;width:13.3px;height:1.3px;background:#1d4763;"></i>
<b class="tr f115" style="left:962.45px;top:1875px;color:#cfd1d4;font-weight:700;transform:scaleX(0.950);">-48</b>
<i style="left:969.25px;top:1880.2px;width:13.3px;height:1.3px;background:#1d4763;"></i>
<i style="left:969.25px;top:1892.2px;width:13.3px;height:1.3px;background:#1d4763;"></i>
<i style="left:1030.85px;top:1714px;width:16px;height:5px;background:#6ec3f4;"></i>
<i style="left:1030.85px;top:1720px;width:16px;height:5px;background:#6ec3f4;"></i>
<i style="left:1030.85px;top:1726px;width:16px;height:5px;background:#5d6168;"></i>
<i style="left:991.65px;top:1797.5px;width:21px;height:107.3px;background:#6e747b;"></i>
<i style="left:992.75px;top:1809px;width:18px;height:1.2px;background:#8d9399;"></i>
<i style="left:992.75px;top:1827.2px;width:18px;height:1.2px;background:#8d9399;"></i>
<i style="left:992.75px;top:1846.6px;width:18px;height:1.2px;background:#8d9399;"></i>
<i style="left:992.75px;top:1858.4px;width:18px;height:1.2px;background:#8d9399;"></i>
<i style="left:992.75px;top:1869px;width:18px;height:1.2px;background:#8d9399;"></i>
<i style="left:1000.75px;top:1738.5px;width:2.8px;height:141px;background:#1c1e21;"></i>
<i style="left:990.45px;top:1748.8px;width:24.3px;height:52.6px;background:;background:linear-gradient(180deg,#fafafa 0,#f0f0f0 6%,#8c8c8c 9%,#a9a9a9 14%,#d6d6d6 24%,#fff 36%,#fff 48.500%,#2a2a2a 48.500%,#2a2a2a 51.500%,#fff 51.500%,#fff 86%,#d4d4d4 93%,#8a8a8a 100%);border-radius:4.500px;box-shadow:inset 2.500px 0 2px rgba(0,0,0,.32),inset -2.500px 0 2px rgba(0,0,0,.32),0 0 0 1.300px #34373c,0 2px 3px 1px rgba(0,0,0,.35)"></i>
<svg class="u" style="left:1028.85px;top:1874.8px;width:20px;height:20px;"><use href="#knob"/></svg>
<b class="tc f160" style="left:964.96px;top:1915px;color:#f0f0f0;font-weight:700;transform:scaleX(0.970);">4</b>
<svg class="u" style="left:1025.85px;top:1915px;width:26px;height:16px;color:#bcbfc3;"><use href="#kb"/></svg>
<i style="left:949.65px;top:1940px;width:106.5px;height:22.6px;background:#26282c;border-radius:1.500px"></i>
<b class="tc f150" style="left:1002.64px;top:1942px;color:#8b8e94;transform:scaleX(1.043);">Auto: Off</b>
<i style="left:941.65px;top:1972px;width:121.3px;height:21.3px;background:#2d3035;"></i>
<b class="tc f170" style="left:1002.66px;top:1974px;color:#fff;transform:scaleX(1.003);">Kt. Tom 1</b>
<i style="left:1066.2px;top:852.8px;width:121.3px;height:539.6px;background:#50555d;"></i>
<i style="left:1066.2px;top:852.8px;width:121.3px;height:4.3px;background:#5d6269;"></i>
<i style="left:1066.2px;top:859.8px;width:121.3px;height:29.8px;background:#484c53;"></i>
<svg class="u" style="left:1071.2px;top:867.5px;width:16.4px;height:15.4px;color:#2f9ef0;"><use href="#pw"/></svg>
<b class="t f175" style="left:1093px;top:865px;color:#ececec;transform:scaleX(0.950);">Inserts</b>
<svg class="u" style="left:1150.7px;top:870.8px;width:12px;height:7px;color:#8a8e94;"><use href="#td"/></svg>
<svg class="u" style="left:1169.5px;top:867.8px;width:12.5px;height:12.5px;color:#8a8e94;"><use href="#pl"/></svg>
<i style="left:1066.2px;top:890.3px;width:121.3px;height:29.3px;background:#5f646b;"></i>
<svg class="u" style="left:1071.9px;top:899.1px;width:14.9px;height:14px;color:#74c8fb;"><use href="#pw"/></svg>
<svg class="u" style="left:1168px;top:901.8px;width:12px;height:7px;color:#6f747b;"><use href="#td"/></svg>
<b class="t f155" style="left:1091px;top:897px;color:#ececec;transform:scaleX(0.954);">Pro EQ</b>
<i style="left:1066.2px;top:922.2px;width:121.3px;height:29.3px;background:#5f646b;"></i>
<svg class="u" style="left:1071.9px;top:931px;width:14.9px;height:14px;color:#74c8fb;"><use href="#pw"/></svg>
<svg class="u" style="left:1168px;top:933.7px;width:12px;height:7px;color:#6f747b;"><use href="#td"/></svg>
<b class="t f155" style="left:1091px;top:929px;color:#ececec;transform:scaleX(0.995);">Compressor</b>
<i style="left:1064.7px;top:1392.4px;width:124.3px;height:2.8px;background:#1d1f22;"></i>
<i style="left:1066.2px;top:1395.2px;width:121.3px;height:116.5px;background:#50555d;"></i>
<svg class="u" style="left:1071.2px;top:1401.6px;width:16.4px;height:15.4px;color:#2f9ef0;"><use href="#pw"/></svg>
<b class="t f175" style="left:1092.7px;top:1400px;color:#ececec;transform:scaleX(0.949);">Sends</b>
<svg class="u" style="left:1169.5px;top:1402.5px;width:12.5px;height:12.5px;color:#8a8e94;"><use href="#pl"/></svg>
<i style="left:1066.2px;top:1425.5px;width:121.3px;height:29.5px;background:#5f646b;"></i>
<svg class="u" style="left:1071.9px;top:1434.3px;width:14.9px;height:14px;color:#74c8fb;"><use href="#pw"/></svg>
<svg class="u" style="left:1168px;top:1437px;width:12px;height:7px;color:#6f747b;"><use href="#td"/></svg>
<b class="t f155" style="left:1091px;top:1432px;color:#ececec;transform:scaleX(0.966);">PRLComp1</b>
<i style="left:1066.2px;top:1456px;width:121.3px;height:20px;background:#383b40;"></i>
<i style="left:1066.2px;top:1464px;width:100px;height:4px;background:#45484d;"></i>
<i style="left:1066.2px;top:1464px;width:68px;height:4px;background:#3fa0e6;"></i>
<svg class="u" style="left:1170.5px;top:1459px;width:15px;height:14px;" viewBox="0 0 15 14"><path d="M3.500 0v14" stroke="#d8d8d8" stroke-width="1.200"/><rect x="1" y="2.500" width="5" height="7" fill="#e6e6e6"/><rect x="9.500" y="4.500" width="4.500" height="4.500" fill="#e6e6e6"/></svg>
<i style="left:1066.2px;top:1476px;width:121.3px;height:12px;background:#3d4045;"></i>
<i style="left:1066.2px;top:1476px;width:121.3px;height:1.2px;background:#33363a;"></i>
<i style="left:1066.2px;top:1482px;width:121.3px;height:1px;background:#33363a;"></i>
<i style="left:1126.85px;top:1481.7px;width:1.2px;height:1.2px;background:#b0b0b0;"></i>
<i style="left:1064.7px;top:1511.7px;width:124.3px;height:3px;background:#1d1f22;"></i>
<i style="left:1066.2px;top:1514.7px;width:121.3px;height:457px;background:#50555d;"></i>
<i style="left:1066.2px;top:1515.3px;width:121.3px;height:3.5px;background:#5d6269;"></i>
<i style="left:1073.7px;top:1528px;width:108px;height:77.8px;background:#2a2d31;border-radius:3px;box-shadow:0 0 0 1.200px #3a3d43,0 1px 3px 1px rgba(0,0,0,.3)"></i>
<i style="left:1073.7px;top:1528px;width:108px;height:26.2px;background:#595d63;border-radius:3px 3px 0 0"></i>
<i style="left:1073.7px;top:1554.2px;width:108px;height:25.4px;background:#4c5056;"></i>
<b class="tc f165" style="left:1127.21px;top:1533px;color:#f0c864;transform:scaleX(1.035);">Kontakt</b>
<b class="tc f165" style="left:1127.21px;top:1558px;color:#f0c864;transform:scaleX(1.029);">Drum Group</b>
<i style="left:1125.5px;top:1581px;width:4px;height:24px;background:#3fa0e6;"></i>
<i style="left:1126.5px;top:1607px;width:1px;height:22px;background:#3f4349;"></i>
<b class="tc f165" style="left:1099.99px;top:1612px;color:#f2f2f2;transform:scaleX(1.055);">0dB</b>
<b class="tc f165" style="left:1154.5px;top:1612px;color:#f2f2f2;transform:scaleX(1.004);">&lt;C&gt;</b>
<i style="left:1077.1px;top:1641px;width:101.8px;height:60.5px;background:#3f434a;border-radius:4.500px;box-shadow:0 0 0 1.500px #1e2024,0 2px 2px 1px rgba(0,0,0,.25);"></i>
<i style="left:1077.1px;top:1670.3px;width:101.8px;height:1.3px;background:#2a2d31;"></i>
<i style="left:1127.6px;top:1670.3px;width:1.3px;height:31px;background:#2a2d31;"></i>
<i style="left:1095.4px;top:1679.8px;width:13.4px;height:13.4px;background:#2c2f34;border-radius:50%"></i>
<svg class="u" style="left:1146.1px;top:1679px;width:13px;height:15px;color:#2c2f34;"><use href="#mono"/></svg>
<i style="left:1127.4px;top:1641px;width:1.3px;height:29.5px;background:#2a2d31;"></i>
<b class="tc f195" style="left:1102.08px;top:1644px;color:#dadada;transform:scaleX(0.950);">M</b>
<b class="tc f195" style="left:1153.12px;top:1644px;color:#dadada;transform:scaleX(0.950);">S</b>
<i style="left:1090.5px;top:1714px;width:19.7px;height:17px;background:#3a3d42;"></i>
<i style="left:1090.5px;top:1731.5px;width:19.7px;height:173.3px;background:#22262b;"></i>
<b class="tr f115" style="left:1087.03px;top:1732px;color:#cfd1d4;font-weight:700;transform:scaleX(0.950);">10</b>
<i style="left:1093.8px;top:1737.2px;width:13.3px;height:1.3px;background:#1d4763;"></i>
<b class="tr f115" style="left:1087.01px;top:1746px;color:#cfd1d4;font-weight:700;transform:scaleX(0.950);">6</b>
<i style="left:1093.8px;top:1750.7px;width:13.3px;height:1.3px;background:#1d4763;"></i>
<b class="tr f115" style="left:1087.01px;top:1769px;color:#cfd1d4;font-weight:700;transform:scaleX(0.950);">0</b>
<i style="left:1093.8px;top:1774.2px;width:13.3px;height:1.3px;background:#7d8084;"></i>
<b class="tr f115" style="left:1086.99px;top:1792px;color:#cfd1d4;font-weight:700;transform:scaleX(0.950);">-6</b>
<i style="left:1093.8px;top:1797.2px;width:13.3px;height:1.3px;background:#1d4763;"></i>
<b class="tr f115" style="left:1087px;top:1812px;color:#cfd1d4;font-weight:700;transform:scaleX(0.950);">-12</b>
<i style="left:1093.8px;top:1817.2px;width:13.3px;height:1.3px;background:#1d4763;"></i>
<b class="tr f115" style="left:1087px;top:1836px;color:#cfd1d4;font-weight:700;transform:scaleX(0.950);">-24</b>
<i style="left:1093.8px;top:1841.2px;width:13.3px;height:1.3px;background:#1d4763;"></i>
<b class="tr f115" style="left:1087px;top:1860px;color:#cfd1d4;font-weight:700;transform:scaleX(0.950);">-36</b>
<i style="left:1093.8px;top:1865.2px;width:13.3px;height:1.3px;background:#1d4763;"></i>
<b class="tr f115" style="left:1087px;top:1875px;color:#cfd1d4;font-weight:700;transform:scaleX(0.950);">-48</b>
<i style="left:1093.8px;top:1880.2px;width:13.3px;height:1.3px;background:#1d4763;"></i>
<i style="left:1093.8px;top:1892.2px;width:13.3px;height:1.3px;background:#1d4763;"></i>
<i style="left:1155.4px;top:1714px;width:16px;height:5px;background:#6ec3f4;"></i>
<i style="left:1155.4px;top:1720px;width:16px;height:5px;background:#6ec3f4;"></i>
<i style="left:1155.4px;top:1726px;width:16px;height:5px;background:#5d6168;"></i>
<i style="left:1116.2px;top:1797.5px;width:21px;height:107.3px;background:#6e747b;"></i>
<i style="left:1117.3px;top:1809px;width:18px;height:1.2px;background:#8d9399;"></i>
<i style="left:1117.3px;top:1827.2px;width:18px;height:1.2px;background:#8d9399;"></i>
<i style="left:1117.3px;top:1846.6px;width:18px;height:1.2px;background:#8d9399;"></i>
<i style="left:1117.3px;top:1858.4px;width:18px;height:1.2px;background:#8d9399;"></i>
<i style="left:1117.3px;top:1869px;width:18px;height:1.2px;background:#8d9399;"></i>
<i style="left:1125.3px;top:1738.5px;width:2.8px;height:141px;background:#1c1e21;"></i>
<i style="left:1115px;top:1748.8px;width:24.3px;height:52.6px;background:;background:linear-gradient(180deg,#fafafa 0,#f0f0f0 6%,#8c8c8c 9%,#a9a9a9 14%,#d6d6d6 24%,#fff 36%,#fff 48.500%,#2a2a2a 48.500%,#2a2a2a 51.500%,#fff 51.500%,#fff 86%,#d4d4d4 93%,#8a8a8a 100%);border-radius:4.500px;box-shadow:inset 2.500px 0 2px rgba(0,0,0,.32),inset -2.500px 0 2px rgba(0,0,0,.32),0 0 0 1.300px #34373c,0 2px 3px 1px rgba(0,0,0,.35)"></i>
<svg class="u" style="left:1153.4px;top:1874.8px;width:20px;height:20px;"><use href="#knob"/></svg>
<b class="tc f160" style="left:1089.51px;top:1915px;color:#f0f0f0;font-weight:700;transform:scaleX(0.970);">5</b>
<svg class="u" style="left:1150.4px;top:1915px;width:26px;height:16px;color:#bcbfc3;"><use href="#kb"/></svg>
<i style="left:1074.2px;top:1940px;width:106.5px;height:22.6px;background:#26282c;border-radius:1.500px"></i>
<b class="tc f150" style="left:1127.19px;top:1942px;color:#8b8e94;transform:scaleX(1.043);">Auto: Off</b>
<i style="left:1066.2px;top:1972px;width:121.3px;height:21.3px;background:#2d3035;"></i>
<b class="tc f170" style="left:1127.21px;top:1974px;color:#fff;transform:scaleX(1.025);">Kt. Tom 2</b>
<i style="left:1190.75px;top:852.8px;width:121.3px;height:539.6px;background:#50555d;"></i>
<i style="left:1190.75px;top:852.8px;width:121.3px;height:4.3px;background:#5d6269;"></i>
<i style="left:1190.75px;top:859.8px;width:121.3px;height:29.8px;background:#484c53;"></i>
<svg class="u" style="left:1195.75px;top:867.5px;width:16.4px;height:15.4px;color:#2f9ef0;"><use href="#pw"/></svg>
<b class="t f175" style="left:1217.55px;top:865px;color:#ececec;transform:scaleX(0.950);">Inserts</b>
<svg class="u" style="left:1275.25px;top:870.8px;width:12px;height:7px;color:#8a8e94;"><use href="#td"/></svg>
<svg class="u" style="left:1294.05px;top:867.8px;width:12.5px;height:12.5px;color:#8a8e94;"><use href="#pl"/></svg>
<i style="left:1190.75px;top:890.3px;width:121.3px;height:29.3px;background:#5f646b;"></i>
<svg class="u" style="left:1196.45px;top:899.1px;width:14.9px;height:14px;color:#74c8fb;"><use href="#pw"/></svg>
<svg class="u" style="left:1292.55px;top:901.8px;width:12px;height:7px;color:#6f747b;"><use href="#td"/></svg>
<b class="t f155" style="left:1215.55px;top:897px;color:#ececec;transform:scaleX(0.954);">Pro EQ</b>
<i style="left:1190.75px;top:922.2px;width:121.3px;height:29.3px;background:#5f646b;"></i>
<svg class="u" style="left:1196.45px;top:931px;width:14.9px;height:14px;color:#74c8fb;"><use href="#pw"/></svg>
<svg class="u" style="left:1292.55px;top:933.7px;width:12px;height:7px;color:#6f747b;"><use href="#td"/></svg>
<b class="t f155" style="left:1215.55px;top:929px;color:#ececec;transform:scaleX(0.995);">Compressor</b>
<i style="left:1189.25px;top:1392.4px;width:124.3px;height:2.8px;background:#1d1f22;"></i>
<i style="left:1190.75px;top:1395.2px;width:121.3px;height:116.5px;background:#50555d;"></i>
<svg class="u" style="left:1195.75px;top:1401.6px;width:16.4px;height:15.4px;color:#2f9ef0;"><use href="#pw"/></svg>
<b class="t f175" style="left:1217.25px;top:1400px;color:#ececec;transform:scaleX(0.949);">Sends</b>
<svg class="u" style="left:1294.05px;top:1402.5px;width:12.5px;height:12.5px;color:#8a8e94;"><use href="#pl"/></svg>
<i style="left:1190.75px;top:1425.5px;width:121.3px;height:29.5px;background:#5f646b;"></i>
<svg class="u" style="left:1196.45px;top:1434.3px;width:14.9px;height:14px;color:#74c8fb;"><use href="#pw"/></svg>
<svg class="u" style="left:1292.55px;top:1437px;width:12px;height:7px;color:#6f747b;"><use href="#td"/></svg>
<b class="t f155" style="left:1215.55px;top:1432px;color:#ececec;transform:scaleX(0.966);">PRLComp1</b>
<i style="left:1190.75px;top:1456px;width:121.3px;height:20px;background:#383b40;"></i>
<i style="left:1190.75px;top:1464px;width:100px;height:4px;background:#45484d;"></i>
<i style="left:1190.75px;top:1464px;width:68px;height:4px;background:#3fa0e6;"></i>
<svg class="u" style="left:1295.05px;top:1459px;width:15px;height:14px;" viewBox="0 0 15 14"><path d="M3.500 0v14" stroke="#d8d8d8" stroke-width="1.200"/><rect x="1" y="2.500" width="5" height="7" fill="#e6e6e6"/><rect x="9.500" y="4.500" width="4.500" height="4.500" fill="#e6e6e6"/></svg>
<i style="left:1190.75px;top:1476px;width:121.3px;height:12px;background:#3d4045;"></i>
<i style="left:1190.75px;top:1476px;width:121.3px;height:1.2px;background:#33363a;"></i>
<i style="left:1190.75px;top:1482px;width:121.3px;height:1px;background:#33363a;"></i>
<i style="left:1251.4px;top:1481.7px;width:1.2px;height:1.2px;background:#b0b0b0;"></i>
<i style="left:1189.25px;top:1511.7px;width:124.3px;height:3px;background:#1d1f22;"></i>
<i style="left:1190.75px;top:1514.7px;width:121.3px;height:457px;background:#50555d;"></i>
<i style="left:1190.75px;top:1515.3px;width:121.3px;height:3.5px;background:#5d6269;"></i>
<i style="left:1198.25px;top:1528px;width:108px;height:77.8px;background:#2a2d31;border-radius:3px;box-shadow:0 0 0 1.200px #3a3d43,0 1px 3px 1px rgba(0,0,0,.3)"></i>
<i style="left:1198.25px;top:1528px;width:108px;height:26.2px;background:#595d63;border-radius:3px 3px 0 0"></i>
<i style="left:1198.25px;top:1554.2px;width:108px;height:25.4px;background:#4c5056;"></i>
<b class="tc f165" style="left:1251.76px;top:1533px;color:#f0c864;transform:scaleX(1.035);">Kontakt</b>
<b class="tc f165" style="left:1251.76px;top:1558px;color:#f0c864;transform:scaleX(1.029);">Drum Group</b>
<i style="left:1250.05px;top:1581px;width:4px;height:24px;background:#3fa0e6;"></i>
<i style="left:1251.05px;top:1607px;width:1px;height:22px;background:#3f4349;"></i>
<b class="tc f165" style="left:1224.54px;top:1612px;color:#f2f2f2;transform:scaleX(1.055);">0dB</b>
<b class="tc f165" style="left:1279.05px;top:1612px;color:#f2f2f2;transform:scaleX(1.004);">&lt;C&gt;</b>
<i style="left:1201.65px;top:1641px;width:101.8px;height:60.5px;background:#3f434a;border-radius:4.500px;box-shadow:0 0 0 1.500px #1e2024,0 2px 2px 1px rgba(0,0,0,.25);"></i>
<i style="left:1201.65px;top:1670.3px;width:101.8px;height:1.3px;background:#2a2d31;"></i>
<i style="left:1252.15px;top:1670.3px;width:1.3px;height:31px;background:#2a2d31;"></i>
<i style="left:1219.95px;top:1679.8px;width:13.4px;height:13.4px;background:#2c2f34;border-radius:50%"></i>
<svg class="u" style="left:1270.65px;top:1679px;width:13px;height:15px;color:#2c2f34;"><use href="#mono"/></svg>
<i style="left:1251.95px;top:1641px;width:1.3px;height:29.5px;background:#2a2d31;"></i>
<b class="tc f195" style="left:1226.63px;top:1644px;color:#dadada;transform:scaleX(0.950);">M</b>
<b class="tc f195" style="left:1277.67px;top:1644px;color:#dadada;transform:scaleX(0.950);">S</b>
<i style="left:1215.05px;top:1714px;width:19.7px;height:17px;background:#3a3d42;"></i>
<i style="left:1215.05px;top:1731.5px;width:19.7px;height:173.3px;background:#22262b;"></i>
<b class="tr f115" style="left:1211.58px;top:1732px;color:#cfd1d4;font-weight:700;transform:scaleX(0.950);">10</b>
<i style="left:1218.35px;top:1737.2px;width:13.3px;height:1.3px;background:#1d4763;"></i>
<b class="tr f115" style="left:1211.56px;top:1746px;color:#cfd1d4;font-weight:700;transform:scaleX(0.950);">6</b>
<i style="left:1218.35px;top:1750.7px;width:13.3px;height:1.3px;background:#1d4763;"></i>
<b class="tr f115" style="left:1211.56px;top:1769px;color:#cfd1d4;font-weight:700;transform:scaleX(0.950);">0</b>
<i style="left:1218.35px;top:1774.2px;width:13.3px;height:1.3px;background:#7d8084;"></i>
<b class="tr f115" style="left:1211.54px;top:1792px;color:#cfd1d4;font-weight:700;transform:scaleX(0.950);">-6</b>
<i style="left:1218.35px;top:1797.2px;width:13.3px;height:1.3px;background:#1d4763;"></i>
<b class="tr f115" style="left:1211.55px;top:1812px;color:#cfd1d4;font-weight:700;transform:scaleX(0.950);">-12</b>
<i style="left:1218.35px;top:1817.2px;width:13.3px;height:1.3px;background:#1d4763;"></i>
<b class="tr f115" style="left:1211.55px;top:1836px;color:#cfd1d4;font-weight:700;transform:scaleX(0.950);">-24</b>
<i style="left:1218.35px;top:1841.2px;width:13.3px;height:1.3px;background:#1d4763;"></i>
<b class="tr f115" style="left:1211.55px;top:1860px;color:#cfd1d4;font-weight:700;transform:scaleX(0.950);">-36</b>
<i style="left:1218.35px;top:1865.2px;width:13.3px;height:1.3px;background:#1d4763;"></i>
<b class="tr f115" style="left:1211.55px;top:1875px;color:#cfd1d4;font-weight:700;transform:scaleX(0.950);">-48</b>
<i style="left:1218.35px;top:1880.2px;width:13.3px;height:1.3px;background:#1d4763;"></i>
<i style="left:1218.35px;top:1892.2px;width:13.3px;height:1.3px;background:#1d4763;"></i>
<i style="left:1218.05px;top:1900.5px;width:6px;height:2px;background:#4aa3e0;"></i>
<i style="left:1226.05px;top:1900.5px;width:6px;height:2px;background:#4aa3e0;"></i>
<i style="left:1279.95px;top:1714px;width:16px;height:5px;background:#6ec3f4;"></i>
<i style="left:1279.95px;top:1720px;width:16px;height:5px;background:#6ec3f4;"></i>
<i style="left:1279.95px;top:1726px;width:16px;height:5px;background:#5d6168;"></i>
<i style="left:1240.75px;top:1797.5px;width:21px;height:107.3px;background:#6e747b;"></i>
<i style="left:1241.85px;top:1809px;width:18px;height:1.2px;background:#8d9399;"></i>
<i style="left:1241.85px;top:1827.2px;width:18px;height:1.2px;background:#8d9399;"></i>
<i style="left:1241.85px;top:1846.6px;width:18px;height:1.2px;background:#8d9399;"></i>
<i style="left:1241.85px;top:1858.4px;width:18px;height:1.2px;background:#8d9399;"></i>
<i style="left:1241.85px;top:1869px;width:18px;height:1.2px;background:#8d9399;"></i>
<i style="left:1249.85px;top:1738.5px;width:2.8px;height:141px;background:#1c1e21;"></i>
<i style="left:1239.55px;top:1748.8px;width:24.3px;height:52.6px;background:;background:linear-gradient(180deg,#fafafa 0,#f0f0f0 6%,#8c8c8c 9%,#a9a9a9 14%,#d6d6d6 24%,#fff 36%,#fff 48.500%,#2a2a2a 48.500%,#2a2a2a 51.500%,#fff 51.500%,#fff 86%,#d4d4d4 93%,#8a8a8a 100%);border-radius:4.500px;box-shadow:inset 2.500px 0 2px rgba(0,0,0,.32),inset -2.500px 0 2px rgba(0,0,0,.32),0 0 0 1.300px #34373c,0 2px 3px 1px rgba(0,0,0,.35)"></i>
<svg class="u" style="left:1277.95px;top:1874.8px;width:20px;height:20px;"><use href="#knob"/></svg>
<b class="tc f160" style="left:1214.06px;top:1915px;color:#f0f0f0;font-weight:700;transform:scaleX(0.970);">6</b>
<svg class="u" style="left:1274.95px;top:1915px;width:26px;height:16px;color:#bcbfc3;"><use href="#kb"/></svg>
<i style="left:1198.75px;top:1940px;width:106.5px;height:22.6px;background:#26282c;border-radius:1.500px"></i>
<b class="tc f150" style="left:1251.74px;top:1942px;color:#8b8e94;transform:scaleX(1.043);">Auto: Off</b>
<i style="left:1190.75px;top:1972px;width:121.3px;height:21.3px;background:#2d3035;"></i>
<b class="tc f170" style="left:1251.75px;top:1974px;color:#fff;transform:scaleX(0.996);">Kt. OH</b>
<i style="left:1315.3px;top:852.8px;width:121.3px;height:539.6px;background:#50555d;"></i>
<i style="left:1315.3px;top:852.8px;width:121.3px;height:4.3px;background:#5d6269;"></i>
<i style="left:1315.3px;top:859.8px;width:121.3px;height:29.8px;background:#484c53;"></i>
<svg class="u" style="left:1320.3px;top:867.5px;width:16.4px;height:15.4px;color:#2f9ef0;"><use href="#pw"/></svg>
<b class="t f175" style="left:1342.1px;top:865px;color:#ececec;transform:scaleX(0.950);">Inserts</b>
<svg class="u" style="left:1399.8px;top:870.8px;width:12px;height:7px;color:#8a8e94;"><use href="#td"/></svg>
<svg class="u" style="left:1418.6px;top:867.8px;width:12.5px;height:12.5px;color:#8a8e94;"><use href="#pl"/></svg>
<i style="left:1315.3px;top:890.3px;width:121.3px;height:29.3px;background:#5f646b;"></i>
<svg class="u" style="left:1321px;top:899.1px;width:14.9px;height:14px;color:#74c8fb;"><use href="#pw"/></svg>
<svg class="u" style="left:1417.1px;top:901.8px;width:12px;height:7px;color:#6f747b;"><use href="#td"/></svg>
<b class="t f155" style="left:1340.1px;top:897px;color:#ececec;transform:scaleX(0.954);">Pro EQ</b>
<i style="left:1315.3px;top:922.2px;width:121.3px;height:29.3px;background:#5f646b;"></i>
<svg class="u" style="left:1321px;top:931px;width:14.9px;height:14px;color:#74c8fb;"><use href="#pw"/></svg>
<svg class="u" style="left:1417.1px;top:933.7px;width:12px;height:7px;color:#6f747b;"><use href="#td"/></svg>
<b class="t f155" style="left:1340.1px;top:929px;color:#ececec;transform:scaleX(0.977);">Fat Channel</b>
<i style="left:1313.8px;top:1392.4px;width:124.3px;height:2.8px;background:#1d1f22;"></i>
<i style="left:1315.3px;top:1395.2px;width:121.3px;height:116.5px;background:#50555d;"></i>
<svg class="u" style="left:1320.3px;top:1401.6px;width:16.4px;height:15.4px;color:#70747b;"><use href="#pw"/></svg>
<b class="t f175" style="left:1341.8px;top:1400px;color:#ececec;transform:scaleX(0.949);">Sends</b>
<svg class="u" style="left:1418.6px;top:1402.5px;width:12.5px;height:12.5px;color:#8a8e94;"><use href="#pl"/></svg>
<i style="left:1313.8px;top:1511.7px;width:124.3px;height:3px;background:#1d1f22;"></i>
<i style="left:1315.3px;top:1514.7px;width:121.3px;height:457px;background:#50555d;"></i>
<i style="left:1315.3px;top:1515.3px;width:121.3px;height:3.5px;background:#5d6269;"></i>
<i style="left:1322.8px;top:1528px;width:108px;height:77.8px;background:#2a2d31;border-radius:3px;box-shadow:0 0 0 1.200px #3a3d43,0 1px 3px 1px rgba(0,0,0,.3)"></i>
<i style="left:1322.8px;top:1528px;width:108px;height:26.2px;background:#595d63;border-radius:3px 3px 0 0"></i>
<i style="left:1322.8px;top:1554.2px;width:108px;height:25.4px;background:#4c5056;"></i>
<b class="tc f165" style="left:1376.31px;top:1533px;color:#f0c864;transform:scaleX(1.035);">Kontakt</b>
<b class="tc f165" style="left:1376.31px;top:1558px;color:#f0c864;transform:scaleX(1.029);">Drum Group</b>
<i style="left:1374.6px;top:1581px;width:4px;height:24px;background:#3fa0e6;"></i>
<i style="left:1375.6px;top:1607px;width:1px;height:22px;background:#3f4349;"></i>
<b class="tc f165" style="left:1349.09px;top:1612px;color:#f2f2f2;transform:scaleX(1.055);">0dB</b>
<b class="tc f165" style="left:1403.6px;top:1612px;color:#f2f2f2;transform:scaleX(1.004);">&lt;C&gt;</b>
<i style="left:1326.2px;top:1641px;width:101.8px;height:60.5px;background:#3f434a;border-radius:4.500px;box-shadow:0 0 0 1.500px #1e2024,0 2px 2px 1px rgba(0,0,0,.25);"></i>
<i style="left:1326.2px;top:1670.3px;width:101.8px;height:1.3px;background:#2a2d31;"></i>
<i style="left:1376.7px;top:1670.3px;width:1.3px;height:31px;background:#2a2d31;"></i>
<i style="left:1344.5px;top:1679.8px;width:13.4px;height:13.4px;background:#2c2f34;border-radius:50%"></i>
<svg class="u" style="left:1395.2px;top:1679px;width:13px;height:15px;color:#2c2f34;"><use href="#mono"/></svg>
<i style="left:1376.5px;top:1641px;width:1.3px;height:29.5px;background:#2a2d31;"></i>
<b class="tc f195" style="left:1351.18px;top:1644px;color:#dadada;transform:scaleX(0.950);">M</b>
<b class="tc f195" style="left:1402.22px;top:1644px;color:#dadada;transform:scaleX(0.950);">S</b>
<i style="left:1339.6px;top:1714px;width:19.7px;height:17px;background:#3a3d42;"></i>
<i style="left:1339.6px;top:1731.5px;width:19.7px;height:173.3px;background:#22262b;"></i>
<b class="tr f115" style="left:1336.13px;top:1732px;color:#cfd1d4;font-weight:700;transform:scaleX(0.950);">10</b>
<i style="left:1342.9px;top:1737.2px;width:13.3px;height:1.3px;background:#1d4763;"></i>
<b class="tr f115" style="left:1336.11px;top:1746px;color:#cfd1d4;font-weight:700;transform:scaleX(0.950);">6</b>
<i style="left:1342.9px;top:1750.7px;width:13.3px;height:1.3px;background:#1d4763;"></i>
<b class="tr f115" style="left:1336.11px;top:1769px;color:#cfd1d4;font-weight:700;transform:scaleX(0.950);">0</b>
<i style="left:1342.9px;top:1774.2px;width:13.3px;height:1.3px;background:#7d8084;"></i>
<b class="tr f115" style="left:1336.09px;top:1792px;color:#cfd1d4;font-weight:700;transform:scaleX(0.950);">-6</b>
<i style="left:1342.9px;top:1797.2px;width:13.3px;height:1.3px;background:#1d4763;"></i>
<b class="tr f115" style="left:1336.1px;top:1812px;color:#cfd1d4;font-weight:700;transform:scaleX(0.950);">-12</b>
<i style="left:1342.9px;top:1817.2px;width:13.3px;height:1.3px;background:#1d4763;"></i>
<b class="tr f115" style="left:1336.1px;top:1836px;color:#cfd1d4;font-weight:700;transform:scaleX(0.950);">-24</b>
<i style="left:1342.9px;top:1841.2px;width:13.3px;height:1.3px;background:#1d4763;"></i>
<b class="tr f115" style="left:1336.1px;top:1860px;color:#cfd1d4;font-weight:700;transform:scaleX(0.950);">-36</b>
<i style="left:1342.9px;top:1865.2px;width:13.3px;height:1.3px;background:#1d4763;"></i>
<b class="tr f115" style="left:1336.1px;top:1875px;color:#cfd1d4;font-weight:700;transform:scaleX(0.950);">-48</b>
<i style="left:1342.9px;top:1880.2px;width:13.3px;height:1.3px;background:#1d4763;"></i>
<i style="left:1342.9px;top:1892.2px;width:13.3px;height:1.3px;background:#1d4763;"></i>
<i style="left:1342.6px;top:1900.5px;width:6px;height:2px;background:#4aa3e0;"></i>
<i style="left:1350.6px;top:1900.5px;width:6px;height:2px;background:#4aa3e0;"></i>
<i style="left:1404.5px;top:1714px;width:16px;height:5px;background:#6ec3f4;"></i>
<i style="left:1404.5px;top:1720px;width:16px;height:5px;background:#6ec3f4;"></i>
<i style="left:1404.5px;top:1726px;width:16px;height:5px;background:#5d6168;"></i>
<i style="left:1365.3px;top:1797.5px;width:21px;height:107.3px;background:#6e747b;"></i>
<i style="left:1366.4px;top:1809px;width:18px;height:1.2px;background:#8d9399;"></i>
<i style="left:1366.4px;top:1827.2px;width:18px;height:1.2px;background:#8d9399;"></i>
<i style="left:1366.4px;top:1846.6px;width:18px;height:1.2px;background:#8d9399;"></i>
<i style="left:1366.4px;top:1858.4px;width:18px;height:1.2px;background:#8d9399;"></i>
<i style="left:1366.4px;top:1869px;width:18px;height:1.2px;background:#8d9399;"></i>
<i style="left:1374.4px;top:1738.5px;width:2.8px;height:141px;background:#1c1e21;"></i>
<i style="left:1364.1px;top:1748.8px;width:24.3px;height:52.6px;background:;background:linear-gradient(180deg,#fafafa 0,#f0f0f0 6%,#8c8c8c 9%,#a9a9a9 14%,#d6d6d6 24%,#fff 36%,#fff 48.500%,#2a2a2a 48.500%,#2a2a2a 51.500%,#fff 51.500%,#fff 86%,#d4d4d4 93%,#8a8a8a 100%);border-radius:4.500px;box-shadow:inset 2.500px 0 2px rgba(0,0,0,.32),inset -2.500px 0 2px rgba(0,0,0,.32),0 0 0 1.300px #34373c,0 2px 3px 1px rgba(0,0,0,.35)"></i>
<svg class="u" style="left:1402.5px;top:1874.8px;width:20px;height:20px;"><use href="#knob"/></svg>
<b class="tc f160" style="left:1338.61px;top:1915px;color:#f0f0f0;font-weight:700;transform:scaleX(0.970);">7</b>
<svg class="u" style="left:1399.5px;top:1915px;width:26px;height:16px;color:#bcbfc3;"><use href="#kb"/></svg>
<i style="left:1323.3px;top:1940px;width:106.5px;height:22.6px;background:#26282c;border-radius:1.500px"></i>
<b class="tc f150" style="left:1376.29px;top:1942px;color:#8b8e94;transform:scaleX(1.043);">Auto: Off</b>
<i style="left:1315.3px;top:1972px;width:121.3px;height:21.3px;background:#2d3035;"></i>
<b class="tc f170" style="left:1376.32px;top:1974px;color:#fff;transform:scaleX(1.019);">Kt. Mono</b>
<i style="left:1439.85px;top:852.8px;width:121.3px;height:539.6px;background:#50555d;"></i>
<i style="left:1439.85px;top:852.8px;width:121.3px;height:4.3px;background:#5d6269;"></i>
<i style="left:1439.85px;top:859.8px;width:121.3px;height:29.8px;background:#484c53;"></i>
<svg class="u" style="left:1444.85px;top:867.5px;width:16.4px;height:15.4px;color:#2f9ef0;"><use href="#pw"/></svg>
<b class="t f175" style="left:1466.65px;top:865px;color:#ececec;transform:scaleX(0.950);">Inserts</b>
<svg class="u" style="left:1524.35px;top:870.8px;width:12px;height:7px;color:#8a8e94;"><use href="#td"/></svg>
<svg class="u" style="left:1543.15px;top:867.8px;width:12.5px;height:12.5px;color:#8a8e94;"><use href="#pl"/></svg>
<i style="left:1439.85px;top:890.3px;width:121.3px;height:29.3px;background:#5f646b;"></i>
<svg class="u" style="left:1445.55px;top:899.1px;width:14.9px;height:14px;color:#74c8fb;"><use href="#pw"/></svg>
<svg class="u" style="left:1541.65px;top:901.8px;width:12px;height:7px;color:#6f747b;"><use href="#td"/></svg>
<b class="t f155" style="left:1464.65px;top:897px;color:#ececec;transform:scaleX(0.954);">Pro EQ</b>
<i style="left:1439.85px;top:922.2px;width:121.3px;height:29.3px;background:#5f646b;"></i>
<svg class="u" style="left:1445.55px;top:931px;width:14.9px;height:14px;color:#74c8fb;"><use href="#pw"/></svg>
<svg class="u" style="left:1541.65px;top:933.7px;width:12px;height:7px;color:#6f747b;"><use href="#td"/></svg>
<b class="t f155" style="left:1464.65px;top:929px;color:#ececec;transform:scaleX(0.977);">Fat Channel</b>
<i style="left:1438.35px;top:1392.4px;width:124.3px;height:2.8px;background:#1d1f22;"></i>
<i style="left:1439.85px;top:1395.2px;width:121.3px;height:116.5px;background:#50555d;"></i>
<svg class="u" style="left:1444.85px;top:1401.6px;width:16.4px;height:15.4px;color:#2f9ef0;"><use href="#pw"/></svg>
<b class="t f175" style="left:1466.35px;top:1400px;color:#ececec;transform:scaleX(0.949);">Sends</b>
<svg class="u" style="left:1543.15px;top:1402.5px;width:12.5px;height:12.5px;color:#8a8e94;"><use href="#pl"/></svg>
<i style="left:1439.85px;top:1425.5px;width:121.3px;height:29.5px;background:#5f646b;"></i>
<svg class="u" style="left:1445.55px;top:1434.3px;width:14.9px;height:14px;color:#74c8fb;"><use href="#pw"/></svg>
<svg class="u" style="left:1541.65px;top:1437px;width:12px;height:7px;color:#6f747b;"><use href="#td"/></svg>
<b class="t f155" style="left:1464.65px;top:1432px;color:#ececec;transform:scaleX(0.966);">PRLComp1</b>
<i style="left:1439.85px;top:1456px;width:121.3px;height:20px;background:#383b40;"></i>
<i style="left:1439.85px;top:1464px;width:100px;height:4px;background:#45484d;"></i>
<i style="left:1439.85px;top:1464px;width:68px;height:4px;background:#3fa0e6;"></i>
<svg class="u" style="left:1544.15px;top:1459px;width:15px;height:14px;" viewBox="0 0 15 14"><path d="M3.500 0v14" stroke="#d8d8d8" stroke-width="1.200"/><rect x="1" y="2.500" width="5" height="7" fill="#e6e6e6"/><rect x="9.500" y="4.500" width="4.500" height="4.500" fill="#e6e6e6"/></svg>
<i style="left:1439.85px;top:1476px;width:121.3px;height:12px;background:#3d4045;"></i>
<i style="left:1439.85px;top:1476px;width:121.3px;height:1.2px;background:#33363a;"></i>
<i style="left:1439.85px;top:1482px;width:121.3px;height:1px;background:#33363a;"></i>
<i style="left:1500.5px;top:1481.7px;width:1.2px;height:1.2px;background:#b0b0b0;"></i>
<i style="left:1438.35px;top:1511.7px;width:124.3px;height:3px;background:#1d1f22;"></i>
<i style="left:1439.85px;top:1514.7px;width:121.3px;height:457px;background:#50555d;"></i>
<i style="left:1439.85px;top:1515.3px;width:121.3px;height:3.5px;background:#5d6269;"></i>
<i style="left:1447.35px;top:1528px;width:108px;height:77.8px;background:#2a2d31;border-radius:3px;box-shadow:0 0 0 1.200px #3a3d43,0 1px 3px 1px rgba(0,0,0,.3)"></i>
<i style="left:1447.35px;top:1528px;width:108px;height:26.2px;background:#595d63;border-radius:3px 3px 0 0"></i>
<i style="left:1447.35px;top:1554.2px;width:108px;height:25.4px;background:#4c5056;"></i>
<b class="tc f165" style="left:1500.86px;top:1533px;color:#f0c864;transform:scaleX(1.035);">Kontakt</b>
<b class="tc f165" style="left:1500.86px;top:1558px;color:#f0c864;transform:scaleX(1.029);">Drum Group</b>
<i style="left:1499.15px;top:1581px;width:4px;height:24px;background:#3fa0e6;"></i>
<i style="left:1500.15px;top:1607px;width:1px;height:22px;background:#3f4349;"></i>
<b class="tc f165" style="left:1473.64px;top:1612px;color:#f2f2f2;transform:scaleX(1.055);">0dB</b>
<b class="tc f165" style="left:1528.15px;top:1612px;color:#f2f2f2;transform:scaleX(1.004);">&lt;C&gt;</b>
<i style="left:1450.75px;top:1641px;width:101.8px;height:60.5px;background:#3f434a;border-radius:4.500px;box-shadow:0 0 0 1.500px #1e2024,0 2px 2px 1px rgba(0,0,0,.25);"></i>
<i style="left:1450.75px;top:1670.3px;width:101.8px;height:1.3px;background:#2a2d31;"></i>
<i style="left:1501.25px;top:1670.3px;width:1.3px;height:31px;background:#2a2d31;"></i>
<i style="left:1469.05px;top:1679.8px;width:13.4px;height:13.4px;background:#2c2f34;border-radius:50%"></i>
<svg class="u" style="left:1519.75px;top:1679px;width:13px;height:15px;color:#2c2f34;"><use href="#mono"/></svg>
<i style="left:1501.05px;top:1641px;width:1.3px;height:29.5px;background:#2a2d31;"></i>
<b class="tc f195" style="left:1475.73px;top:1644px;color:#dadada;transform:scaleX(0.950);">M</b>
<b class="tc f195" style="left:1526.77px;top:1644px;color:#dadada;transform:scaleX(0.950);">S</b>
<i style="left:1464.15px;top:1714px;width:19.7px;height:17px;background:#3a3d42;"></i>
<i style="left:1464.15px;top:1731.5px;width:19.7px;height:173.3px;background:#22262b;"></i>
<b class="tr f115" style="left:1460.68px;top:1732px;color:#cfd1d4;font-weight:700;transform:scaleX(0.950);">10</b>
<i style="left:1467.45px;top:1737.2px;width:13.3px;height:1.3px;background:#1d4763;"></i>
<b class="tr f115" style="left:1460.66px;top:1746px;color:#cfd1d4;font-weight:700;transform:scaleX(0.950);">6</b>
<i style="left:1467.45px;top:1750.7px;width:13.3px;height:1.3px;background:#1d4763;"></i>
<b class="tr f115" style="left:1460.66px;top:1769px;color:#cfd1d4;font-weight:700;transform:scaleX(0.950);">0</b>
<i style="left:1467.45px;top:1774.2px;width:13.3px;height:1.3px;background:#7d8084;"></i>
<b class="tr f115" style="left:1460.64px;top:1792px;color:#cfd1d4;font-weight:700;transform:scaleX(0.950);">-6</b>
<i style="left:1467.45px;top:1797.2px;width:13.3px;height:1.3px;background:#1d4763;"></i>
<b class="tr f115" style="left:1460.65px;top:1812px;color:#cfd1d4;font-weight:700;transform:scaleX(0.950);">-12</b>
<i style="left:1467.45px;top:1817.2px;width:13.3px;height:1.3px;background:#1d4763;"></i>
<b class="tr f115" style="left:1460.65px;top:1836px;color:#cfd1d4;font-weight:700;transform:scaleX(0.950);">-24</b>
<i style="left:1467.45px;top:1841.2px;width:13.3px;height:1.3px;background:#1d4763;"></i>
<b class="tr f115" style="left:1460.65px;top:1860px;color:#cfd1d4;font-weight:700;transform:scaleX(0.950);">-36</b>
<i style="left:1467.45px;top:1865.2px;width:13.3px;height:1.3px;background:#1d4763;"></i>
<b class="tr f115" style="left:1460.65px;top:1875px;color:#cfd1d4;font-weight:700;transform:scaleX(0.950);">-48</b>
<i style="left:1467.45px;top:1880.2px;width:13.3px;height:1.3px;background:#1d4763;"></i>
<i style="left:1467.45px;top:1892.2px;width:13.3px;height:1.3px;background:#1d4763;"></i>
<i style="left:1467.15px;top:1900.5px;width:6px;height:2px;background:#4aa3e0;"></i>
<i style="left:1475.15px;top:1900.5px;width:6px;height:2px;background:#4aa3e0;"></i>
<i style="left:1529.05px;top:1714px;width:16px;height:5px;background:#6ec3f4;"></i>
<i style="left:1529.05px;top:1720px;width:16px;height:5px;background:#6ec3f4;"></i>
<i style="left:1529.05px;top:1726px;width:16px;height:5px;background:#5d6168;"></i>
<i style="left:1489.85px;top:1797.5px;width:21px;height:107.3px;background:#6e747b;"></i>
<i style="left:1490.95px;top:1809px;width:18px;height:1.2px;background:#8d9399;"></i>
<i style="left:1490.95px;top:1827.2px;width:18px;height:1.2px;background:#8d9399;"></i>
<i style="left:1490.95px;top:1846.6px;width:18px;height:1.2px;background:#8d9399;"></i>
<i style="left:1490.95px;top:1858.4px;width:18px;height:1.2px;background:#8d9399;"></i>
<i style="left:1490.95px;top:1869px;width:18px;height:1.2px;background:#8d9399;"></i>
<i style="left:1498.95px;top:1738.5px;width:2.8px;height:141px;background:#1c1e21;"></i>
<i style="left:1488.65px;top:1748.8px;width:24.3px;height:52.6px;background:;background:linear-gradient(180deg,#fafafa 0,#f0f0f0 6%,#8c8c8c 9%,#a9a9a9 14%,#d6d6d6 24%,#fff 36%,#fff 48.500%,#2a2a2a 48.500%,#2a2a2a 51.500%,#fff 51.500%,#fff 86%,#d4d4d4 93%,#8a8a8a 100%);border-radius:4.500px;box-shadow:inset 2.500px 0 2px rgba(0,0,0,.32),inset -2.500px 0 2px rgba(0,0,0,.32),0 0 0 1.300px #34373c,0 2px 3px 1px rgba(0,0,0,.35)"></i>
<svg class="u" style="left:1527.05px;top:1874.8px;width:20px;height:20px;"><use href="#knob"/></svg>
<b class="tc f160" style="left:1463.16px;top:1915px;color:#f0f0f0;font-weight:700;transform:scaleX(0.970);">8</b>
<svg class="u" style="left:1524.05px;top:1915px;width:26px;height:16px;color:#bcbfc3;"><use href="#kb"/></svg>
<i style="left:1447.85px;top:1940px;width:106.5px;height:22.6px;background:#26282c;border-radius:1.500px"></i>
<b class="tc f150" style="left:1500.84px;top:1942px;color:#8b8e94;transform:scaleX(1.043);">Auto: Off</b>
<i style="left:1439.85px;top:1972px;width:121.3px;height:21.3px;background:#2d3035;"></i>
<b class="tc f170" style="left:1500.83px;top:1974px;color:#fff;">Kt. Rooms</b>
<i style="left:1564.4px;top:852.8px;width:121.3px;height:539.6px;background:#50555d;"></i>
<i style="left:1564.4px;top:852.8px;width:121.3px;height:4.3px;background:#3c5068;"></i>
<i style="left:1564.4px;top:859.8px;width:121.3px;height:29.8px;background:#484c53;"></i>
<svg class="u" style="left:1569.4px;top:867.5px;width:16.4px;height:15.4px;color:#2f9ef0;"><use href="#pw"/></svg>
<b class="t f175" style="left:1591.2px;top:865px;color:#ececec;transform:scaleX(0.950);">Inserts</b>
<svg class="u" style="left:1648.9px;top:870.8px;width:12px;height:7px;color:#8a8e94;"><use href="#td"/></svg>
<svg class="u" style="left:1667.7px;top:867.8px;width:12.5px;height:12.5px;color:#8a8e94;"><use href="#pl"/></svg>
<i style="left:1564.4px;top:890.3px;width:121.3px;height:29.3px;background:#5f646b;"></i>
<svg class="u" style="left:1570.1px;top:899.1px;width:14.9px;height:14px;color:#74c8fb;"><use href="#pw"/></svg>
<svg class="u" style="left:1666.2px;top:901.8px;width:12px;height:7px;color:#6f747b;"><use href="#td"/></svg>
<b class="t f155" style="left:1589.2px;top:897px;color:#ececec;transform:scaleX(0.954);">Pro EQ</b>
<i style="left:1562.9px;top:1392.4px;width:124.3px;height:2.8px;background:#1d1f22;"></i>
<i style="left:1564.4px;top:1395.2px;width:121.3px;height:116.5px;background:#50555d;"></i>
<svg class="u" style="left:1569.4px;top:1401.6px;width:16.4px;height:15.4px;color:#70747b;"><use href="#pw"/></svg>
<b class="t f175" style="left:1590.9px;top:1400px;color:#ececec;transform:scaleX(0.949);">Sends</b>
<svg class="u" style="left:1667.7px;top:1402.5px;width:12.5px;height:12.5px;color:#8a8e94;"><use href="#pl"/></svg>
<i style="left:1562.9px;top:1511.7px;width:124.3px;height:3px;background:#1d1f22;"></i>
<i style="left:1564.4px;top:1514.7px;width:121.3px;height:457px;background:#50555d;"></i>
<i style="left:1564.4px;top:1515.3px;width:121.3px;height:3.5px;background:#3c5068;"></i>
<i style="left:1571.9px;top:1528px;width:108px;height:77.8px;background:#2a2d31;border-radius:3px;box-shadow:0 0 0 1.200px #3a3d43,0 1px 3px 1px rgba(0,0,0,.3)"></i>
<i style="left:1571.9px;top:1528px;width:108px;height:26.2px;background:#595d63;border-radius:3px 3px 0 0"></i>
<i style="left:1571.9px;top:1554.2px;width:108px;height:25.4px;background:#4c5056;"></i>
<b class="tc f165" style="left:1625.41px;top:1533px;color:#f0c864;transform:scaleX(1.006);">Impact XT</b>
<b class="tc f165" style="left:1625.41px;top:1558px;color:#f0c864;transform:scaleX(1.029);">Drum Group</b>
<i style="left:1623.7px;top:1581px;width:4px;height:24px;background:#3fa0e6;"></i>
<i style="left:1624.7px;top:1607px;width:1px;height:22px;background:#3f4349;"></i>
<b class="tc f165" style="left:1598.19px;top:1612px;color:#f2f2f2;transform:scaleX(1.045);">-18.3</b>
<b class="tc f165" style="left:1652.7px;top:1612px;color:#f2f2f2;transform:scaleX(1.004);">&lt;C&gt;</b>
<i style="left:1575.3px;top:1641px;width:101.8px;height:60.5px;background:#3f434a;border-radius:4.500px;box-shadow:0 0 0 1.500px #1e2024,0 2px 2px 1px rgba(0,0,0,.25);"></i>
<i style="left:1575.3px;top:1670.3px;width:101.8px;height:1.3px;background:#2a2d31;"></i>
<i style="left:1625.8px;top:1670.3px;width:1.3px;height:31px;background:#2a2d31;"></i>
<i style="left:1593.6px;top:1679.8px;width:13.4px;height:13.4px;background:#c9cbce;border-radius:50%"></i>
<svg class="u" style="left:1644.3px;top:1679px;width:13px;height:15px;color:#c9cbce;"><use href="#mono"/></svg>
<i style="left:1625.6px;top:1641px;width:1.3px;height:29.5px;background:#2a2d31;"></i>
<b class="tc f195" style="left:1600.28px;top:1644px;color:#dadada;transform:scaleX(0.950);">M</b>
<b class="tc f195" style="left:1651.32px;top:1644px;color:#dadada;transform:scaleX(0.950);">S</b>
<i style="left:1588.7px;top:1714px;width:19.7px;height:17px;background:#3a3d42;"></i>
<i style="left:1588.7px;top:1731.5px;width:19.7px;height:173.3px;background:#22262b;"></i>
<b class="tr f115" style="left:1585.23px;top:1732px;color:#cfd1d4;font-weight:700;transform:scaleX(0.950);">10</b>
<i style="left:1592px;top:1737.2px;width:13.3px;height:1.3px;background:#1d4763;"></i>
<b class="tr f115" style="left:1585.21px;top:1746px;color:#cfd1d4;font-weight:700;transform:scaleX(0.950);">6</b>
<i style="left:1592px;top:1750.7px;width:13.3px;height:1.3px;background:#1d4763;"></i>
<b class="tr f115" style="left:1585.21px;top:1769px;color:#cfd1d4;font-weight:700;transform:scaleX(0.950);">0</b>
<i style="left:1592px;top:1774.2px;width:13.3px;height:1.3px;background:#7d8084;"></i>
<b class="tr f115" style="left:1585.19px;top:1792px;color:#cfd1d4;font-weight:700;transform:scaleX(0.950);">-6</b>
<i style="left:1592px;top:1797.2px;width:13.3px;height:1.3px;background:#1d4763;"></i>
<b class="tr f115" style="left:1585.2px;top:1812px;color:#cfd1d4;font-weight:700;transform:scaleX(0.950);">-12</b>
<i style="left:1592px;top:1817.2px;width:13.3px;height:1.3px;background:#1d4763;"></i>
<b class="tr f115" style="left:1585.2px;top:1836px;color:#cfd1d4;font-weight:700;transform:scaleX(0.950);">-24</b>
<i style="left:1592px;top:1841.2px;width:13.3px;height:1.3px;background:#1d4763;"></i>
<b class="tr f115" style="left:1585.2px;top:1860px;color:#cfd1d4;font-weight:700;transform:scaleX(0.950);">-36</b>
<i style="left:1592px;top:1865.2px;width:13.3px;height:1.3px;background:#1d4763;"></i>
<b class="tr f115" style="left:1585.2px;top:1875px;color:#cfd1d4;font-weight:700;transform:scaleX(0.950);">-48</b>
<i style="left:1592px;top:1880.2px;width:13.3px;height:1.3px;background:#1d4763;"></i>
<i style="left:1592px;top:1892.2px;width:13.3px;height:1.3px;background:#1d4763;"></i>
<i style="left:1653.6px;top:1714px;width:16px;height:5px;background:#6ec3f4;"></i>
<i style="left:1653.6px;top:1720px;width:16px;height:5px;background:#5d6168;"></i>
<i style="left:1653.6px;top:1726px;width:16px;height:5px;background:#5d6168;"></i>
<i style="left:1614.4px;top:1841px;width:21px;height:63.8px;background:#6e747b;"></i>
<i style="left:1615.5px;top:1846.6px;width:18px;height:1.2px;background:#8d9399;"></i>
<i style="left:1615.5px;top:1858.4px;width:18px;height:1.2px;background:#8d9399;"></i>
<i style="left:1615.5px;top:1869px;width:18px;height:1.2px;background:#8d9399;"></i>
<i style="left:1623.5px;top:1738.5px;width:2.8px;height:141px;background:#1c1e21;"></i>
<i style="left:1616.9px;top:1755px;width:16px;height:1.2px;background:#8a9097;"></i>
<i style="left:1616.9px;top:1774px;width:16px;height:2px;background:#e6e6e6;"></i>
<i style="left:1613.2px;top:1792.3px;width:24.3px;height:52.6px;background:;background:linear-gradient(180deg,#fafafa 0,#f0f0f0 6%,#8c8c8c 9%,#a9a9a9 14%,#d6d6d6 24%,#fff 36%,#fff 48.500%,#2a2a2a 48.500%,#2a2a2a 51.500%,#fff 51.500%,#fff 86%,#d4d4d4 93%,#8a8a8a 100%);border-radius:4.500px;box-shadow:inset 2.500px 0 2px rgba(0,0,0,.32),inset -2.500px 0 2px rgba(0,0,0,.32),0 0 0 1.300px #34373c,0 2px 3px 1px rgba(0,0,0,.35)"></i>
<svg class="u" style="left:1651.6px;top:1874.8px;width:20px;height:20px;"><use href="#knob"/></svg>
<b class="tc f160" style="left:1587.71px;top:1915px;color:#f0f0f0;font-weight:700;transform:scaleX(0.970);">9</b>
<svg class="u" style="left:1648.6px;top:1915px;width:26px;height:16px;color:#bcbfc3;"><use href="#kb"/></svg>
<i style="left:1572.4px;top:1940px;width:106.5px;height:22.6px;background:#26282c;border-radius:1.500px"></i>
<b class="tc f150" style="left:1625.39px;top:1942px;color:#8b8e94;transform:scaleX(1.043);">Auto: Off</b>
<i style="left:1564.4px;top:1972px;width:121.3px;height:21.3px;background:#3c5068;"></i>
<b class="tc f170" style="left:1625.39px;top:1974px;color:#fff;">AggroSna..hots</b>
<i style="left:1688.95px;top:852.8px;width:121.3px;height:539.6px;background:#50555d;"></i>
<i style="left:1688.95px;top:852.8px;width:121.3px;height:4.3px;background:#00e08a;"></i>
<svg class="u" style="left:1693.95px;top:867.5px;width:16.4px;height:15.4px;color:#70747b;"><use href="#pw"/></svg>
<b class="t f175" style="left:1715.75px;top:865px;color:#ececec;transform:scaleX(0.950);">Inserts</b>
<svg class="u" style="left:1773.45px;top:870.8px;width:12px;height:7px;color:#8a8e94;"><use href="#td"/></svg>
<svg class="u" style="left:1792.25px;top:867.8px;width:12.5px;height:12.5px;color:#8a8e94;"><use href="#pl"/></svg>
<i style="left:1687.45px;top:1392.4px;width:124.3px;height:2.8px;background:#1d1f22;"></i>
<i style="left:1688.95px;top:1395.2px;width:121.3px;height:116.5px;background:#50555d;"></i>
<svg class="u" style="left:1693.95px;top:1401.6px;width:16.4px;height:15.4px;color:#70747b;"><use href="#pw"/></svg>
<b class="t f175" style="left:1715.45px;top:1400px;color:#ececec;transform:scaleX(0.949);">Sends</b>
<svg class="u" style="left:1792.25px;top:1402.5px;width:12.5px;height:12.5px;color:#8a8e94;"><use href="#pl"/></svg>
<i style="left:1687.45px;top:1511.7px;width:124.3px;height:3px;background:#1d1f22;"></i>
<i style="left:1688.95px;top:1514.7px;width:121.3px;height:457px;background:#50555d;"></i>
<i style="left:1688.95px;top:1515.3px;width:121.3px;height:3.5px;background:#00e08a;"></i>
<i style="left:1696.45px;top:1528px;width:108px;height:77.8px;background:#2a2d31;border-radius:3px;box-shadow:0 0 0 1.200px #3a3d43,0 1px 3px 1px rgba(0,0,0,.3)"></i>
<i style="left:1696.45px;top:1528px;width:108px;height:26.2px;background:#595d63;border-radius:3px 3px 0 0"></i>
<i style="left:1696.45px;top:1554.2px;width:108px;height:25.4px;background:#4c5056;"></i>
<b class="tc f165" style="left:1749.95px;top:1533px;color:#ececec;transform:scaleX(1.009);">Eingang L+R</b>
<b class="tc f165" style="left:1749.93px;top:1558px;color:#ececec;transform:scaleX(1.011);">Main</b>
<i style="left:1748.25px;top:1581px;width:4px;height:24px;background:#3fa0e6;"></i>
<i style="left:1749.25px;top:1607px;width:1px;height:22px;background:#3f4349;"></i>
<b class="tc f165" style="left:1722.73px;top:1612px;color:#f2f2f2;transform:scaleX(1.036);">-2.0</b>
<b class="tc f165" style="left:1777.25px;top:1612px;color:#f2f2f2;transform:scaleX(1.004);">&lt;C&gt;</b>
<i style="left:1699.85px;top:1641px;width:101.8px;height:60.5px;background:#3f434a;border-radius:4.500px;box-shadow:0 0 0 1.500px #1e2024,0 2px 2px 1px rgba(0,0,0,.25);"></i>
<i style="left:1699.85px;top:1670.3px;width:101.8px;height:1.3px;background:#2a2d31;"></i>
<i style="left:1750.35px;top:1670.3px;width:1.3px;height:31px;background:#2a2d31;"></i>
<i style="left:1718.15px;top:1679.8px;width:13.4px;height:13.4px;background:#c9cbce;border-radius:50%"></i>
<svg class="u" style="left:1768.85px;top:1679px;width:13px;height:15px;color:#c9cbce;"><use href="#mono"/></svg>
<i style="left:1750.15px;top:1641px;width:1.3px;height:29.5px;background:#2a2d31;"></i>
<b class="tc f195" style="left:1724.83px;top:1644px;color:#dadada;transform:scaleX(0.950);">M</b>
<b class="tc f195" style="left:1775.87px;top:1644px;color:#dadada;transform:scaleX(0.950);">S</b>
<i style="left:1713.25px;top:1714px;width:19.7px;height:17px;background:#3a3d42;"></i>
<i style="left:1713.25px;top:1731.5px;width:19.7px;height:173.3px;background:#22262b;"></i>
<svg class="u" style="left:1717.25px;top:1717.5px;width:12px;height:10.5px;color:#e0e0e0;"><use href="#ppl"/></svg>
<b class="tr f115" style="left:1709.78px;top:1732px;color:#cfd1d4;font-weight:700;transform:scaleX(0.950);">10</b>
<i style="left:1716.55px;top:1737.2px;width:13.3px;height:1.3px;background:#1d4763;"></i>
<b class="tr f115" style="left:1709.76px;top:1746px;color:#cfd1d4;font-weight:700;transform:scaleX(0.950);">6</b>
<i style="left:1716.55px;top:1750.7px;width:13.3px;height:1.3px;background:#1d4763;"></i>
<b class="tr f115" style="left:1709.76px;top:1769px;color:#cfd1d4;font-weight:700;transform:scaleX(0.950);">0</b>
<i style="left:1716.55px;top:1774.2px;width:13.3px;height:1.3px;background:#7d8084;"></i>
<b class="tr f115" style="left:1709.74px;top:1792px;color:#cfd1d4;font-weight:700;transform:scaleX(0.950);">-6</b>
<i style="left:1716.55px;top:1797.2px;width:13.3px;height:1.3px;background:#1d4763;"></i>
<b class="tr f115" style="left:1709.75px;top:1812px;color:#cfd1d4;font-weight:700;transform:scaleX(0.950);">-12</b>
<i style="left:1716.55px;top:1817.2px;width:13.3px;height:1.3px;background:#1d4763;"></i>
<b class="tr f115" style="left:1709.75px;top:1836px;color:#cfd1d4;font-weight:700;transform:scaleX(0.950);">-24</b>
<i style="left:1716.55px;top:1841.2px;width:13.3px;height:1.3px;background:#1d4763;"></i>
<b class="tr f115" style="left:1709.75px;top:1860px;color:#cfd1d4;font-weight:700;transform:scaleX(0.950);">-36</b>
<i style="left:1716.55px;top:1865.2px;width:13.3px;height:1.3px;background:#1d4763;"></i>
<b class="tr f115" style="left:1709.75px;top:1875px;color:#cfd1d4;font-weight:700;transform:scaleX(0.950);">-48</b>
<i style="left:1716.55px;top:1880.2px;width:13.3px;height:1.3px;background:#1d4763;"></i>
<i style="left:1716.55px;top:1892.2px;width:13.3px;height:1.3px;background:#1d4763;"></i>
<i style="left:1778.15px;top:1714px;width:16px;height:5px;background:#5d6168;"></i>
<i style="left:1778.15px;top:1720px;width:16px;height:5px;background:#5d6168;"></i>
<i style="left:1778.15px;top:1726px;width:16px;height:5px;background:#5d6168;"></i>
<i style="left:1738.95px;top:1804.5px;width:21px;height:100.3px;background:#6e747b;"></i>
<i style="left:1740.05px;top:1827.2px;width:18px;height:1.2px;background:#8d9399;"></i>
<i style="left:1740.05px;top:1846.6px;width:18px;height:1.2px;background:#8d9399;"></i>
<i style="left:1740.05px;top:1858.4px;width:18px;height:1.2px;background:#8d9399;"></i>
<i style="left:1740.05px;top:1869px;width:18px;height:1.2px;background:#8d9399;"></i>
<i style="left:1748.05px;top:1738.5px;width:2.8px;height:141px;background:#1c1e21;"></i>
<i style="left:1737.75px;top:1755.8px;width:24.3px;height:52.6px;background:;background:linear-gradient(180deg,#fafafa 0,#f0f0f0 6%,#8c8c8c 9%,#a9a9a9 14%,#d6d6d6 24%,#fff 36%,#fff 48.500%,#2a2a2a 48.500%,#2a2a2a 51.500%,#fff 51.500%,#fff 86%,#d4d4d4 93%,#8a8a8a 100%);border-radius:4.500px;box-shadow:inset 2.500px 0 2px rgba(0,0,0,.32),inset -2.500px 0 2px rgba(0,0,0,.32),0 0 0 1.300px #34373c,0 2px 3px 1px rgba(0,0,0,.35)"></i>
<svg class="u" style="left:1776.15px;top:1874.8px;width:20px;height:20px;"><use href="#knob"/></svg>
<b class="tc f160" style="left:1712.27px;top:1915px;color:#f0f0f0;font-weight:700;transform:scaleX(0.970);">10</b>
<svg class="u" style="left:1774.35px;top:1912.4px;width:23.8px;height:19.4px;color:#bcbfc3;"><use href="#wv"/></svg>
<i style="left:1696.95px;top:1940px;width:106.5px;height:22.6px;background:#26282c;border-radius:1.500px"></i>
<b class="tc f150" style="left:1749.94px;top:1942px;color:#8b8e94;transform:scaleX(1.043);">Auto: Off</b>
<i style="left:1688.95px;top:1972px;width:121.3px;height:21.3px;background:#00e08a;"></i>
<b class="tc f170" style="left:1749.94px;top:1974px;color:#1c1f23;transform:scaleX(0.988);">02 Bass</b>
<i style="left:1813.5px;top:852.8px;width:121.3px;height:539.6px;background:#50555d;"></i>
<i style="left:1813.5px;top:852.8px;width:121.3px;height:4.3px;background:#62d655;"></i>
<svg class="u" style="left:1818.5px;top:867.5px;width:16.4px;height:15.4px;color:#70747b;"><use href="#pw"/></svg>
<b class="t f175" style="left:1840.3px;top:865px;color:#ececec;transform:scaleX(0.950);">Inserts</b>
<svg class="u" style="left:1898px;top:870.8px;width:12px;height:7px;color:#8a8e94;"><use href="#td"/></svg>
<svg class="u" style="left:1916.8px;top:867.8px;width:12.5px;height:12.5px;color:#8a8e94;"><use href="#pl"/></svg>
<i style="left:1812px;top:1392.4px;width:124.3px;height:2.8px;background:#1d1f22;"></i>
<i style="left:1813.5px;top:1395.2px;width:121.3px;height:116.5px;background:#50555d;"></i>
<svg class="u" style="left:1818.5px;top:1401.6px;width:16.4px;height:15.4px;color:#70747b;"><use href="#pw"/></svg>
<b class="t f175" style="left:1840px;top:1400px;color:#ececec;transform:scaleX(0.949);">Sends</b>
<svg class="u" style="left:1916.8px;top:1402.5px;width:12.5px;height:12.5px;color:#8a8e94;"><use href="#pl"/></svg>
<i style="left:1812px;top:1511.7px;width:124.3px;height:3px;background:#1d1f22;"></i>
<i style="left:1813.5px;top:1514.7px;width:121.3px;height:457px;background:#50555d;"></i>
<i style="left:1813.5px;top:1515.3px;width:121.3px;height:3.5px;background:#62d655;"></i>
<i style="left:1821px;top:1528px;width:108px;height:77.8px;background:#2a2d31;border-radius:3px;box-shadow:0 0 0 1.200px #3a3d43,0 1px 3px 1px rgba(0,0,0,.3)"></i>
<i style="left:1821px;top:1528px;width:108px;height:26.2px;background:#595d63;border-radius:3px 3px 0 0"></i>
<i style="left:1821px;top:1554.2px;width:108px;height:25.4px;background:#4c5056;"></i>
<b class="tc f165" style="left:1874.5px;top:1533px;color:#ececec;transform:scaleX(1.009);">Eingang L+R</b>
<b class="tc f165" style="left:1874.48px;top:1558px;color:#ececec;transform:scaleX(1.011);">Main</b>
<i style="left:1872.8px;top:1581px;width:4px;height:24px;background:#3fa0e6;"></i>
<i style="left:1873.8px;top:1607px;width:1px;height:22px;background:#3f4349;"></i>
<b class="tc f165" style="left:1847.28px;top:1612px;color:#f2f2f2;transform:scaleX(1.036);">-2.0</b>
<b class="tc f165" style="left:1901.8px;top:1612px;color:#f2f2f2;transform:scaleX(1.004);">&lt;C&gt;</b>
<i style="left:1824.4px;top:1641px;width:101.8px;height:60.5px;background:#3f434a;border-radius:4.500px;box-shadow:0 0 0 1.500px #1e2024,0 2px 2px 1px rgba(0,0,0,.25);"></i>
<i style="left:1824.4px;top:1670.3px;width:101.8px;height:1.3px;background:#2a2d31;"></i>
<i style="left:1874.9px;top:1670.3px;width:1.3px;height:31px;background:#2a2d31;"></i>
<i style="left:1842.7px;top:1679.8px;width:13.4px;height:13.4px;background:#c9cbce;border-radius:50%"></i>
<svg class="u" style="left:1893.4px;top:1679px;width:13px;height:15px;color:#c9cbce;"><use href="#mono"/></svg>
<i style="left:1874.7px;top:1641px;width:1.3px;height:29.5px;background:#2a2d31;"></i>
<b class="tc f195" style="left:1849.38px;top:1644px;color:#dadada;transform:scaleX(0.950);">M</b>
<b class="tc f195" style="left:1900.42px;top:1644px;color:#dadada;transform:scaleX(0.950);">S</b>
<i style="left:1837.8px;top:1714px;width:19.7px;height:17px;background:#3a3d42;"></i>
<i style="left:1837.8px;top:1731.5px;width:19.7px;height:173.3px;background:#22262b;"></i>
<svg class="u" style="left:1841.8px;top:1717.5px;width:12px;height:10.5px;color:#e0e0e0;"><use href="#ppl"/></svg>
<b class="tr f115" style="left:1834.33px;top:1732px;color:#cfd1d4;font-weight:700;transform:scaleX(0.950);">10</b>
<i style="left:1841.1px;top:1737.2px;width:13.3px;height:1.3px;background:#1d4763;"></i>
<b class="tr f115" style="left:1834.31px;top:1746px;color:#cfd1d4;font-weight:700;transform:scaleX(0.950);">6</b>
<i style="left:1841.1px;top:1750.7px;width:13.3px;height:1.3px;background:#1d4763;"></i>
<b class="tr f115" style="left:1834.31px;top:1769px;color:#cfd1d4;font-weight:700;transform:scaleX(0.950);">0</b>
<i style="left:1841.1px;top:1774.2px;width:13.3px;height:1.3px;background:#7d8084;"></i>
<b class="tr f115" style="left:1834.29px;top:1792px;color:#cfd1d4;font-weight:700;transform:scaleX(0.950);">-6</b>
<i style="left:1841.1px;top:1797.2px;width:13.3px;height:1.3px;background:#1d4763;"></i>
<b class="tr f115" style="left:1834.3px;top:1812px;color:#cfd1d4;font-weight:700;transform:scaleX(0.950);">-12</b>
<i style="left:1841.1px;top:1817.2px;width:13.3px;height:1.3px;background:#1d4763;"></i>
<b class="tr f115" style="left:1834.3px;top:1836px;color:#cfd1d4;font-weight:700;transform:scaleX(0.950);">-24</b>
<i style="left:1841.1px;top:1841.2px;width:13.3px;height:1.3px;background:#1d4763;"></i>
<b class="tr f115" style="left:1834.3px;top:1860px;color:#cfd1d4;font-weight:700;transform:scaleX(0.950);">-36</b>
<i style="left:1841.1px;top:1865.2px;width:13.3px;height:1.3px;background:#1d4763;"></i>
<b class="tr f115" style="left:1834.3px;top:1875px;color:#cfd1d4;font-weight:700;transform:scaleX(0.950);">-48</b>
<i style="left:1841.1px;top:1880.2px;width:13.3px;height:1.3px;background:#1d4763;"></i>
<i style="left:1841.1px;top:1892.2px;width:13.3px;height:1.3px;background:#1d4763;"></i>
<i style="left:1902.7px;top:1714px;width:16px;height:5px;background:#5d6168;"></i>
<i style="left:1902.7px;top:1720px;width:16px;height:5px;background:#5d6168;"></i>
<i style="left:1902.7px;top:1726px;width:16px;height:5px;background:#5d6168;"></i>
<i style="left:1863.5px;top:1804.5px;width:21px;height:100.3px;background:#6e747b;"></i>
<i style="left:1864.6px;top:1827.2px;width:18px;height:1.2px;background:#8d9399;"></i>
<i style="left:1864.6px;top:1846.6px;width:18px;height:1.2px;background:#8d9399;"></i>
<i style="left:1864.6px;top:1858.4px;width:18px;height:1.2px;background:#8d9399;"></i>
<i style="left:1864.6px;top:1869px;width:18px;height:1.2px;background:#8d9399;"></i>
<i style="left:1872.6px;top:1738.5px;width:2.8px;height:141px;background:#1c1e21;"></i>
<i style="left:1862.3px;top:1755.8px;width:24.3px;height:52.6px;background:;background:linear-gradient(180deg,#fafafa 0,#f0f0f0 6%,#8c8c8c 9%,#a9a9a9 14%,#d6d6d6 24%,#fff 36%,#fff 48.500%,#2a2a2a 48.500%,#2a2a2a 51.500%,#fff 51.500%,#fff 86%,#d4d4d4 93%,#8a8a8a 100%);border-radius:4.500px;box-shadow:inset 2.500px 0 2px rgba(0,0,0,.32),inset -2.500px 0 2px rgba(0,0,0,.32),0 0 0 1.300px #34373c,0 2px 3px 1px rgba(0,0,0,.35)"></i>
<svg class="u" style="left:1900.7px;top:1874.8px;width:20px;height:20px;"><use href="#knob"/></svg>
<b class="tc f160" style="left:1836.82px;top:1915px;color:#f0f0f0;font-weight:700;transform:scaleX(0.970);">11</b>
<svg class="u" style="left:1898.9px;top:1912.4px;width:23.8px;height:19.4px;color:#bcbfc3;"><use href="#wv"/></svg>
<i style="left:1821.5px;top:1940px;width:106.5px;height:22.6px;background:#26282c;border-radius:1.500px"></i>
<b class="tc f150" style="left:1874.49px;top:1942px;color:#8b8e94;transform:scaleX(1.043);">Auto: Off</b>
<i style="left:1813.5px;top:1972px;width:121.3px;height:21.3px;background:#62d655;"></i>
<b class="tc f170" style="left:1874.5px;top:1974px;color:#1c1f23;transform:scaleX(0.993);">03Rhythm..tars</b>
<i style="left:1938.05px;top:852.8px;width:121.3px;height:539.6px;background:#50555d;"></i>
<i style="left:1938.05px;top:852.8px;width:121.3px;height:4.3px;background:#6ab23c;"></i>
<svg class="u" style="left:1943.05px;top:867.5px;width:16.4px;height:15.4px;color:#70747b;"><use href="#pw"/></svg>
<b class="t f175" style="left:1964.85px;top:865px;color:#ececec;transform:scaleX(0.950);">Inserts</b>
<svg class="u" style="left:2022.55px;top:870.8px;width:12px;height:7px;color:#8a8e94;"><use href="#td"/></svg>
<svg class="u" style="left:2041.35px;top:867.8px;width:12.5px;height:12.5px;color:#8a8e94;"><use href="#pl"/></svg>
<i style="left:1936.55px;top:1392.4px;width:124.3px;height:2.8px;background:#1d1f22;"></i>
<i style="left:1938.05px;top:1395.2px;width:121.3px;height:116.5px;background:#50555d;"></i>
<svg class="u" style="left:1943.05px;top:1401.6px;width:16.4px;height:15.4px;color:#70747b;"><use href="#pw"/></svg>
<b class="t f175" style="left:1964.55px;top:1400px;color:#ececec;transform:scaleX(0.949);">Sends</b>
<svg class="u" style="left:2041.35px;top:1402.5px;width:12.5px;height:12.5px;color:#8a8e94;"><use href="#pl"/></svg>
<i style="left:1936.55px;top:1511.7px;width:124.3px;height:3px;background:#1d1f22;"></i>
<i style="left:1938.05px;top:1514.7px;width:121.3px;height:457px;background:#50555d;"></i>
<i style="left:1938.05px;top:1515.3px;width:121.3px;height:3.5px;background:#6ab23c;"></i>
<i style="left:1945.55px;top:1528px;width:108px;height:77.8px;background:#2a2d31;border-radius:3px;box-shadow:0 0 0 1.200px #3a3d43,0 1px 3px 1px rgba(0,0,0,.3)"></i>
<i style="left:1945.55px;top:1528px;width:108px;height:26.2px;background:#595d63;border-radius:3px 3px 0 0"></i>
<i style="left:1945.55px;top:1554.2px;width:108px;height:25.4px;background:#4c5056;"></i>
<b class="tc f165" style="left:1999.05px;top:1533px;color:#ececec;transform:scaleX(1.009);">Eingang L+R</b>
<b class="tc f165" style="left:1999.03px;top:1558px;color:#ececec;transform:scaleX(1.011);">Main</b>
<i style="left:1997.35px;top:1581px;width:4px;height:24px;background:#3fa0e6;"></i>
<i style="left:1998.35px;top:1607px;width:1px;height:22px;background:#3f4349;"></i>
<b class="tc f165" style="left:1971.83px;top:1612px;color:#f2f2f2;transform:scaleX(1.036);">-2.0</b>
<b class="tc f165" style="left:2026.35px;top:1612px;color:#f2f2f2;transform:scaleX(1.004);">&lt;C&gt;</b>
<i style="left:1948.95px;top:1641px;width:101.8px;height:60.5px;background:#3f434a;border-radius:4.500px;box-shadow:0 0 0 1.500px #1e2024,0 2px 2px 1px rgba(0,0,0,.25);"></i>
<i style="left:1948.95px;top:1670.3px;width:101.8px;height:1.3px;background:#2a2d31;"></i>
<i style="left:1999.45px;top:1670.3px;width:1.3px;height:31px;background:#2a2d31;"></i>
<i style="left:1967.25px;top:1679.8px;width:13.4px;height:13.4px;background:#c9cbce;border-radius:50%"></i>
<svg class="u" style="left:2017.95px;top:1679px;width:13px;height:15px;color:#c9cbce;"><use href="#mono"/></svg>
<i style="left:1999.25px;top:1641px;width:1.3px;height:29.5px;background:#2a2d31;"></i>
<b class="tc f195" style="left:1973.93px;top:1644px;color:#dadada;transform:scaleX(0.950);">M</b>
<b class="tc f195" style="left:2024.97px;top:1644px;color:#dadada;transform:scaleX(0.950);">S</b>
<i style="left:1962.35px;top:1714px;width:19.7px;height:17px;background:#3a3d42;"></i>
<i style="left:1962.35px;top:1731.5px;width:19.7px;height:173.3px;background:#22262b;"></i>
<svg class="u" style="left:1966.35px;top:1717.5px;width:12px;height:10.5px;color:#e0e0e0;"><use href="#ppl"/></svg>
<b class="tr f115" style="left:1958.88px;top:1732px;color:#cfd1d4;font-weight:700;transform:scaleX(0.950);">10</b>
<i style="left:1965.65px;top:1737.2px;width:13.3px;height:1.3px;background:#1d4763;"></i>
<b class="tr f115" style="left:1958.86px;top:1746px;color:#cfd1d4;font-weight:700;transform:scaleX(0.950);">6</b>
<i style="left:1965.65px;top:1750.7px;width:13.3px;height:1.3px;background:#1d4763;"></i>
<b class="tr f115" style="left:1958.86px;top:1769px;color:#cfd1d4;font-weight:700;transform:scaleX(0.950);">0</b>
<i style="left:1965.65px;top:1774.2px;width:13.3px;height:1.3px;background:#7d8084;"></i>
<b class="tr f115" style="left:1958.84px;top:1792px;color:#cfd1d4;font-weight:700;transform:scaleX(0.950);">-6</b>
<i style="left:1965.65px;top:1797.2px;width:13.3px;height:1.3px;background:#1d4763;"></i>
<b class="tr f115" style="left:1958.85px;top:1812px;color:#cfd1d4;font-weight:700;transform:scaleX(0.950);">-12</b>
<i style="left:1965.65px;top:1817.2px;width:13.3px;height:1.3px;background:#1d4763;"></i>
<b class="tr f115" style="left:1958.85px;top:1836px;color:#cfd1d4;font-weight:700;transform:scaleX(0.950);">-24</b>
<i style="left:1965.65px;top:1841.2px;width:13.3px;height:1.3px;background:#1d4763;"></i>
<b class="tr f115" style="left:1958.85px;top:1860px;color:#cfd1d4;font-weight:700;transform:scaleX(0.950);">-36</b>
<i style="left:1965.65px;top:1865.2px;width:13.3px;height:1.3px;background:#1d4763;"></i>
<b class="tr f115" style="left:1958.85px;top:1875px;color:#cfd1d4;font-weight:700;transform:scaleX(0.950);">-48</b>
<i style="left:1965.65px;top:1880.2px;width:13.3px;height:1.3px;background:#1d4763;"></i>
<i style="left:1965.65px;top:1892.2px;width:13.3px;height:1.3px;background:#1d4763;"></i>
<i style="left:2027.25px;top:1714px;width:16px;height:5px;background:#5d6168;"></i>
<i style="left:2027.25px;top:1720px;width:16px;height:5px;background:#5d6168;"></i>
<i style="left:2027.25px;top:1726px;width:16px;height:5px;background:#5d6168;"></i>
<i style="left:1988.05px;top:1804.5px;width:21px;height:100.3px;background:#6e747b;"></i>
<i style="left:1989.15px;top:1827.2px;width:18px;height:1.2px;background:#8d9399;"></i>
<i style="left:1989.15px;top:1846.6px;width:18px;height:1.2px;background:#8d9399;"></i>
<i style="left:1989.15px;top:1858.4px;width:18px;height:1.2px;background:#8d9399;"></i>
<i style="left:1989.15px;top:1869px;width:18px;height:1.2px;background:#8d9399;"></i>
<i style="left:1997.15px;top:1738.5px;width:2.8px;height:141px;background:#1c1e21;"></i>
<i style="left:1986.85px;top:1755.8px;width:24.3px;height:52.6px;background:;background:linear-gradient(180deg,#fafafa 0,#f0f0f0 6%,#8c8c8c 9%,#a9a9a9 14%,#d6d6d6 24%,#fff 36%,#fff 48.500%,#2a2a2a 48.500%,#2a2a2a 51.500%,#fff 51.500%,#fff 86%,#d4d4d4 93%,#8a8a8a 100%);border-radius:4.500px;box-shadow:inset 2.500px 0 2px rgba(0,0,0,.32),inset -2.500px 0 2px rgba(0,0,0,.32),0 0 0 1.300px #34373c,0 2px 3px 1px rgba(0,0,0,.35)"></i>
<svg class="u" style="left:2025.25px;top:1874.8px;width:20px;height:20px;"><use href="#knob"/></svg>
<b class="tc f160" style="left:1961.37px;top:1915px;color:#f0f0f0;font-weight:700;transform:scaleX(0.970);">12</b>
<svg class="u" style="left:2023.45px;top:1912.4px;width:23.8px;height:19.4px;color:#bcbfc3;"><use href="#wv"/></svg>
<i style="left:1946.05px;top:1940px;width:106.5px;height:22.6px;background:#26282c;border-radius:1.500px"></i>
<b class="tc f150" style="left:1999.04px;top:1942px;color:#8b8e94;transform:scaleX(1.043);">Auto: Off</b>
<i style="left:1938.05px;top:1972px;width:121.3px;height:21.3px;background:#6ab23c;"></i>
<b class="tc f170" style="left:1999.06px;top:1974px;color:#1c1f23;transform:scaleX(1.003);">04 Lofi Intro</b>
<i style="left:2062.6px;top:852.8px;width:121.3px;height:539.6px;background:#50555d;"></i>
<i style="left:2062.6px;top:852.8px;width:121.3px;height:4.3px;background:#5fae63;"></i>
<svg class="u" style="left:2067.6px;top:867.5px;width:16.4px;height:15.4px;color:#70747b;"><use href="#pw"/></svg>
<b class="t f175" style="left:2089.4px;top:865px;color:#ececec;transform:scaleX(0.950);">Inserts</b>
<svg class="u" style="left:2147.1px;top:870.8px;width:12px;height:7px;color:#8a8e94;"><use href="#td"/></svg>
<svg class="u" style="left:2165.9px;top:867.8px;width:12.5px;height:12.5px;color:#8a8e94;"><use href="#pl"/></svg>
<i style="left:2061.1px;top:1392.4px;width:124.3px;height:2.8px;background:#1d1f22;"></i>
<i style="left:2062.6px;top:1395.2px;width:121.3px;height:116.5px;background:#50555d;"></i>
<svg class="u" style="left:2067.6px;top:1401.6px;width:16.4px;height:15.4px;color:#70747b;"><use href="#pw"/></svg>
<b class="t f175" style="left:2089.1px;top:1400px;color:#ececec;transform:scaleX(0.949);">Sends</b>
<svg class="u" style="left:2165.9px;top:1402.5px;width:12.5px;height:12.5px;color:#8a8e94;"><use href="#pl"/></svg>
<i style="left:2061.1px;top:1511.7px;width:124.3px;height:3px;background:#1d1f22;"></i>
<i style="left:2062.6px;top:1514.7px;width:121.3px;height:457px;background:#50555d;"></i>
<i style="left:2062.6px;top:1515.3px;width:121.3px;height:3.5px;background:#5fae63;"></i>
<i style="left:2070.1px;top:1528px;width:108px;height:77.8px;background:#2a2d31;border-radius:3px;box-shadow:0 0 0 1.200px #3a3d43,0 1px 3px 1px rgba(0,0,0,.3)"></i>
<i style="left:2070.1px;top:1528px;width:108px;height:26.2px;background:#595d63;border-radius:3px 3px 0 0"></i>
<i style="left:2070.1px;top:1554.2px;width:108px;height:25.4px;background:#4c5056;"></i>
<b class="tc f165" style="left:2123.6px;top:1533px;color:#ececec;transform:scaleX(1.009);">Eingang L+R</b>
<b class="tc f165" style="left:2123.58px;top:1558px;color:#ececec;transform:scaleX(1.011);">Main</b>
<i style="left:2121.9px;top:1581px;width:4px;height:24px;background:#3fa0e6;"></i>
<i style="left:2122.9px;top:1607px;width:1px;height:22px;background:#3f4349;"></i>
<b class="tc f165" style="left:2096.38px;top:1612px;color:#f2f2f2;transform:scaleX(1.036);">-2.0</b>
<b class="tc f165" style="left:2150.9px;top:1612px;color:#f2f2f2;transform:scaleX(1.004);">&lt;C&gt;</b>
<i style="left:2073.5px;top:1641px;width:101.8px;height:60.5px;background:#3f434a;border-radius:4.500px;box-shadow:0 0 0 1.500px #1e2024,0 2px 2px 1px rgba(0,0,0,.25);"></i>
<i style="left:2073.5px;top:1670.3px;width:101.8px;height:1.3px;background:#2a2d31;"></i>
<i style="left:2124px;top:1670.3px;width:1.3px;height:31px;background:#2a2d31;"></i>
<i style="left:2091.8px;top:1679.8px;width:13.4px;height:13.4px;background:#c9cbce;border-radius:50%"></i>
<svg class="u" style="left:2142.5px;top:1679px;width:13px;height:15px;color:#c9cbce;"><use href="#mono"/></svg>
<i style="left:2123.8px;top:1641px;width:1.3px;height:29.5px;background:#2a2d31;"></i>
<b class="tc f195" style="left:2098.48px;top:1644px;color:#dadada;transform:scaleX(0.950);">M</b>
<b class="tc f195" style="left:2149.52px;top:1644px;color:#dadada;transform:scaleX(0.950);">S</b>
<i style="left:2086.9px;top:1714px;width:19.7px;height:17px;background:#3a3d42;"></i>
<i style="left:2086.9px;top:1731.5px;width:19.7px;height:173.3px;background:#22262b;"></i>
<svg class="u" style="left:2090.9px;top:1717.5px;width:12px;height:10.5px;color:#e0e0e0;"><use href="#ppl"/></svg>
<b class="tr f115" style="left:2083.43px;top:1732px;color:#cfd1d4;font-weight:700;transform:scaleX(0.950);">10</b>
<i style="left:2090.2px;top:1737.2px;width:13.3px;height:1.3px;background:#1d4763;"></i>
<b class="tr f115" style="left:2083.41px;top:1746px;color:#cfd1d4;font-weight:700;transform:scaleX(0.950);">6</b>
<i style="left:2090.2px;top:1750.7px;width:13.3px;height:1.3px;background:#1d4763;"></i>
<b class="tr f115" style="left:2083.41px;top:1769px;color:#cfd1d4;font-weight:700;transform:scaleX(0.950);">0</b>
<i style="left:2090.2px;top:1774.2px;width:13.3px;height:1.3px;background:#7d8084;"></i>
<b class="tr f115" style="left:2083.39px;top:1792px;color:#cfd1d4;font-weight:700;transform:scaleX(0.950);">-6</b>
<i style="left:2090.2px;top:1797.2px;width:13.3px;height:1.3px;background:#1d4763;"></i>
<b class="tr f115" style="left:2083.4px;top:1812px;color:#cfd1d4;font-weight:700;transform:scaleX(0.950);">-12</b>
<i style="left:2090.2px;top:1817.2px;width:13.3px;height:1.3px;background:#1d4763;"></i>
<b class="tr f115" style="left:2083.4px;top:1836px;color:#cfd1d4;font-weight:700;transform:scaleX(0.950);">-24</b>
<i style="left:2090.2px;top:1841.2px;width:13.3px;height:1.3px;background:#1d4763;"></i>
<b class="tr f115" style="left:2083.4px;top:1860px;color:#cfd1d4;font-weight:700;transform:scaleX(0.950);">-36</b>
<i style="left:2090.2px;top:1865.2px;width:13.3px;height:1.3px;background:#1d4763;"></i>
<b class="tr f115" style="left:2083.4px;top:1875px;color:#cfd1d4;font-weight:700;transform:scaleX(0.950);">-48</b>
<i style="left:2090.2px;top:1880.2px;width:13.3px;height:1.3px;background:#1d4763;"></i>
<i style="left:2090.2px;top:1892.2px;width:13.3px;height:1.3px;background:#1d4763;"></i>
<i style="left:2151.8px;top:1714px;width:16px;height:5px;background:#5d6168;"></i>
<i style="left:2151.8px;top:1720px;width:16px;height:5px;background:#5d6168;"></i>
<i style="left:2151.8px;top:1726px;width:16px;height:5px;background:#5d6168;"></i>
<i style="left:2112.6px;top:1804.5px;width:21px;height:100.3px;background:#6e747b;"></i>
<i style="left:2113.7px;top:1827.2px;width:18px;height:1.2px;background:#8d9399;"></i>
<i style="left:2113.7px;top:1846.6px;width:18px;height:1.2px;background:#8d9399;"></i>
<i style="left:2113.7px;top:1858.4px;width:18px;height:1.2px;background:#8d9399;"></i>
<i style="left:2113.7px;top:1869px;width:18px;height:1.2px;background:#8d9399;"></i>
<i style="left:2121.7px;top:1738.5px;width:2.8px;height:141px;background:#1c1e21;"></i>
<i style="left:2111.4px;top:1755.8px;width:24.3px;height:52.6px;background:;background:linear-gradient(180deg,#fafafa 0,#f0f0f0 6%,#8c8c8c 9%,#a9a9a9 14%,#d6d6d6 24%,#fff 36%,#fff 48.500%,#2a2a2a 48.500%,#2a2a2a 51.500%,#fff 51.500%,#fff 86%,#d4d4d4 93%,#8a8a8a 100%);border-radius:4.500px;box-shadow:inset 2.500px 0 2px rgba(0,0,0,.32),inset -2.500px 0 2px rgba(0,0,0,.32),0 0 0 1.300px #34373c,0 2px 3px 1px rgba(0,0,0,.35)"></i>
<svg class="u" style="left:2149.8px;top:1874.8px;width:20px;height:20px;"><use href="#knob"/></svg>
<b class="tc f160" style="left:2085.92px;top:1915px;color:#f0f0f0;font-weight:700;transform:scaleX(0.970);">13</b>
<svg class="u" style="left:2148px;top:1912.4px;width:23.8px;height:19.4px;color:#bcbfc3;"><use href="#wv"/></svg>
<i style="left:2070.6px;top:1940px;width:106.5px;height:22.6px;background:#26282c;border-radius:1.500px"></i>
<b class="tc f150" style="left:2123.59px;top:1942px;color:#8b8e94;transform:scaleX(1.043);">Auto: Off</b>
<i style="left:2062.6px;top:1972px;width:121.3px;height:21.3px;background:#5fae63;"></i>
<b class="tc f170" style="left:2123.6px;top:1974px;color:#fff;transform:scaleX(0.984);">05 Break Lead</b>
<i style="left:2187.15px;top:852.8px;width:121.3px;height:539.6px;background:#50555d;"></i>
<i style="left:2187.15px;top:852.8px;width:121.3px;height:4.3px;background:#8aa86e;"></i>
<svg class="u" style="left:2192.15px;top:867.5px;width:16.4px;height:15.4px;color:#70747b;"><use href="#pw"/></svg>
<b class="t f175" style="left:2213.95px;top:865px;color:#ececec;transform:scaleX(0.950);">Inserts</b>
<svg class="u" style="left:2271.65px;top:870.8px;width:12px;height:7px;color:#8a8e94;"><use href="#td"/></svg>
<svg class="u" style="left:2290.45px;top:867.8px;width:12.5px;height:12.5px;color:#8a8e94;"><use href="#pl"/></svg>
<i style="left:2185.65px;top:1392.4px;width:124.3px;height:2.8px;background:#1d1f22;"></i>
<i style="left:2187.15px;top:1395.2px;width:121.3px;height:116.5px;background:#50555d;"></i>
<svg class="u" style="left:2192.15px;top:1401.6px;width:16.4px;height:15.4px;color:#70747b;"><use href="#pw"/></svg>
<b class="t f175" style="left:2213.65px;top:1400px;color:#ececec;transform:scaleX(0.949);">Sends</b>
<svg class="u" style="left:2290.45px;top:1402.5px;width:12.5px;height:12.5px;color:#8a8e94;"><use href="#pl"/></svg>
<i style="left:2185.65px;top:1511.7px;width:124.3px;height:3px;background:#1d1f22;"></i>
<i style="left:2187.15px;top:1514.7px;width:121.3px;height:457px;background:#50555d;"></i>
<i style="left:2187.15px;top:1515.3px;width:121.3px;height:3.5px;background:#8aa86e;"></i>
<i style="left:2194.65px;top:1528px;width:108px;height:77.8px;background:#2a2d31;border-radius:3px;box-shadow:0 0 0 1.200px #3a3d43,0 1px 3px 1px rgba(0,0,0,.3)"></i>
<i style="left:2194.65px;top:1528px;width:108px;height:26.2px;background:#595d63;border-radius:3px 3px 0 0"></i>
<i style="left:2194.65px;top:1554.2px;width:108px;height:25.4px;background:#4c5056;"></i>
<b class="tc f165" style="left:2248.15px;top:1533px;color:#ececec;transform:scaleX(1.009);">Eingang L+R</b>
<b class="tc f165" style="left:2248.13px;top:1558px;color:#ececec;transform:scaleX(1.011);">Main</b>
<i style="left:2246.45px;top:1581px;width:4px;height:24px;background:#3fa0e6;"></i>
<i style="left:2247.45px;top:1607px;width:1px;height:22px;background:#3f4349;"></i>
<b class="tc f165" style="left:2220.93px;top:1612px;color:#f2f2f2;transform:scaleX(1.036);">-2.0</b>
<b class="tc f165" style="left:2275.45px;top:1612px;color:#f2f2f2;transform:scaleX(1.004);">&lt;C&gt;</b>
<i style="left:2198.05px;top:1641px;width:101.8px;height:60.5px;background:#3f434a;border-radius:4.500px;box-shadow:0 0 0 1.500px #1e2024,0 2px 2px 1px rgba(0,0,0,.25);"></i>
<i style="left:2198.05px;top:1670.3px;width:101.8px;height:1.3px;background:#2a2d31;"></i>
<i style="left:2248.55px;top:1670.3px;width:1.3px;height:31px;background:#2a2d31;"></i>
<i style="left:2216.35px;top:1679.8px;width:13.4px;height:13.4px;background:#c9cbce;border-radius:50%"></i>
<svg class="u" style="left:2267.05px;top:1679px;width:13px;height:15px;color:#c9cbce;"><use href="#mono"/></svg>
<i style="left:2248.35px;top:1641px;width:1.3px;height:29.5px;background:#2a2d31;"></i>
<b class="tc f195" style="left:2223.03px;top:1644px;color:#dadada;transform:scaleX(0.950);">M</b>
<b class="tc f195" style="left:2274.07px;top:1644px;color:#dadada;transform:scaleX(0.950);">S</b>
<i style="left:2211.45px;top:1714px;width:19.7px;height:17px;background:#3a3d42;"></i>
<i style="left:2211.45px;top:1731.5px;width:19.7px;height:173.3px;background:#22262b;"></i>
<svg class="u" style="left:2215.45px;top:1717.5px;width:12px;height:10.5px;color:#e0e0e0;"><use href="#ppl"/></svg>
<b class="tr f115" style="left:2207.98px;top:1732px;color:#cfd1d4;font-weight:700;transform:scaleX(0.950);">10</b>
<i style="left:2214.75px;top:1737.2px;width:13.3px;height:1.3px;background:#1d4763;"></i>
<b class="tr f115" style="left:2207.96px;top:1746px;color:#cfd1d4;font-weight:700;transform:scaleX(0.950);">6</b>
<i style="left:2214.75px;top:1750.7px;width:13.3px;height:1.3px;background:#1d4763;"></i>
<b class="tr f115" style="left:2207.96px;top:1769px;color:#cfd1d4;font-weight:700;transform:scaleX(0.950);">0</b>
<i style="left:2214.75px;top:1774.2px;width:13.3px;height:1.3px;background:#7d8084;"></i>
<b class="tr f115" style="left:2207.94px;top:1792px;color:#cfd1d4;font-weight:700;transform:scaleX(0.950);">-6</b>
<i style="left:2214.75px;top:1797.2px;width:13.3px;height:1.3px;background:#1d4763;"></i>
<b class="tr f115" style="left:2207.95px;top:1812px;color:#cfd1d4;font-weight:700;transform:scaleX(0.950);">-12</b>
<i style="left:2214.75px;top:1817.2px;width:13.3px;height:1.3px;background:#1d4763;"></i>
<b class="tr f115" style="left:2207.95px;top:1836px;color:#cfd1d4;font-weight:700;transform:scaleX(0.950);">-24</b>
<i style="left:2214.75px;top:1841.2px;width:13.3px;height:1.3px;background:#1d4763;"></i>
<b class="tr f115" style="left:2207.95px;top:1860px;color:#cfd1d4;font-weight:700;transform:scaleX(0.950);">-36</b>
<i style="left:2214.75px;top:1865.2px;width:13.3px;height:1.3px;background:#1d4763;"></i>
<b class="tr f115" style="left:2207.95px;top:1875px;color:#cfd1d4;font-weight:700;transform:scaleX(0.950);">-48</b>
<i style="left:2214.75px;top:1880.2px;width:13.3px;height:1.3px;background:#1d4763;"></i>
<i style="left:2214.75px;top:1892.2px;width:13.3px;height:1.3px;background:#1d4763;"></i>
<i style="left:2276.35px;top:1714px;width:16px;height:5px;background:#5d6168;"></i>
<i style="left:2276.35px;top:1720px;width:16px;height:5px;background:#5d6168;"></i>
<i style="left:2276.35px;top:1726px;width:16px;height:5px;background:#5d6168;"></i>
<i style="left:2237.15px;top:1804.5px;width:21px;height:100.3px;background:#6e747b;"></i>
<i style="left:2238.25px;top:1827.2px;width:18px;height:1.2px;background:#8d9399;"></i>
<i style="left:2238.25px;top:1846.6px;width:18px;height:1.2px;background:#8d9399;"></i>
<i style="left:2238.25px;top:1858.4px;width:18px;height:1.2px;background:#8d9399;"></i>
<i style="left:2238.25px;top:1869px;width:18px;height:1.2px;background:#8d9399;"></i>
<i style="left:2246.25px;top:1738.5px;width:2.8px;height:141px;background:#1c1e21;"></i>
<i style="left:2235.95px;top:1755.8px;width:24.3px;height:52.6px;background:;background:linear-gradient(180deg,#fafafa 0,#f0f0f0 6%,#8c8c8c 9%,#a9a9a9 14%,#d6d6d6 24%,#fff 36%,#fff 48.500%,#2a2a2a 48.500%,#2a2a2a 51.500%,#fff 51.500%,#fff 86%,#d4d4d4 93%,#8a8a8a 100%);border-radius:4.500px;box-shadow:inset 2.500px 0 2px rgba(0,0,0,.32),inset -2.500px 0 2px rgba(0,0,0,.32),0 0 0 1.300px #34373c,0 2px 3px 1px rgba(0,0,0,.35)"></i>
<svg class="u" style="left:2274.35px;top:1874.8px;width:20px;height:20px;"><use href="#knob"/></svg>
<b class="tc f160" style="left:2210.47px;top:1915px;color:#f0f0f0;font-weight:700;transform:scaleX(0.970);">14</b>
<svg class="u" style="left:2272.55px;top:1912.4px;width:23.8px;height:19.4px;color:#bcbfc3;"><use href="#wv"/></svg>
<i style="left:2195.15px;top:1940px;width:106.5px;height:22.6px;background:#26282c;border-radius:1.500px"></i>
<b class="tc f150" style="left:2248.14px;top:1942px;color:#8b8e94;transform:scaleX(1.043);">Auto: Off</b>
<i style="left:2187.15px;top:1972px;width:121.3px;height:21.3px;background:#8aa86e;"></i>
<b class="tc f170" style="left:2248.16px;top:1974px;color:#1c1f23;transform:scaleX(0.991);">06ChorusLead</b>
<i style="left:2311.7px;top:852.8px;width:121.3px;height:539.6px;background:#50555d;"></i>
<i style="left:2311.7px;top:852.8px;width:121.3px;height:4.3px;background:#ffe100;"></i>
<svg class="u" style="left:2316.7px;top:867.5px;width:16.4px;height:15.4px;color:#70747b;"><use href="#pw"/></svg>
<b class="t f175" style="left:2338.5px;top:865px;color:#ececec;transform:scaleX(0.950);">Inserts</b>
<svg class="u" style="left:2396.2px;top:870.8px;width:12px;height:7px;color:#8a8e94;"><use href="#td"/></svg>
<svg class="u" style="left:2415px;top:867.8px;width:12.5px;height:12.5px;color:#8a8e94;"><use href="#pl"/></svg>
<i style="left:2310.2px;top:1392.4px;width:124.3px;height:2.8px;background:#1d1f22;"></i>
<i style="left:2311.7px;top:1395.2px;width:121.3px;height:116.5px;background:#50555d;"></i>
<svg class="u" style="left:2316.7px;top:1401.6px;width:16.4px;height:15.4px;color:#70747b;"><use href="#pw"/></svg>
<b class="t f175" style="left:2338.2px;top:1400px;color:#ececec;transform:scaleX(0.949);">Sends</b>
<svg class="u" style="left:2415px;top:1402.5px;width:12.5px;height:12.5px;color:#8a8e94;"><use href="#pl"/></svg>
<i style="left:2310.2px;top:1511.7px;width:124.3px;height:3px;background:#1d1f22;"></i>
<i style="left:2311.7px;top:1514.7px;width:121.3px;height:457px;background:#50555d;"></i>
<i style="left:2311.7px;top:1515.3px;width:121.3px;height:3.5px;background:#ffe100;"></i>
<i style="left:2319.2px;top:1528px;width:108px;height:77.8px;background:#2a2d31;border-radius:3px;box-shadow:0 0 0 1.200px #3a3d43,0 1px 3px 1px rgba(0,0,0,.3)"></i>
<i style="left:2319.2px;top:1528px;width:108px;height:26.2px;background:#595d63;border-radius:3px 3px 0 0"></i>
<i style="left:2319.2px;top:1554.2px;width:108px;height:25.4px;background:#4c5056;"></i>
<b class="tc f165" style="left:2372.7px;top:1533px;color:#ececec;transform:scaleX(1.009);">Eingang L+R</b>
<b class="tc f165" style="left:2372.68px;top:1558px;color:#ececec;transform:scaleX(1.011);">Main</b>
<i style="left:2371px;top:1581px;width:4px;height:24px;background:#3fa0e6;"></i>
<i style="left:2372px;top:1607px;width:1px;height:22px;background:#3f4349;"></i>
<b class="tc f165" style="left:2345.48px;top:1612px;color:#f2f2f2;transform:scaleX(1.036);">-2.0</b>
<b class="tc f165" style="left:2400px;top:1612px;color:#f2f2f2;transform:scaleX(1.004);">&lt;C&gt;</b>
<i style="left:2322.6px;top:1641px;width:101.8px;height:60.5px;background:#3f434a;border-radius:4.500px;box-shadow:0 0 0 1.500px #1e2024,0 2px 2px 1px rgba(0,0,0,.25);"></i>
<i style="left:2322.6px;top:1670.3px;width:101.8px;height:1.3px;background:#2a2d31;"></i>
<i style="left:2373.1px;top:1670.3px;width:1.3px;height:31px;background:#2a2d31;"></i>
<i style="left:2340.9px;top:1679.8px;width:13.4px;height:13.4px;background:#c9cbce;border-radius:50%"></i>
<svg class="u" style="left:2391.6px;top:1679px;width:13px;height:15px;color:#c9cbce;"><use href="#mono"/></svg>
<i style="left:2372.9px;top:1641px;width:1.3px;height:29.5px;background:#2a2d31;"></i>
<b class="tc f195" style="left:2347.58px;top:1644px;color:#dadada;transform:scaleX(0.950);">M</b>
<b class="tc f195" style="left:2398.62px;top:1644px;color:#dadada;transform:scaleX(0.950);">S</b>
<i style="left:2336px;top:1714px;width:19.7px;height:17px;background:#3a3d42;"></i>
<i style="left:2336px;top:1731.5px;width:19.7px;height:173.3px;background:#22262b;"></i>
<svg class="u" style="left:2340px;top:1717.5px;width:12px;height:10.5px;color:#e0e0e0;"><use href="#ppl"/></svg>
<b class="tr f115" style="left:2332.53px;top:1732px;color:#cfd1d4;font-weight:700;transform:scaleX(0.950);">10</b>
<i style="left:2339.3px;top:1737.2px;width:13.3px;height:1.3px;background:#1d4763;"></i>
<b class="tr f115" style="left:2332.51px;top:1746px;color:#cfd1d4;font-weight:700;transform:scaleX(0.950);">6</b>
<i style="left:2339.3px;top:1750.7px;width:13.3px;height:1.3px;background:#1d4763;"></i>
<b class="tr f115" style="left:2332.51px;top:1769px;color:#cfd1d4;font-weight:700;transform:scaleX(0.950);">0</b>
<i style="left:2339.3px;top:1774.2px;width:13.3px;height:1.3px;background:#7d8084;"></i>
<b class="tr f115" style="left:2332.49px;top:1792px;color:#cfd1d4;font-weight:700;transform:scaleX(0.950);">-6</b>
<i style="left:2339.3px;top:1797.2px;width:13.3px;height:1.3px;background:#1d4763;"></i>
<b class="tr f115" style="left:2332.5px;top:1812px;color:#cfd1d4;font-weight:700;transform:scaleX(0.950);">-12</b>
<i style="left:2339.3px;top:1817.2px;width:13.3px;height:1.3px;background:#1d4763;"></i>
<b class="tr f115" style="left:2332.5px;top:1836px;color:#cfd1d4;font-weight:700;transform:scaleX(0.950);">-24</b>
<i style="left:2339.3px;top:1841.2px;width:13.3px;height:1.3px;background:#1d4763;"></i>
<b class="tr f115" style="left:2332.5px;top:1860px;color:#cfd1d4;font-weight:700;transform:scaleX(0.950);">-36</b>
<i style="left:2339.3px;top:1865.2px;width:13.3px;height:1.3px;background:#1d4763;"></i>
<b class="tr f115" style="left:2332.5px;top:1875px;color:#cfd1d4;font-weight:700;transform:scaleX(0.950);">-48</b>
<i style="left:2339.3px;top:1880.2px;width:13.3px;height:1.3px;background:#1d4763;"></i>
<i style="left:2339.3px;top:1892.2px;width:13.3px;height:1.3px;background:#1d4763;"></i>
<i style="left:2400.9px;top:1714px;width:16px;height:5px;background:#5d6168;"></i>
<i style="left:2400.9px;top:1720px;width:16px;height:5px;background:#5d6168;"></i>
<i style="left:2400.9px;top:1726px;width:16px;height:5px;background:#5d6168;"></i>
<i style="left:2361.7px;top:1804.5px;width:21px;height:100.3px;background:#6e747b;"></i>
<i style="left:2362.8px;top:1827.2px;width:18px;height:1.2px;background:#8d9399;"></i>
<i style="left:2362.8px;top:1846.6px;width:18px;height:1.2px;background:#8d9399;"></i>
<i style="left:2362.8px;top:1858.4px;width:18px;height:1.2px;background:#8d9399;"></i>
<i style="left:2362.8px;top:1869px;width:18px;height:1.2px;background:#8d9399;"></i>
<i style="left:2370.8px;top:1738.5px;width:2.8px;height:141px;background:#1c1e21;"></i>
<i style="left:2360.5px;top:1755.8px;width:24.3px;height:52.6px;background:;background:linear-gradient(180deg,#fafafa 0,#f0f0f0 6%,#8c8c8c 9%,#a9a9a9 14%,#d6d6d6 24%,#fff 36%,#fff 48.500%,#2a2a2a 48.500%,#2a2a2a 51.500%,#fff 51.500%,#fff 86%,#d4d4d4 93%,#8a8a8a 100%);border-radius:4.500px;box-shadow:inset 2.500px 0 2px rgba(0,0,0,.32),inset -2.500px 0 2px rgba(0,0,0,.32),0 0 0 1.300px #34373c,0 2px 3px 1px rgba(0,0,0,.35)"></i>
<svg class="u" style="left:2398.9px;top:1874.8px;width:20px;height:20px;"><use href="#knob"/></svg>
<b class="tc f160" style="left:2335.02px;top:1915px;color:#f0f0f0;font-weight:700;transform:scaleX(0.970);">15</b>
<svg class="u" style="left:2397.1px;top:1912.4px;width:23.8px;height:19.4px;color:#bcbfc3;"><use href="#wv"/></svg>
<i style="left:2319.7px;top:1940px;width:106.5px;height:22.6px;background:#26282c;border-radius:1.500px"></i>
<b class="tc f150" style="left:2372.69px;top:1942px;color:#8b8e94;transform:scaleX(1.043);">Auto: Off</b>
<i style="left:2311.7px;top:1972px;width:121.3px;height:21.3px;background:#ffe100;"></i>
<b class="tc f170" style="left:2372.7px;top:1974px;color:#1c1f23;transform:scaleX(0.978);">07 Final Lead</b>
<i style="left:2436.25px;top:852.8px;width:121.3px;height:539.6px;background:#50555d;"></i>
<i style="left:2436.25px;top:852.8px;width:121.3px;height:4.3px;background:#ffb030;"></i>
<svg class="u" style="left:2441.25px;top:867.5px;width:16.4px;height:15.4px;color:#70747b;"><use href="#pw"/></svg>
<b class="t f175" style="left:2463.05px;top:865px;color:#ececec;transform:scaleX(0.950);">Inserts</b>
<svg class="u" style="left:2520.75px;top:870.8px;width:12px;height:7px;color:#8a8e94;"><use href="#td"/></svg>
<svg class="u" style="left:2539.55px;top:867.8px;width:12.5px;height:12.5px;color:#8a8e94;"><use href="#pl"/></svg>
<i style="left:2434.75px;top:1392.4px;width:124.3px;height:2.8px;background:#1d1f22;"></i>
<i style="left:2436.25px;top:1395.2px;width:121.3px;height:116.5px;background:#50555d;"></i>
<svg class="u" style="left:2441.25px;top:1401.6px;width:16.4px;height:15.4px;color:#70747b;"><use href="#pw"/></svg>
<b class="t f175" style="left:2462.75px;top:1400px;color:#ececec;transform:scaleX(0.949);">Sends</b>
<svg class="u" style="left:2539.55px;top:1402.5px;width:12.5px;height:12.5px;color:#8a8e94;"><use href="#pl"/></svg>
<i style="left:2434.75px;top:1511.7px;width:124.3px;height:3px;background:#1d1f22;"></i>
<i style="left:2436.25px;top:1514.7px;width:121.3px;height:457px;background:#50555d;"></i>
<i style="left:2436.25px;top:1515.3px;width:121.3px;height:3.5px;background:#ffb030;"></i>
<i style="left:2443.75px;top:1528px;width:108px;height:77.8px;background:#2a2d31;border-radius:3px;box-shadow:0 0 0 1.200px #3a3d43,0 1px 3px 1px rgba(0,0,0,.3)"></i>
<i style="left:2443.75px;top:1528px;width:108px;height:26.2px;background:#595d63;border-radius:3px 3px 0 0"></i>
<i style="left:2443.75px;top:1554.2px;width:108px;height:25.4px;background:#4c5056;"></i>
<b class="tc f165" style="left:2497.25px;top:1533px;color:#ececec;transform:scaleX(1.009);">Eingang L+R</b>
<b class="tc f165" style="left:2497.23px;top:1558px;color:#ececec;transform:scaleX(1.011);">Main</b>
<i style="left:2495.55px;top:1581px;width:4px;height:24px;background:#3fa0e6;"></i>
<i style="left:2496.55px;top:1607px;width:1px;height:22px;background:#3f4349;"></i>
<b class="tc f165" style="left:2470.03px;top:1612px;color:#f2f2f2;transform:scaleX(1.036);">-2.0</b>
<b class="tc f165" style="left:2524.55px;top:1612px;color:#f2f2f2;transform:scaleX(1.004);">&lt;C&gt;</b>
<i style="left:2447.15px;top:1641px;width:101.8px;height:60.5px;background:#3f434a;border-radius:4.500px;box-shadow:0 0 0 1.500px #1e2024,0 2px 2px 1px rgba(0,0,0,.25);"></i>
<i style="left:2447.15px;top:1670.3px;width:101.8px;height:1.3px;background:#2a2d31;"></i>
<i style="left:2497.65px;top:1670.3px;width:1.3px;height:31px;background:#2a2d31;"></i>
<i style="left:2465.45px;top:1679.8px;width:13.4px;height:13.4px;background:#c9cbce;border-radius:50%"></i>
<svg class="u" style="left:2516.15px;top:1679px;width:13px;height:15px;color:#c9cbce;"><use href="#mono"/></svg>
<i style="left:2497.45px;top:1641px;width:1.3px;height:29.5px;background:#2a2d31;"></i>
<b class="tc f195" style="left:2472.13px;top:1644px;color:#dadada;transform:scaleX(0.950);">M</b>
<b class="tc f195" style="left:2523.17px;top:1644px;color:#dadada;transform:scaleX(0.950);">S</b>
<i style="left:2460.55px;top:1714px;width:19.7px;height:17px;background:#3a3d42;"></i>
<i style="left:2460.55px;top:1731.5px;width:19.7px;height:173.3px;background:#22262b;"></i>
<svg class="u" style="left:2464.55px;top:1717.5px;width:12px;height:10.5px;color:#e0e0e0;"><use href="#ppl"/></svg>
<b class="tr f115" style="left:2457.08px;top:1732px;color:#cfd1d4;font-weight:700;transform:scaleX(0.950);">10</b>
<i style="left:2463.85px;top:1737.2px;width:13.3px;height:1.3px;background:#1d4763;"></i>
<b class="tr f115" style="left:2457.06px;top:1746px;color:#cfd1d4;font-weight:700;transform:scaleX(0.950);">6</b>
<i style="left:2463.85px;top:1750.7px;width:13.3px;height:1.3px;background:#1d4763;"></i>
<b class="tr f115" style="left:2457.06px;top:1769px;color:#cfd1d4;font-weight:700;transform:scaleX(0.950);">0</b>
<i style="left:2463.85px;top:1774.2px;width:13.3px;height:1.3px;background:#7d8084;"></i>
<b class="tr f115" style="left:2457.04px;top:1792px;color:#cfd1d4;font-weight:700;transform:scaleX(0.950);">-6</b>
<i style="left:2463.85px;top:1797.2px;width:13.3px;height:1.3px;background:#1d4763;"></i>
<b class="tr f115" style="left:2457.05px;top:1812px;color:#cfd1d4;font-weight:700;transform:scaleX(0.950);">-12</b>
<i style="left:2463.85px;top:1817.2px;width:13.3px;height:1.3px;background:#1d4763;"></i>
<b class="tr f115" style="left:2457.05px;top:1836px;color:#cfd1d4;font-weight:700;transform:scaleX(0.950);">-24</b>
<i style="left:2463.85px;top:1841.2px;width:13.3px;height:1.3px;background:#1d4763;"></i>
<b class="tr f115" style="left:2457.05px;top:1860px;color:#cfd1d4;font-weight:700;transform:scaleX(0.950);">-36</b>
<i style="left:2463.85px;top:1865.2px;width:13.3px;height:1.3px;background:#1d4763;"></i>
<b class="tr f115" style="left:2457.05px;top:1875px;color:#cfd1d4;font-weight:700;transform:scaleX(0.950);">-48</b>
<i style="left:2463.85px;top:1880.2px;width:13.3px;height:1.3px;background:#1d4763;"></i>
<i style="left:2463.85px;top:1892.2px;width:13.3px;height:1.3px;background:#1d4763;"></i>
<i style="left:2525.45px;top:1714px;width:16px;height:5px;background:#5d6168;"></i>
<i style="left:2525.45px;top:1720px;width:16px;height:5px;background:#5d6168;"></i>
<i style="left:2525.45px;top:1726px;width:16px;height:5px;background:#5d6168;"></i>
<i style="left:2486.25px;top:1804.5px;width:21px;height:100.3px;background:#6e747b;"></i>
<i style="left:2487.35px;top:1827.2px;width:18px;height:1.2px;background:#8d9399;"></i>
<i style="left:2487.35px;top:1846.6px;width:18px;height:1.2px;background:#8d9399;"></i>
<i style="left:2487.35px;top:1858.4px;width:18px;height:1.2px;background:#8d9399;"></i>
<i style="left:2487.35px;top:1869px;width:18px;height:1.2px;background:#8d9399;"></i>
<i style="left:2495.35px;top:1738.5px;width:2.8px;height:141px;background:#1c1e21;"></i>
<i style="left:2485.05px;top:1755.8px;width:24.3px;height:52.6px;background:;background:linear-gradient(180deg,#fafafa 0,#f0f0f0 6%,#8c8c8c 9%,#a9a9a9 14%,#d6d6d6 24%,#fff 36%,#fff 48.500%,#2a2a2a 48.500%,#2a2a2a 51.500%,#fff 51.500%,#fff 86%,#d4d4d4 93%,#8a8a8a 100%);border-radius:4.500px;box-shadow:inset 2.500px 0 2px rgba(0,0,0,.32),inset -2.500px 0 2px rgba(0,0,0,.32),0 0 0 1.300px #34373c,0 2px 3px 1px rgba(0,0,0,.35)"></i>
<svg class="u" style="left:2523.45px;top:1874.8px;width:20px;height:20px;"><use href="#knob"/></svg>
<b class="tc f160" style="left:2459.57px;top:1915px;color:#f0f0f0;font-weight:700;transform:scaleX(0.970);">16</b>
<svg class="u" style="left:2521.65px;top:1912.4px;width:23.8px;height:19.4px;color:#bcbfc3;"><use href="#wv"/></svg>
<i style="left:2444.25px;top:1940px;width:106.5px;height:22.6px;background:#26282c;border-radius:1.500px"></i>
<b class="tc f150" style="left:2497.24px;top:1942px;color:#8b8e94;transform:scaleX(1.043);">Auto: Off</b>
<i style="left:2436.25px;top:1972px;width:121.3px;height:21.3px;background:#ffb030;"></i>
<b class="tc f170" style="left:2497.24px;top:1974px;color:#1c1f23;transform:scaleX(0.988);">08BreakDrums</b>
<i style="left:2560.8px;top:852.8px;width:121.3px;height:539.6px;background:#50555d;"></i>
<i style="left:2560.8px;top:852.8px;width:121.3px;height:4.3px;background:#ff5a30;"></i>
<svg class="u" style="left:2565.8px;top:867.5px;width:16.4px;height:15.4px;color:#70747b;"><use href="#pw"/></svg>
<b class="t f175" style="left:2587.6px;top:865px;color:#ececec;transform:scaleX(0.950);">Inserts</b>
<svg class="u" style="left:2645.3px;top:870.8px;width:12px;height:7px;color:#8a8e94;"><use href="#td"/></svg>
<svg class="u" style="left:2664.1px;top:867.8px;width:12.5px;height:12.5px;color:#8a8e94;"><use href="#pl"/></svg>
<i style="left:2559.3px;top:1392.4px;width:124.3px;height:2.8px;background:#1d1f22;"></i>
<i style="left:2560.8px;top:1395.2px;width:121.3px;height:116.5px;background:#50555d;"></i>
<svg class="u" style="left:2565.8px;top:1401.6px;width:16.4px;height:15.4px;color:#70747b;"><use href="#pw"/></svg>
<b class="t f175" style="left:2587.3px;top:1400px;color:#ececec;transform:scaleX(0.949);">Sends</b>
<svg class="u" style="left:2664.1px;top:1402.5px;width:12.5px;height:12.5px;color:#8a8e94;"><use href="#pl"/></svg>
<i style="left:2559.3px;top:1511.7px;width:124.3px;height:3px;background:#1d1f22;"></i>
<i style="left:2560.8px;top:1514.7px;width:121.3px;height:457px;background:#50555d;"></i>
<i style="left:2560.8px;top:1515.3px;width:121.3px;height:3.5px;background:#ff5a30;"></i>
<i style="left:2568.3px;top:1528px;width:108px;height:77.8px;background:#2a2d31;border-radius:3px;box-shadow:0 0 0 1.200px #3a3d43,0 1px 3px 1px rgba(0,0,0,.3)"></i>
<i style="left:2568.3px;top:1528px;width:108px;height:26.2px;background:#595d63;border-radius:3px 3px 0 0"></i>
<i style="left:2568.3px;top:1554.2px;width:108px;height:25.4px;background:#4c5056;"></i>
<b class="tc f165" style="left:2621.8px;top:1533px;color:#ececec;transform:scaleX(1.009);">Eingang L+R</b>
<b class="tc f165" style="left:2621.78px;top:1558px;color:#ececec;transform:scaleX(1.011);">Main</b>
<i style="left:2620.1px;top:1581px;width:4px;height:24px;background:#3fa0e6;"></i>
<i style="left:2621.1px;top:1607px;width:1px;height:22px;background:#3f4349;"></i>
<b class="tc f165" style="left:2594.58px;top:1612px;color:#f2f2f2;transform:scaleX(1.036);">-2.0</b>
<b class="tc f165" style="left:2649.1px;top:1612px;color:#f2f2f2;transform:scaleX(1.004);">&lt;C&gt;</b>
<i style="left:2571.7px;top:1641px;width:101.8px;height:60.5px;background:#3f434a;border-radius:4.500px;box-shadow:0 0 0 1.500px #1e2024,0 2px 2px 1px rgba(0,0,0,.25);"></i>
<i style="left:2571.7px;top:1670.3px;width:101.8px;height:1.3px;background:#2a2d31;"></i>
<i style="left:2622.2px;top:1670.3px;width:1.3px;height:31px;background:#2a2d31;"></i>
<i style="left:2590px;top:1679.8px;width:13.4px;height:13.4px;background:#c9cbce;border-radius:50%"></i>
<svg class="u" style="left:2640.7px;top:1679px;width:13px;height:15px;color:#c9cbce;"><use href="#mono"/></svg>
<i style="left:2622px;top:1641px;width:1.3px;height:29.5px;background:#2a2d31;"></i>
<b class="tc f195" style="left:2596.68px;top:1644px;color:#dadada;transform:scaleX(0.950);">M</b>
<b class="tc f195" style="left:2647.72px;top:1644px;color:#dadada;transform:scaleX(0.950);">S</b>
<i style="left:2585.1px;top:1714px;width:19.7px;height:17px;background:#3a3d42;"></i>
<i style="left:2585.1px;top:1731.5px;width:19.7px;height:173.3px;background:#22262b;"></i>
<svg class="u" style="left:2589.1px;top:1717.5px;width:12px;height:10.5px;color:#e0e0e0;"><use href="#ppl"/></svg>
<b class="tr f115" style="left:2581.63px;top:1732px;color:#cfd1d4;font-weight:700;transform:scaleX(0.950);">10</b>
<i style="left:2588.4px;top:1737.2px;width:13.3px;height:1.3px;background:#1d4763;"></i>
<b class="tr f115" style="left:2581.61px;top:1746px;color:#cfd1d4;font-weight:700;transform:scaleX(0.950);">6</b>
<i style="left:2588.4px;top:1750.7px;width:13.3px;height:1.3px;background:#1d4763;"></i>
<b class="tr f115" style="left:2581.61px;top:1769px;color:#cfd1d4;font-weight:700;transform:scaleX(0.950);">0</b>
<i style="left:2588.4px;top:1774.2px;width:13.3px;height:1.3px;background:#7d8084;"></i>
<b class="tr f115" style="left:2581.59px;top:1792px;color:#cfd1d4;font-weight:700;transform:scaleX(0.950);">-6</b>
<i style="left:2588.4px;top:1797.2px;width:13.3px;height:1.3px;background:#1d4763;"></i>
<b class="tr f115" style="left:2581.6px;top:1812px;color:#cfd1d4;font-weight:700;transform:scaleX(0.950);">-12</b>
<i style="left:2588.4px;top:1817.2px;width:13.3px;height:1.3px;background:#1d4763;"></i>
<b class="tr f115" style="left:2581.6px;top:1836px;color:#cfd1d4;font-weight:700;transform:scaleX(0.950);">-24</b>
<i style="left:2588.4px;top:1841.2px;width:13.3px;height:1.3px;background:#1d4763;"></i>
<b class="tr f115" style="left:2581.6px;top:1860px;color:#cfd1d4;font-weight:700;transform:scaleX(0.950);">-36</b>
<i style="left:2588.4px;top:1865.2px;width:13.3px;height:1.3px;background:#1d4763;"></i>
<b class="tr f115" style="left:2581.6px;top:1875px;color:#cfd1d4;font-weight:700;transform:scaleX(0.950);">-48</b>
<i style="left:2588.4px;top:1880.2px;width:13.3px;height:1.3px;background:#1d4763;"></i>
<i style="left:2588.4px;top:1892.2px;width:13.3px;height:1.3px;background:#1d4763;"></i>
<i style="left:2650px;top:1714px;width:16px;height:5px;background:#5d6168;"></i>
<i style="left:2650px;top:1720px;width:16px;height:5px;background:#5d6168;"></i>
<i style="left:2650px;top:1726px;width:16px;height:5px;background:#5d6168;"></i>
<i style="left:2610.8px;top:1804.5px;width:21px;height:100.3px;background:#6e747b;"></i>
<i style="left:2611.9px;top:1827.2px;width:18px;height:1.2px;background:#8d9399;"></i>
<i style="left:2611.9px;top:1846.6px;width:18px;height:1.2px;background:#8d9399;"></i>
<i style="left:2611.9px;top:1858.4px;width:18px;height:1.2px;background:#8d9399;"></i>
<i style="left:2611.9px;top:1869px;width:18px;height:1.2px;background:#8d9399;"></i>
<i style="left:2619.9px;top:1738.5px;width:2.8px;height:141px;background:#1c1e21;"></i>
<i style="left:2609.6px;top:1755.8px;width:24.3px;height:52.6px;background:;background:linear-gradient(180deg,#fafafa 0,#f0f0f0 6%,#8c8c8c 9%,#a9a9a9 14%,#d6d6d6 24%,#fff 36%,#fff 48.500%,#2a2a2a 48.500%,#2a2a2a 51.500%,#fff 51.500%,#fff 86%,#d4d4d4 93%,#8a8a8a 100%);border-radius:4.500px;box-shadow:inset 2.500px 0 2px rgba(0,0,0,.32),inset -2.500px 0 2px rgba(0,0,0,.32),0 0 0 1.300px #34373c,0 2px 3px 1px rgba(0,0,0,.35)"></i>
<svg class="u" style="left:2648px;top:1874.8px;width:20px;height:20px;"><use href="#knob"/></svg>
<b class="tc f160" style="left:2584.12px;top:1915px;color:#f0f0f0;font-weight:700;transform:scaleX(0.970);">17</b>
<svg class="u" style="left:2646.2px;top:1912.4px;width:23.8px;height:19.4px;color:#bcbfc3;"><use href="#wv"/></svg>
<i style="left:2568.8px;top:1940px;width:106.5px;height:22.6px;background:#26282c;border-radius:1.500px"></i>
<b class="tc f150" style="left:2621.79px;top:1942px;color:#8b8e94;transform:scaleX(1.043);">Auto: Off</b>
<i style="left:2560.8px;top:1972px;width:121.3px;height:21.3px;background:#ff5a30;"></i>
<b class="tc f170" style="left:2621.79px;top:1974px;color:#fff;transform:scaleX(0.991);">09 Bass Drop</b>
<i style="left:2685.35px;top:852.8px;width:121.3px;height:539.6px;background:#42464e;"></i>
<i style="left:2685.35px;top:852.8px;width:121.3px;height:4.3px;background:#9b3f8e;"></i>
<i style="left:2685.35px;top:859.8px;width:121.3px;height:29.8px;background:#42464e;"></i>
<svg class="u" style="left:2690.35px;top:867.5px;width:16.4px;height:15.4px;color:#2f9ef0;"><use href="#pw"/></svg>
<b class="t f175" style="left:2712.15px;top:865px;color:#ececec;transform:scaleX(0.950);">Inserts</b>
<svg class="u" style="left:2769.85px;top:870.8px;width:12px;height:7px;color:#8a8e94;"><use href="#td"/></svg>
<svg class="u" style="left:2788.65px;top:867.8px;width:12.5px;height:12.5px;color:#8a8e94;"><use href="#pl"/></svg>
<i style="left:2685.35px;top:890.3px;width:121.3px;height:29.3px;background:#5f646b;"></i>
<svg class="u" style="left:2691.05px;top:899.1px;width:14.9px;height:14px;color:#74c8fb;"><use href="#pw"/></svg>
<b class="t f155" style="left:2710.15px;top:897px;color:#ececec;transform:scaleX(0.984);">Room Reverb</b>
<i style="left:2685.35px;top:922.2px;width:121.3px;height:29.3px;background:#5f646b;"></i>
<svg class="u" style="left:2691.05px;top:931px;width:14.9px;height:14px;color:#74c8fb;"><use href="#pw"/></svg>
<svg class="u" style="left:2787.15px;top:933.7px;width:12px;height:7px;color:#6f747b;"><use href="#td"/></svg>
<b class="t f155" style="left:2710.15px;top:929px;color:#ececec;transform:scaleX(0.954);">Pro EQ</b>
<i style="left:2683.85px;top:1392.4px;width:124.3px;height:2.8px;background:#1d1f22;"></i>
<i style="left:2685.35px;top:1395.2px;width:121.3px;height:116.5px;background:#42464e;"></i>
<i style="left:2683.85px;top:1511.7px;width:124.3px;height:3px;background:#1d1f22;"></i>
<i style="left:2685.35px;top:1514.7px;width:121.3px;height:457px;background:#42464e;"></i>
<i style="left:2685.35px;top:1515.3px;width:121.3px;height:3.5px;background:#9b3f8e;"></i>
<i style="left:2692.85px;top:1528px;width:108px;height:77.8px;background:#2a2d31;border-radius:3px;box-shadow:0 0 0 1.200px #3a3d43,0 1px 3px 1px rgba(0,0,0,.3)"></i>
<i style="left:2692.85px;top:1528px;width:108px;height:26.2px;background:#595d63;border-radius:3px 3px 0 0"></i>
<i style="left:2692.85px;top:1554.2px;width:108px;height:25.4px;background:#4c5056;"></i>
<i style="left:2696.35px;top:1539px;width:1.9px;height:8.5px;background:#3fa0e6;"></i>
<i style="left:2700.3px;top:1539px;width:1.9px;height:8.5px;background:#71767e;"></i>
<i style="left:2704.25px;top:1539px;width:1.9px;height:8.5px;background:#71767e;"></i>
<i style="left:2708.2px;top:1539px;width:1.9px;height:8.5px;background:#71767e;"></i>
<i style="left:2712.15px;top:1539px;width:1.9px;height:8.5px;background:#71767e;"></i>
<i style="left:2716.1px;top:1539px;width:1.9px;height:8.5px;background:#71767e;"></i>
<i style="left:2720.05px;top:1539px;width:1.9px;height:8.5px;background:#71767e;"></i>
<i style="left:2724px;top:1539px;width:1.9px;height:8.5px;background:#71767e;"></i>
<i style="left:2727.95px;top:1539px;width:1.9px;height:8.5px;background:#71767e;"></i>
<i style="left:2731.9px;top:1539px;width:1.9px;height:8.5px;background:#71767e;"></i>
<i style="left:2735.85px;top:1539px;width:1.9px;height:8.5px;background:#71767e;"></i>
<i style="left:2739.8px;top:1539px;width:1.9px;height:8.5px;background:#71767e;"></i>
<i style="left:2743.75px;top:1539px;width:1.9px;height:8.5px;background:#71767e;"></i>
<i style="left:2747.7px;top:1539px;width:1.9px;height:8.5px;background:#71767e;"></i>
<i style="left:2751.65px;top:1539px;width:1.9px;height:8.5px;background:#71767e;"></i>
<i style="left:2755.6px;top:1539px;width:1.9px;height:8.5px;background:#71767e;"></i>
<i style="left:2759.55px;top:1539px;width:1.9px;height:8.5px;background:#71767e;"></i>
<i style="left:2763.5px;top:1539px;width:1.9px;height:8.5px;background:#71767e;"></i>
<i style="left:2767.45px;top:1539px;width:1.9px;height:8.5px;background:#71767e;"></i>
<i style="left:2771.4px;top:1539px;width:1.9px;height:8.5px;background:#71767e;"></i>
<i style="left:2775.35px;top:1539px;width:1.9px;height:8.5px;background:#71767e;"></i>
<i style="left:2779.3px;top:1539px;width:1.9px;height:8.5px;background:#71767e;"></i>
<i style="left:2783.25px;top:1539px;width:1.9px;height:8.5px;background:#71767e;"></i>
<i style="left:2787.2px;top:1539px;width:1.9px;height:8.5px;background:#71767e;"></i>
<i style="left:2791.15px;top:1539px;width:1.9px;height:8.5px;background:#71767e;"></i>
<i style="left:2795.1px;top:1539px;width:1.9px;height:8.5px;background:#71767e;"></i>
<b class="tc f165" style="left:2746.36px;top:1558px;color:#5fb4f0;transform:scaleX(1.029);">Drum Group</b>
<i style="left:2744.65px;top:1581px;width:4px;height:24px;background:#3fa0e6;"></i>
<i style="left:2745.65px;top:1607px;width:1px;height:22px;background:#3f4349;"></i>
<b class="tc f165" style="left:2719.14px;top:1612px;color:#f2f2f2;transform:scaleX(1.034);">-16.0</b>
<b class="tc f165" style="left:2773.65px;top:1612px;color:#f2f2f2;transform:scaleX(1.004);">&lt;C&gt;</b>
<i style="left:2696.25px;top:1641px;width:101.8px;height:29.5px;background:#3f434a;border-radius:4.500px;box-shadow:0 0 0 1.500px #1e2024,0 2px 2px 1px rgba(0,0,0,.25);"></i>
<i style="left:2746.55px;top:1641px;width:1.3px;height:29.5px;background:#2a2d31;"></i>
<b class="tc f195" style="left:2721.23px;top:1644px;color:#dadada;transform:scaleX(0.950);">M</b>
<b class="tc f195" style="left:2772.27px;top:1644px;color:#dadada;transform:scaleX(0.950);">S</b>
<i style="left:2709.65px;top:1714px;width:19.7px;height:17px;background:#3a3d42;"></i>
<i style="left:2709.65px;top:1731.5px;width:19.7px;height:173.3px;background:#22262b;"></i>
<b class="tr f115" style="left:2706.18px;top:1732px;color:#cfd1d4;font-weight:700;transform:scaleX(0.950);">10</b>
<i style="left:2712.95px;top:1737.2px;width:13.3px;height:1.3px;background:#1d4763;"></i>
<b class="tr f115" style="left:2706.16px;top:1746px;color:#cfd1d4;font-weight:700;transform:scaleX(0.950);">6</b>
<i style="left:2712.95px;top:1750.7px;width:13.3px;height:1.3px;background:#1d4763;"></i>
<b class="tr f115" style="left:2706.16px;top:1769px;color:#cfd1d4;font-weight:700;transform:scaleX(0.950);">0</b>
<i style="left:2712.95px;top:1774.2px;width:13.3px;height:1.3px;background:#7d8084;"></i>
<b class="tr f115" style="left:2706.14px;top:1792px;color:#cfd1d4;font-weight:700;transform:scaleX(0.950);">-6</b>
<i style="left:2712.95px;top:1797.2px;width:13.3px;height:1.3px;background:#1d4763;"></i>
<b class="tr f115" style="left:2706.15px;top:1812px;color:#cfd1d4;font-weight:700;transform:scaleX(0.950);">-12</b>
<i style="left:2712.95px;top:1817.2px;width:13.3px;height:1.3px;background:#1d4763;"></i>
<b class="tr f115" style="left:2706.15px;top:1836px;color:#cfd1d4;font-weight:700;transform:scaleX(0.950);">-24</b>
<i style="left:2712.95px;top:1841.2px;width:13.3px;height:1.3px;background:#1d4763;"></i>
<b class="tr f115" style="left:2706.15px;top:1860px;color:#cfd1d4;font-weight:700;transform:scaleX(0.950);">-36</b>
<i style="left:2712.95px;top:1865.2px;width:13.3px;height:1.3px;background:#1d4763;"></i>
<b class="tr f115" style="left:2706.15px;top:1875px;color:#cfd1d4;font-weight:700;transform:scaleX(0.950);">-48</b>
<i style="left:2712.95px;top:1880.2px;width:13.3px;height:1.3px;background:#1d4763;"></i>
<i style="left:2712.95px;top:1892.2px;width:13.3px;height:1.3px;background:#1d4763;"></i>
<i style="left:2774.55px;top:1714px;width:16px;height:5.5px;background:#6ec3f4;"></i>
<i style="left:2774.55px;top:1722.5px;width:16px;height:5px;background:#5d6168;"></i>
<i style="left:2735.35px;top:1839px;width:21px;height:65.8px;background:#6e747b;"></i>
<i style="left:2736.45px;top:1846.6px;width:18px;height:1.2px;background:#8d9399;"></i>
<i style="left:2736.45px;top:1858.4px;width:18px;height:1.2px;background:#8d9399;"></i>
<i style="left:2736.45px;top:1869px;width:18px;height:1.2px;background:#8d9399;"></i>
<i style="left:2744.45px;top:1738.5px;width:2.8px;height:141px;background:#1c1e21;"></i>
<i style="left:2737.85px;top:1755px;width:16px;height:1.2px;background:#8a9097;"></i>
<i style="left:2737.85px;top:1774px;width:16px;height:2px;background:#e6e6e6;"></i>
<i style="left:2734.15px;top:1790.3px;width:24.3px;height:52.6px;background:;background:linear-gradient(180deg,#5fb5de 0,#54a9d4 6%,#2a6f96 9%,#3a8bb5 22%,#459fcb 36%,#429bc8 48%,#1b4560 48.500%,#1b4560 51.500%,#3f97c4 52%,#3f97c4 84%,#2f7ba4 93%,#1d4f6c 100%);border-radius:4.500px;box-shadow:inset 2.500px 0 2px rgba(10,40,60,.5),inset -2.500px 0 2px rgba(10,40,60,.5),0 0 0 1.300px #1c2a34,0 2px 3px 1px rgba(0,0,0,.35)"></i>
<svg class="u" style="left:2772.55px;top:1874.8px;width:20px;height:20px;"><use href="#knob"/></svg>
<b class="tc f160" style="left:2708.67px;top:1915px;color:#f0f0f0;font-weight:700;transform:scaleX(0.970);">18</b>
<b class="tc f205" style="left:2782.23px;top:1911px;color:#a9acb0;font-weight:700;transform:scaleX(0.938);">FX</b>
<i style="left:2693.35px;top:1940px;width:106.5px;height:22.6px;background:#26282c;border-radius:1.500px"></i>
<b class="tc f150" style="left:2746.34px;top:1942px;color:#8b8e94;transform:scaleX(1.043);">Auto: Off</b>
<i style="left:2685.35px;top:1972px;width:121.3px;height:21.3px;background:#9b3f8e;"></i>
<b class="tc f170" style="left:2746.35px;top:1974px;color:#fff;transform:scaleX(0.977);">Snare Reverb</b>
<i style="left:2809.9px;top:852.8px;width:121.3px;height:539.6px;background:#42464e;"></i>
<i style="left:2809.9px;top:852.8px;width:121.3px;height:4.3px;background:#e8e8e8;"></i>
<i style="left:2809.9px;top:859.8px;width:121.3px;height:28px;background:#203646;"></i>
<b class="tc f180" style="left:2861.11px;top:865px;color:#f0f0f0;transform:scaleX(0.920);">Mix FX</b>
<svg class="u" style="left:2913.4px;top:870.8px;width:12px;height:7px;color:#9a9ea4;"><use href="#td"/></svg>
<svg class="u" style="left:2814.9px;top:897.5px;width:16.4px;height:15.4px;color:#2f9ef0;"><use href="#pw"/></svg>
<b class="t f175" style="left:2836.7px;top:895px;color:#ececec;transform:scaleX(0.950);">Inserts</b>
<svg class="u" style="left:2894.4px;top:900.8px;width:12px;height:7px;color:#8a8e94;"><use href="#td"/></svg>
<svg class="u" style="left:2913.2px;top:897.8px;width:12.5px;height:12.5px;color:#8a8e94;"><use href="#pl"/></svg>
<i style="left:2809.9px;top:919.3px;width:121.3px;height:29.3px;background:#5f646b;"></i>
<svg class="u" style="left:2815.6px;top:928.1px;width:14.9px;height:14px;color:#74c8fb;"><use href="#pw"/></svg>
<svg class="u" style="left:2911.7px;top:930.8px;width:12px;height:7px;color:#6f747b;"><use href="#td"/></svg>
<b class="t f155" style="left:2834.7px;top:926px;color:#ececec;transform:scaleX(0.995);">Compressor</b>
<i style="left:2808.4px;top:1392.4px;width:124.3px;height:2.8px;background:#1d1f22;"></i>
<i style="left:2809.9px;top:1395.2px;width:121.3px;height:116.5px;background:#42464e;"></i>
<svg class="u" style="left:2814.9px;top:1401.6px;width:16.4px;height:15.4px;color:#70747b;"><use href="#pw"/></svg>
<b class="t f175" style="left:2836.4px;top:1400px;color:#ececec;transform:scaleX(0.949);">Sends</b>
<svg class="u" style="left:2913.2px;top:1402.5px;width:12.5px;height:12.5px;color:#8a8e94;"><use href="#pl"/></svg>
<i style="left:2808.4px;top:1511.7px;width:124.3px;height:3px;background:#1d1f22;"></i>
<i style="left:2809.9px;top:1514.7px;width:121.3px;height:457px;background:#42464e;"></i>
<i style="left:2809.9px;top:1515.3px;width:121.3px;height:3.5px;background:#e8e8e8;"></i>
<i style="left:2817.4px;top:1528px;width:108px;height:77.8px;background:#2a2d31;border-radius:3px;box-shadow:0 0 0 1.200px #3a3d43,0 1px 3px 1px rgba(0,0,0,.3)"></i>
<i style="left:2817.4px;top:1528px;width:108px;height:26.2px;background:#595d63;border-radius:3px 3px 0 0"></i>
<i style="left:2817.4px;top:1554.2px;width:108px;height:25.4px;background:#4c5056;"></i>
<i style="left:2820.9px;top:1539px;width:1.9px;height:8.5px;background:#3fa0e6;"></i>
<i style="left:2824.85px;top:1539px;width:1.9px;height:8.5px;background:#3fa0e6;"></i>
<i style="left:2828.8px;top:1539px;width:1.9px;height:8.5px;background:#3fa0e6;"></i>
<i style="left:2832.75px;top:1539px;width:1.9px;height:8.5px;background:#3fa0e6;"></i>
<i style="left:2836.7px;top:1539px;width:1.9px;height:8.5px;background:#3fa0e6;"></i>
<i style="left:2840.65px;top:1539px;width:1.9px;height:8.5px;background:#3fa0e6;"></i>
<i style="left:2844.6px;top:1539px;width:1.9px;height:8.5px;background:#71767e;"></i>
<i style="left:2848.55px;top:1539px;width:1.9px;height:8.5px;background:#71767e;"></i>
<i style="left:2852.5px;top:1539px;width:1.9px;height:8.5px;background:#71767e;"></i>
<i style="left:2856.45px;top:1539px;width:1.9px;height:8.5px;background:#71767e;"></i>
<i style="left:2860.4px;top:1539px;width:1.9px;height:8.5px;background:#71767e;"></i>
<i style="left:2864.35px;top:1539px;width:1.9px;height:8.5px;background:#71767e;"></i>
<i style="left:2868.3px;top:1539px;width:1.9px;height:8.5px;background:#71767e;"></i>
<i style="left:2872.25px;top:1539px;width:1.9px;height:8.5px;background:#71767e;"></i>
<i style="left:2876.2px;top:1539px;width:1.9px;height:8.5px;background:#71767e;"></i>
<i style="left:2880.15px;top:1539px;width:1.9px;height:8.5px;background:#71767e;"></i>
<i style="left:2884.1px;top:1539px;width:1.9px;height:8.5px;background:#71767e;"></i>
<i style="left:2888.05px;top:1539px;width:1.9px;height:8.5px;background:#71767e;"></i>
<i style="left:2892px;top:1539px;width:1.9px;height:8.5px;background:#71767e;"></i>
<i style="left:2895.95px;top:1539px;width:1.9px;height:8.5px;background:#71767e;"></i>
<i style="left:2899.9px;top:1539px;width:1.9px;height:8.5px;background:#71767e;"></i>
<i style="left:2903.85px;top:1539px;width:1.9px;height:8.5px;background:#71767e;"></i>
<i style="left:2907.8px;top:1539px;width:1.9px;height:8.5px;background:#71767e;"></i>
<i style="left:2911.75px;top:1539px;width:1.9px;height:8.5px;background:#71767e;"></i>
<i style="left:2915.7px;top:1539px;width:1.9px;height:8.5px;background:#71767e;"></i>
<i style="left:2919.65px;top:1539px;width:1.9px;height:8.5px;background:#71767e;"></i>
<b class="tc f165" style="left:2870.91px;top:1558px;color:#5fb4f0;transform:scaleX(1.029);">Drum Group</b>
<i style="left:2869.2px;top:1581px;width:4px;height:24px;background:#3fa0e6;"></i>
<i style="left:2870.2px;top:1607px;width:1px;height:22px;background:#3f4349;"></i>
<b class="tc f165" style="left:2843.69px;top:1612px;color:#f2f2f2;transform:scaleX(1.023);">-12.5</b>
<b class="tc f165" style="left:2898.2px;top:1612px;color:#f2f2f2;transform:scaleX(1.004);">&lt;C&gt;</b>
<i style="left:2820.8px;top:1641px;width:101.8px;height:29.5px;background:#3f434a;border-radius:4.500px 4.500px 4.500px 0;box-shadow:0 0 0 1.500px #1e2024,0 2px 2px 1px rgba(0,0,0,.25);"></i>
<i style="left:2820.8px;top:1670.3px;width:51px;height:31px;background:#3f434a;border-radius:0 0 4.500px 4.500px;box-shadow:0 0 0 1.500px #1e2024,0 2px 2px 1px rgba(0,0,0,.25);"></i>
<i style="left:2820.8px;top:1665px;width:51px;height:10px;background:#3f434a;"></i>
<i style="left:2820.8px;top:1670.3px;width:51px;height:1.3px;background:#2a2d31;"></i>
<svg class="u" style="left:2834.8px;top:1679.5px;width:24px;height:13.5px;color:#c9cbce;"><use href="#link"/></svg>
<i style="left:2871.1px;top:1641px;width:1.3px;height:29.5px;background:#2a2d31;"></i>
<b class="tc f195" style="left:2845.78px;top:1644px;color:#dadada;transform:scaleX(0.950);">M</b>
<b class="tc f195" style="left:2896.82px;top:1644px;color:#dadada;transform:scaleX(0.950);">S</b>
<i style="left:2834.2px;top:1714px;width:19.7px;height:17px;background:#3a3d42;"></i>
<i style="left:2834.2px;top:1731.5px;width:19.7px;height:173.3px;background:#22262b;"></i>
<b class="tr f115" style="left:2830.73px;top:1732px;color:#cfd1d4;font-weight:700;transform:scaleX(0.950);">10</b>
<i style="left:2837.5px;top:1737.2px;width:13.3px;height:1.3px;background:#1d4763;"></i>
<b class="tr f115" style="left:2830.71px;top:1746px;color:#cfd1d4;font-weight:700;transform:scaleX(0.950);">6</b>
<i style="left:2837.5px;top:1750.7px;width:13.3px;height:1.3px;background:#1d4763;"></i>
<b class="tr f115" style="left:2830.71px;top:1769px;color:#cfd1d4;font-weight:700;transform:scaleX(0.950);">0</b>
<i style="left:2837.5px;top:1774.2px;width:13.3px;height:1.3px;background:#7d8084;"></i>
<b class="tr f115" style="left:2830.69px;top:1792px;color:#cfd1d4;font-weight:700;transform:scaleX(0.950);">-6</b>
<i style="left:2837.5px;top:1797.2px;width:13.3px;height:1.3px;background:#1d4763;"></i>
<b class="tr f115" style="left:2830.7px;top:1812px;color:#cfd1d4;font-weight:700;transform:scaleX(0.950);">-12</b>
<i style="left:2837.5px;top:1817.2px;width:13.3px;height:1.3px;background:#1d4763;"></i>
<b class="tr f115" style="left:2830.7px;top:1836px;color:#cfd1d4;font-weight:700;transform:scaleX(0.950);">-24</b>
<i style="left:2837.5px;top:1841.2px;width:13.3px;height:1.3px;background:#1d4763;"></i>
<b class="tr f115" style="left:2830.7px;top:1860px;color:#cfd1d4;font-weight:700;transform:scaleX(0.950);">-36</b>
<i style="left:2837.5px;top:1865.2px;width:13.3px;height:1.3px;background:#1d4763;"></i>
<b class="tr f115" style="left:2830.7px;top:1875px;color:#cfd1d4;font-weight:700;transform:scaleX(0.950);">-48</b>
<i style="left:2837.5px;top:1880.2px;width:13.3px;height:1.3px;background:#1d4763;"></i>
<i style="left:2837.5px;top:1892.2px;width:13.3px;height:1.3px;background:#1d4763;"></i>
<i style="left:2837.2px;top:1896.8px;width:6.2px;height:6.3px;background:;background:repeating-linear-gradient(180deg,#58b0e8 0,#58b0e8 1.500px,#2f6f9c 1.500px,#2f6f9c 2.300px)"></i>
<i style="left:2844.9px;top:1896.8px;width:6.2px;height:6.3px;background:;background:repeating-linear-gradient(180deg,#58b0e8 0,#58b0e8 1.500px,#2f6f9c 1.500px,#2f6f9c 2.300px)"></i>
<i style="left:2899.1px;top:1714px;width:16px;height:5.5px;background:#6ec3f4;"></i>
<i style="left:2899.1px;top:1722.5px;width:7.5px;height:5px;background:#5d6168;"></i>
<i style="left:2907.6px;top:1722.5px;width:7.5px;height:5px;background:#5d6168;"></i>
<i style="left:2859.9px;top:1833.5px;width:21px;height:71.3px;background:#6e747b;"></i>
<i style="left:2861px;top:1846.6px;width:18px;height:1.2px;background:#8d9399;"></i>
<i style="left:2861px;top:1858.4px;width:18px;height:1.2px;background:#8d9399;"></i>
<i style="left:2861px;top:1869px;width:18px;height:1.2px;background:#8d9399;"></i>
<i style="left:2869px;top:1738.5px;width:2.8px;height:141px;background:#1c1e21;"></i>
<i style="left:2862.4px;top:1755px;width:16px;height:1.2px;background:#8a9097;"></i>
<i style="left:2862.4px;top:1774px;width:16px;height:2px;background:#e6e6e6;"></i>
<i style="left:2858.7px;top:1784.8px;width:24.3px;height:52.6px;background:;background:linear-gradient(180deg,#5fb5de 0,#54a9d4 6%,#2a6f96 9%,#3a8bb5 22%,#459fcb 36%,#429bc8 48%,#1b4560 48.500%,#1b4560 51.500%,#3f97c4 52%,#3f97c4 84%,#2f7ba4 93%,#1d4f6c 100%);border-radius:4.500px;box-shadow:inset 2.500px 0 2px rgba(10,40,60,.5),inset -2.500px 0 2px rgba(10,40,60,.5),0 0 0 1.300px #1c2a34,0 2px 3px 1px rgba(0,0,0,.35)"></i>
<svg class="u" style="left:2897.1px;top:1874.8px;width:20px;height:20px;"><use href="#knob"/></svg>
<b class="tc f160" style="left:2833.22px;top:1915px;color:#f0f0f0;font-weight:700;transform:scaleX(0.970);">19</b>
<svg class="u" style="left:2898.2px;top:1914.4px;width:20.5px;height:17.4px;color:#a9acb0;"><use href="#bus"/></svg>
<i style="left:2817.9px;top:1940px;width:106.5px;height:22.6px;background:#26282c;border-radius:1.500px"></i>
<b class="tc f150" style="left:2870.89px;top:1942px;color:#8b8e94;transform:scaleX(1.043);">Auto: Off</b>
<i style="left:2809.9px;top:1972px;width:121.3px;height:21.3px;background:#e8e8e8;"></i>
<b class="tc f170" style="left:2870.89px;top:1974px;color:#1c1f23;transform:scaleX(0.972);">PRLComp1</b>
<i style="left:2934.45px;top:852.8px;width:121.3px;height:539.6px;background:#42464e;"></i>
<i style="left:2934.45px;top:852.8px;width:121.3px;height:4.3px;background:#5d6269;"></i>
<i style="left:2934.45px;top:859.8px;width:121.3px;height:28px;background:#203646;"></i>
<b class="tc f180" style="left:2985.66px;top:865px;color:#f0f0f0;transform:scaleX(0.920);">Mix FX</b>
<svg class="u" style="left:3037.95px;top:870.8px;width:12px;height:7px;color:#9a9ea4;"><use href="#td"/></svg>
<svg class="u" style="left:2939.45px;top:897.5px;width:16.4px;height:15.4px;color:#2f9ef0;"><use href="#pw"/></svg>
<b class="t f175" style="left:2961.25px;top:895px;color:#ececec;transform:scaleX(0.950);">Inserts</b>
<svg class="u" style="left:3018.95px;top:900.8px;width:12px;height:7px;color:#8a8e94;"><use href="#td"/></svg>
<svg class="u" style="left:3037.75px;top:897.8px;width:12.5px;height:12.5px;color:#8a8e94;"><use href="#pl"/></svg>
<i style="left:2934.45px;top:919.3px;width:121.3px;height:29.3px;background:#5f646b;"></i>
<svg class="u" style="left:2940.15px;top:928.1px;width:14.9px;height:14px;color:#74c8fb;"><use href="#pw"/></svg>
<svg class="u" style="left:3036.25px;top:930.8px;width:12px;height:7px;color:#6f747b;"><use href="#td"/></svg>
<b class="t f155" style="left:2959.25px;top:926px;color:#ececec;transform:scaleX(0.954);">Pro EQ</b>
<i style="left:2934.45px;top:950.7px;width:121.3px;height:29.3px;background:#5f646b;"></i>
<svg class="u" style="left:2940.15px;top:959.5px;width:14.9px;height:14px;color:#74c8fb;"><use href="#pw"/></svg>
<svg class="u" style="left:3036.25px;top:962.2px;width:12px;height:7px;color:#6f747b;"><use href="#td"/></svg>
<b class="t f155" style="left:2959.25px;top:957px;color:#ececec;transform:scaleX(0.995);">Compressor</b>
<i style="left:2934.45px;top:982.1px;width:121.3px;height:29.3px;background:#5f646b;"></i>
<svg class="u" style="left:2940.15px;top:990.9px;width:14.9px;height:14px;color:#74c8fb;"><use href="#pw"/></svg>
<svg class="u" style="left:3036.25px;top:993.6px;width:12px;height:7px;color:#6f747b;"><use href="#td"/></svg>
<b class="t f155" style="left:2959.25px;top:989px;color:#ececec;transform:scaleX(0.996);">Limiter</b>
<i style="left:2932.95px;top:1392.4px;width:124.3px;height:2.8px;background:#1d1f22;"></i>
<i style="left:2934.45px;top:1395.2px;width:121.3px;height:116.5px;background:#42464e;"></i>
<svg class="u" style="left:2939.45px;top:1401.6px;width:16.4px;height:15.4px;color:#70747b;"><use href="#pw"/></svg>
<b class="t f175" style="left:2960.95px;top:1400px;color:#ececec;transform:scaleX(0.949);">Sends</b>
<svg class="u" style="left:3037.75px;top:1402.5px;width:12.5px;height:12.5px;color:#8a8e94;"><use href="#pl"/></svg>
<i style="left:2932.95px;top:1511.7px;width:124.3px;height:3px;background:#1d1f22;"></i>
<i style="left:2934.45px;top:1514.7px;width:121.3px;height:457px;background:#42464e;"></i>
<i style="left:2934.45px;top:1515.3px;width:121.3px;height:3.5px;background:#5d6269;"></i>
<i style="left:2941.95px;top:1528px;width:108px;height:77.8px;background:#2a2d31;border-radius:3px;box-shadow:0 0 0 1.200px #3a3d43,0 1px 3px 1px rgba(0,0,0,.3)"></i>
<i style="left:2941.95px;top:1528px;width:108px;height:26.2px;background:#595d63;border-radius:3px 3px 0 0"></i>
<i style="left:2941.95px;top:1554.2px;width:108px;height:25.4px;background:#4c5056;"></i>
<i style="left:2945.45px;top:1539px;width:1.9px;height:8.5px;background:#3fa0e6;"></i>
<i style="left:2949.4px;top:1539px;width:1.9px;height:8.5px;background:#3fa0e6;"></i>
<i style="left:2953.35px;top:1539px;width:1.9px;height:8.5px;background:#3fa0e6;"></i>
<i style="left:2957.3px;top:1539px;width:1.9px;height:8.5px;background:#3fa0e6;"></i>
<i style="left:2961.25px;top:1539px;width:1.9px;height:8.5px;background:#3fa0e6;"></i>
<i style="left:2965.2px;top:1539px;width:1.9px;height:8.5px;background:#3fa0e6;"></i>
<i style="left:2969.15px;top:1539px;width:1.9px;height:8.5px;background:#3fa0e6;"></i>
<i style="left:2973.1px;top:1539px;width:1.9px;height:8.5px;background:#3fa0e6;"></i>
<i style="left:2977.05px;top:1539px;width:1.9px;height:8.5px;background:#3fa0e6;"></i>
<i style="left:2981px;top:1539px;width:1.9px;height:8.5px;background:#3fa0e6;"></i>
<i style="left:2984.95px;top:1539px;width:1.9px;height:8.5px;background:#3fa0e6;"></i>
<i style="left:2988.9px;top:1539px;width:1.9px;height:8.5px;background:#3fa0e6;"></i>
<i style="left:2992.85px;top:1539px;width:1.9px;height:8.5px;background:#71767e;"></i>
<i style="left:2996.8px;top:1539px;width:1.9px;height:8.5px;background:#71767e;"></i>
<i style="left:3000.75px;top:1539px;width:1.9px;height:8.5px;background:#71767e;"></i>
<i style="left:3004.7px;top:1539px;width:1.9px;height:8.5px;background:#71767e;"></i>
<i style="left:3008.65px;top:1539px;width:1.9px;height:8.5px;background:#71767e;"></i>
<i style="left:3012.6px;top:1539px;width:1.9px;height:8.5px;background:#71767e;"></i>
<i style="left:3016.55px;top:1539px;width:1.9px;height:8.5px;background:#71767e;"></i>
<i style="left:3020.5px;top:1539px;width:1.9px;height:8.5px;background:#71767e;"></i>
<i style="left:3024.45px;top:1539px;width:1.9px;height:8.5px;background:#71767e;"></i>
<i style="left:3028.4px;top:1539px;width:1.9px;height:8.5px;background:#71767e;"></i>
<i style="left:3032.35px;top:1539px;width:1.9px;height:8.5px;background:#71767e;"></i>
<i style="left:3036.3px;top:1539px;width:1.9px;height:8.5px;background:#71767e;"></i>
<i style="left:3040.25px;top:1539px;width:1.9px;height:8.5px;background:#71767e;"></i>
<i style="left:3044.2px;top:1539px;width:1.9px;height:8.5px;background:#71767e;"></i>
<b class="tc f165" style="left:2995.43px;top:1558px;color:#5fb4f0;transform:scaleX(1.011);">Main</b>
<i style="left:2993.75px;top:1581px;width:4px;height:24px;background:#3fa0e6;"></i>
<i style="left:2994.75px;top:1607px;width:1px;height:22px;background:#3f4349;"></i>
<b class="tc f165" style="left:2968.24px;top:1612px;color:#f2f2f2;transform:scaleX(1.055);">0dB</b>
<b class="tc f165" style="left:3022.75px;top:1612px;color:#f2f2f2;transform:scaleX(1.004);">&lt;C&gt;</b>
<i style="left:2945.35px;top:1641px;width:101.8px;height:29.5px;background:#3f434a;border-radius:4.500px 4.500px 4.500px 0;box-shadow:0 0 0 1.500px #1e2024,0 2px 2px 1px rgba(0,0,0,.25);"></i>
<i style="left:2945.35px;top:1670.3px;width:51px;height:31px;background:#3f434a;border-radius:0 0 4.500px 4.500px;box-shadow:0 0 0 1.500px #1e2024,0 2px 2px 1px rgba(0,0,0,.25);"></i>
<i style="left:2945.35px;top:1665px;width:51px;height:10px;background:#3f434a;"></i>
<i style="left:2945.35px;top:1670.3px;width:51px;height:1.3px;background:#2a2d31;"></i>
<svg class="u" style="left:2959.35px;top:1679.5px;width:24px;height:13.5px;color:#c9cbce;"><use href="#link"/></svg>
<i style="left:2995.65px;top:1641px;width:1.3px;height:29.5px;background:#2a2d31;"></i>
<b class="tc f195" style="left:2970.33px;top:1644px;color:#dadada;transform:scaleX(0.950);">M</b>
<b class="tc f195" style="left:3021.37px;top:1644px;color:#dadada;transform:scaleX(0.950);">S</b>
<i style="left:2958.75px;top:1714px;width:19.7px;height:17px;background:#3a3d42;"></i>
<i style="left:2958.75px;top:1731.5px;width:19.7px;height:173.3px;background:#22262b;"></i>
<b class="tr f115" style="left:2955.28px;top:1732px;color:#cfd1d4;font-weight:700;transform:scaleX(0.950);">10</b>
<i style="left:2962.05px;top:1737.2px;width:13.3px;height:1.3px;background:#1d4763;"></i>
<b class="tr f115" style="left:2955.26px;top:1746px;color:#cfd1d4;font-weight:700;transform:scaleX(0.950);">6</b>
<i style="left:2962.05px;top:1750.7px;width:13.3px;height:1.3px;background:#1d4763;"></i>
<b class="tr f115" style="left:2955.26px;top:1769px;color:#cfd1d4;font-weight:700;transform:scaleX(0.950);">0</b>
<i style="left:2962.05px;top:1774.2px;width:13.3px;height:1.3px;background:#7d8084;"></i>
<b class="tr f115" style="left:2955.24px;top:1792px;color:#cfd1d4;font-weight:700;transform:scaleX(0.950);">-6</b>
<i style="left:2962.05px;top:1797.2px;width:13.3px;height:1.3px;background:#1d4763;"></i>
<b class="tr f115" style="left:2955.25px;top:1812px;color:#cfd1d4;font-weight:700;transform:scaleX(0.950);">-12</b>
<i style="left:2962.05px;top:1817.2px;width:13.3px;height:1.3px;background:#1d4763;"></i>
<b class="tr f115" style="left:2955.25px;top:1836px;color:#cfd1d4;font-weight:700;transform:scaleX(0.950);">-24</b>
<i style="left:2962.05px;top:1841.2px;width:13.3px;height:1.3px;background:#1d4763;"></i>
<b class="tr f115" style="left:2955.25px;top:1860px;color:#cfd1d4;font-weight:700;transform:scaleX(0.950);">-36</b>
<i style="left:2962.05px;top:1865.2px;width:13.3px;height:1.3px;background:#1d4763;"></i>
<b class="tr f115" style="left:2955.25px;top:1875px;color:#cfd1d4;font-weight:700;transform:scaleX(0.950);">-48</b>
<i style="left:2962.05px;top:1880.2px;width:13.3px;height:1.3px;background:#1d4763;"></i>
<i style="left:2962.05px;top:1892.2px;width:13.3px;height:1.3px;background:#1d4763;"></i>
<i style="left:2961.75px;top:1897px;width:6px;height:7px;background:#4aa3e0;"></i>
<i style="left:2969.75px;top:1894px;width:6px;height:10px;background:#4aa3e0;"></i>
<i style="left:3023.65px;top:1714px;width:16px;height:5.5px;background:#6ec3f4;"></i>
<i style="left:3023.65px;top:1722.5px;width:7.5px;height:5px;background:#5d6168;"></i>
<i style="left:3032.15px;top:1722.5px;width:7.5px;height:5px;background:#5d6168;"></i>
<i style="left:2984.45px;top:1797.5px;width:21px;height:107.3px;background:#6e747b;"></i>
<i style="left:2985.55px;top:1809px;width:18px;height:1.2px;background:#8d9399;"></i>
<i style="left:2985.55px;top:1827.2px;width:18px;height:1.2px;background:#8d9399;"></i>
<i style="left:2985.55px;top:1846.6px;width:18px;height:1.2px;background:#8d9399;"></i>
<i style="left:2985.55px;top:1858.4px;width:18px;height:1.2px;background:#8d9399;"></i>
<i style="left:2985.55px;top:1869px;width:18px;height:1.2px;background:#8d9399;"></i>
<i style="left:2993.55px;top:1738.5px;width:2.8px;height:141px;background:#1c1e21;"></i>
<i style="left:2983.25px;top:1748.8px;width:24.3px;height:52.6px;background:;background:linear-gradient(180deg,#5fb5de 0,#54a9d4 6%,#2a6f96 9%,#3a8bb5 22%,#459fcb 36%,#429bc8 48%,#1b4560 48.500%,#1b4560 51.500%,#3f97c4 52%,#3f97c4 84%,#2f7ba4 93%,#1d4f6c 100%);border-radius:4.500px;box-shadow:inset 2.500px 0 2px rgba(10,40,60,.5),inset -2.500px 0 2px rgba(10,40,60,.5),0 0 0 1.300px #1c2a34,0 2px 3px 1px rgba(0,0,0,.35)"></i>
<svg class="u" style="left:3021.65px;top:1874.8px;width:20px;height:20px;"><use href="#knob"/></svg>
<b class="tc f160" style="left:2957.77px;top:1915px;color:#f0f0f0;font-weight:700;transform:scaleX(0.970);">20</b>
<svg class="u" style="left:3022.75px;top:1914.4px;width:20.5px;height:17.4px;color:#a9acb0;"><use href="#bus"/></svg>
<i style="left:2942.45px;top:1940px;width:106.5px;height:22.6px;background:#26282c;border-radius:1.500px"></i>
<b class="tc f150" style="left:2995.44px;top:1942px;color:#8b8e94;transform:scaleX(1.043);">Auto: Off</b>
<i style="left:2934.45px;top:1972px;width:121.3px;height:21.3px;background:#2d3035;"></i>
<b class="tc f170" style="left:2995.46px;top:1974px;color:#fff;transform:scaleX(0.983);">Drum Group</b>
<i style="left:3713.5px;top:853px;width:121.5px;height:658.5px;background:#757d87;"></i>
<i style="left:3713.5px;top:853.3px;width:121.5px;height:4px;background:#8f969f;"></i>
<i style="left:3713.5px;top:859.5px;width:121.5px;height:28.3px;background:#203646;"></i>
<b class="tc f180" style="left:3765.61px;top:865px;color:#f0f0f0;transform:scaleX(0.929);">Mix FX</b>
<svg class="u" style="left:3817.5px;top:870.5px;width:12px;height:7px;color:#c9cbce;"><use href="#td"/></svg>
<i style="left:3713.5px;top:889.3px;width:121.5px;height:28.3px;background:#4d5158;"></i>
<svg class="u" style="left:3718.5px;top:895px;width:16.4px;height:15.4px;color:#2f9ef0;"><use href="#pw"/></svg>
<b class="t f175" style="left:3739.5px;top:894px;color:#ececec;transform:scaleX(0.960);">Inserts</b>
<svg class="u" style="left:3797.5px;top:900px;width:12px;height:7px;color:#8a8e94;"><use href="#td"/></svg>
<svg class="u" style="left:3817px;top:897px;width:12.5px;height:12.5px;color:#a4a8ad;"><use href="#pl"/></svg>
<i style="left:3713.5px;top:919.3px;width:121.5px;height:29px;background:#5f646b;"></i>
<svg class="u" style="left:3719.2px;top:928.1px;width:14.9px;height:14px;color:#74c8fb;"><use href="#pw"/></svg>
<svg class="u" style="left:3815.5px;top:930.8px;width:12px;height:7px;color:#6f747b;"><use href="#td"/></svg>
<b class="t f155" style="left:3738.3px;top:926px;color:#ececec;transform:scaleX(0.954);">Pro EQ</b>
<svg class="u" style="left:3714.5px;top:951px;width:120.5px;height:92.5px;" viewBox="0 0 120.5 92.5"><rect width="120.5" height="92.5" fill="#171b1f"/><path d="M0 0V92.5M0 0V92.5M7.07 0V92.5M12.09 0V92.5M15.98 0V92.5M19.16 0V92.5M21.85 0V92.5M24.18 0V92.5M26.24 0V92.5M28.08 0V92.5M40.17 0V92.5M47.24 0V92.5M52.26 0V92.5M56.15 0V92.5M59.33 0V92.5M62.02 0V92.5M64.35 0V92.5M66.4 0V92.5M68.24 0V92.5M80.33 0V92.5M87.41 0V92.5M92.42 0V92.5M96.32 0V92.5M99.5 0V92.5M102.19 0V92.5M104.52 0V92.5M106.57 0V92.5M108.41 0V92.5M120.5 0V92.5" stroke="#1a3346" stroke-width="1.100" fill="none"/><path d="M0 15H120.5 M0 31H120.5 M0 47H120.5 M0 63H120.5 M0 79H120.5" stroke="#1a3346" stroke-width="1.100"/><rect y="47" width="120.5" height="45.500" fill="#274a66" opacity=".22"/><path d="M0 92C3 70 7 52 14 48C30 45.500 80 47 110 46C114 46 118 47 121 49" fill="none" stroke="#e8eef4" stroke-width="1.600"/></svg>
<i style="left:3713.5px;top:1045.8px;width:121.5px;height:28.7px;background:#5f646b;"></i>
<svg class="u" style="left:3719.2px;top:1054.6px;width:14.9px;height:14px;color:#74c8fb;"><use href="#pw"/></svg>
<svg class="u" style="left:3815.5px;top:1057.3px;width:12px;height:7px;color:#6f747b;"><use href="#td"/></svg>
<b class="t f155" style="left:3738.3px;top:1053px;color:#ececec;transform:scaleX(0.995);">Compressor</b>
<i style="left:3713.5px;top:1076.6px;width:121.5px;height:28.7px;background:#5f646b;"></i>
<svg class="u" style="left:3719.2px;top:1085.4px;width:14.9px;height:14px;color:#74c8fb;"><use href="#pw"/></svg>
<svg class="u" style="left:3815.5px;top:1088.1px;width:12px;height:7px;color:#6f747b;"><use href="#td"/></svg>
<b class="t f155" style="left:3738.3px;top:1083px;color:#ececec;transform:scaleX(0.996);">Limiter</b>
<i style="left:3713.5px;top:1107.4px;width:121.5px;height:29.5px;background:#393c41;"></i>
<b class="t f155" style="left:3715.5px;top:1113px;color:#f0f0f0;transform:scaleX(0.970);">Input</b>
<i style="left:3713.5px;top:1132.2px;width:121.5px;height:4.7px;background:#4a4e54;"></i>
<i style="left:3713.5px;top:1132.2px;width:13px;height:4.7px;background:#4aa8ea;"></i>
<i style="left:3713.5px;top:1138.7px;width:121.5px;height:29.5px;background:#393c41;"></i>
<b class="t f155" style="left:3715.5px;top:1144px;color:#f0f0f0;transform:scaleX(0.970);">Ceiling</b>
<i style="left:3713.5px;top:1163.5px;width:121.5px;height:4.7px;background:#4a4e54;"></i>
<i style="left:3713.5px;top:1163.5px;width:115px;height:4.7px;background:#4aa8ea;"></i>
<i style="left:3713.5px;top:1170px;width:121.5px;height:29.5px;background:#393c41;"></i>
<b class="t f155" style="left:3715.5px;top:1176px;color:#f0f0f0;transform:scaleX(0.970);">Threshold</b>
<i style="left:3713.5px;top:1194.8px;width:121.5px;height:4.7px;background:#4a4e54;"></i>
<i style="left:3713.5px;top:1194.8px;width:121.5px;height:4.7px;background:#4aa8ea;"></i>
<i style="left:3713.5px;top:1201px;width:121.5px;height:4px;background:#393c41;"></i>
<i style="left:3713.5px;top:1207px;width:121.5px;height:5px;background:#4a4e54;"></i>
<i style="left:3713.5px;top:1212px;width:121.5px;height:7.5px;background:#393c41;"></i>
<i style="left:3713.5px;top:1219.8px;width:121.5px;height:29.8px;background:#5f646b;"></i>
<svg class="u" style="left:3719.2px;top:1228.6px;width:14.9px;height:14px;color:#74c8fb;"><use href="#pw"/></svg>
<svg class="u" style="left:3815.5px;top:1231.3px;width:12px;height:7px;color:#6f747b;"><use href="#td"/></svg>
<b class="t f155" style="left:3738.3px;top:1227px;color:#ececec;transform:scaleX(0.993);">Sonarworks..</b>
<i style="left:3712.5px;top:1373.7px;width:123.5px;height:3px;background:#1d1f22;"></i>
<i style="left:3713.5px;top:1377.5px;width:121.5px;height:28.5px;background:#42464d;"></i>
<svg class="u" style="left:3718.5px;top:1384px;width:16.4px;height:15.4px;color:#6b6f76;"><use href="#pw"/></svg>
<b class="t f175" style="left:3738px;top:1384px;color:#ececec;transform:scaleX(0.970);">Post</b>
<svg class="u" style="left:3797.5px;top:1389.5px;width:12px;height:7px;color:#a4a8ad;"><use href="#td"/></svg>
<svg class="u" style="left:3817px;top:1386px;width:12.5px;height:12.5px;color:#b9bcc0;"><use href="#pl"/></svg>
<i style="left:3712.5px;top:1511.5px;width:123.5px;height:3.8px;background:#1d1f22;"></i>
<i style="left:3713.5px;top:1515.5px;width:121.5px;height:3px;background:#8f969f;"></i>
<i style="left:3713.5px;top:1518.5px;width:121.5px;height:1.5px;background:#1d1f22;"></i>
<i style="left:3713.5px;top:1520px;width:121.5px;height:452px;background:#757d87;"></i>
<i style="left:3720.8px;top:1528px;width:107.7px;height:102px;background:#7a828c;border-radius:3px;box-shadow:0 0 0 1.200px #4d535b"></i>
<i style="left:3720.8px;top:1528px;width:107.7px;height:25.5px;background:#7a828c;border-radius:3px 3px 0 0"></i>
<i style="left:3720.8px;top:1554.8px;width:107.7px;height:24.7px;background:#5a5e65;"></i>
<b class="tc f175" style="left:3774.51px;top:1558px;color:#f2f2f2;transform:scaleX(0.973);">MON L + R</b>
<i style="left:3720.8px;top:1580.5px;width:107.7px;height:25.7px;background:#202328;"></i>
<i style="left:3774.3px;top:1580.5px;width:1px;height:25.7px;background:#2c3036;"></i>
<b class="tc f150" style="left:3747.31px;top:1586px;color:#3f97d0;">-∞</b>
<b class="tc f150" style="left:3802.31px;top:1586px;color:#3f97d0;">-∞</b>
<i style="left:3774.3px;top:1608px;width:1px;height:22px;background:#5d646d;"></i>
<b class="tc f175" style="left:3748.29px;top:1611px;color:#f4f4f4;transform:scaleX(0.970);">0dB</b>
<b class="tc f175" style="left:3801.31px;top:1611px;color:#818993;transform:scaleX(0.970);">0</b>
<i style="left:3723.5px;top:1640.4px;width:102.5px;height:60.6px;background:#5a5f67;border-radius:4.500px;box-shadow:0 0 0 1.500px #2c2f34,0 2px 2px 1px rgba(0,0,0,.2)"></i>
<i style="left:3723.5px;top:1670.4px;width:102.5px;height:1.3px;background:#33363b;"></i>
<i style="left:3774px;top:1640.4px;width:1.3px;height:30px;background:#33363b;"></i>
<i style="left:3762.5px;top:1671px;width:1.3px;height:30px;background:#33363b;"></i>
<i style="left:3786.5px;top:1671px;width:1.3px;height:30px;background:#33363b;"></i>
<b class="tc f205" style="left:3748.98px;top:1643px;color:#ececec;transform:scaleX(0.930);">M</b>
<b class="tc f205" style="left:3800.02px;top:1643px;color:#ececec;transform:scaleX(0.930);">S</b>
<svg class="u" style="left:3734px;top:1678px;width:19px;height:16px;" viewBox="0 0 19 16"><path d="M8 1L18 15H1L8.500 7z" fill="#ececec"/><path d="M1 2L13 14" stroke="#ececec" stroke-width="2.200"/></svg>
<svg class="u" style="left:3770px;top:1677.5px;width:9px;height:17px;" viewBox="0 0 9 17"><path d="M4.500 0V17" stroke="#ececec" stroke-width="1.400"/><rect x="1" y="3.500" width="7" height="9" rx="1" fill="#ececec"/></svg>
<svg class="u" style="left:3793.5px;top:1679.5px;width:24px;height:13.5px;color:#ececec;"><use href="#link"/></svg>
<i style="left:3728px;top:1712.7px;width:18.5px;height:7px;background:#6ec3f4;"></i>
<i style="left:3728px;top:1721px;width:18.5px;height:4.5px;background:#5d6168;"></i>
<i style="left:3728px;top:1726.5px;width:8.5px;height:5px;background:#5d6168;"></i>
<i style="left:3738px;top:1726.5px;width:8.5px;height:5px;background:#5d6168;"></i>
<i style="left:3764px;top:1803px;width:20.5px;height:101.5px;background:#8a919a;"></i>
<i style="left:3765px;top:1808px;width:7.5px;height:1.2px;background:#a4aab2;"></i>
<i style="left:3776px;top:1808px;width:7.5px;height:1.2px;background:#a4aab2;"></i>
<i style="left:3765px;top:1827px;width:7.5px;height:1.2px;background:#a4aab2;"></i>
<i style="left:3776px;top:1827px;width:7.5px;height:1.2px;background:#a4aab2;"></i>
<i style="left:3765px;top:1847px;width:7.5px;height:1.2px;background:#a4aab2;"></i>
<i style="left:3776px;top:1847px;width:7.5px;height:1.2px;background:#a4aab2;"></i>
<i style="left:3765px;top:1859px;width:7.5px;height:1.2px;background:#a4aab2;"></i>
<i style="left:3776px;top:1859px;width:7.5px;height:1.2px;background:#a4aab2;"></i>
<i style="left:3765px;top:1870px;width:7.5px;height:1.2px;background:#a4aab2;"></i>
<i style="left:3776px;top:1870px;width:7.5px;height:1.2px;background:#a4aab2;"></i>
<i style="left:3773px;top:1738px;width:2.5px;height:141px;background:#1c1e21;"></i>
<i style="left:3761.8px;top:1748.8px;width:24.3px;height:52.6px;background:;background:linear-gradient(180deg,#5fb5de 0,#54a9d4 6%,#2a6f96 9%,#3a8bb5 22%,#459fcb 36%,#429bc8 48%,#1b4560 48.500%,#1b4560 51.500%,#3f97c4 52%,#3f97c4 84%,#2f7ba4 93%,#1d4f6c 100%);border-radius:4.500px;box-shadow:inset 2.500px 0 2px rgba(10,40,60,.5),inset -2.500px 0 2px rgba(10,40,60,.5),0 0 0 1.300px #1c2a34,0 2px 3px 1px rgba(0,0,0,.35)"></i>
<i style="left:3790px;top:1732px;width:20px;height:172px;background:#22262b;"></i>
<b class="tr f115" style="left:3832.01px;top:1733px;color:#e6e8ea;font-weight:700;transform:scaleX(0.950);">6</b>
<i style="left:3794px;top:1735px;width:12px;height:1.3px;background:#1d4763;"></i>
<b class="tr f115" style="left:3832.01px;top:1743px;color:#e6e8ea;font-weight:700;transform:scaleX(0.950);">0</b>
<i style="left:3794px;top:1745.5px;width:12px;height:1.3px;background:#8a8d91;"></i>
<b class="tr f115" style="left:3831.99px;top:1759px;color:#e6e8ea;font-weight:700;transform:scaleX(0.950);">-6</b>
<i style="left:3794px;top:1761.1px;width:12px;height:1.3px;background:#1d4763;"></i>
<b class="tr f115" style="left:3832px;top:1773px;color:#e6e8ea;font-weight:700;transform:scaleX(0.950);">-12</b>
<i style="left:3794px;top:1775.5px;width:12px;height:1.3px;background:#1d4763;"></i>
<b class="tr f115" style="left:3832px;top:1804px;color:#e6e8ea;font-weight:700;transform:scaleX(0.950);">-24</b>
<i style="left:3794px;top:1806.1px;width:12px;height:1.3px;background:#1d4763;"></i>
<b class="tr f115" style="left:3832px;top:1836px;color:#e6e8ea;font-weight:700;transform:scaleX(0.950);">-36</b>
<i style="left:3794px;top:1838px;width:12px;height:1.3px;background:#1d4763;"></i>
<b class="tr f115" style="left:3832px;top:1866px;color:#e6e8ea;font-weight:700;transform:scaleX(0.950);">-48</b>
<i style="left:3794px;top:1868px;width:12px;height:1.3px;background:#1d4763;"></i>
<b class="tr f115" style="left:3832px;top:1893px;color:#e6e8ea;font-weight:700;transform:scaleX(0.950);">-60</b>
<i style="left:3794px;top:1895px;width:12px;height:1.3px;background:#1d4763;"></i>
<svg class="u" style="left:3729.2px;top:1874.8px;width:19.6px;height:19.6px;" viewBox="0 0 20 20"><circle cx="10" cy="10" r="9.800" fill="#e2e4e6"/><path d="M10 10L3.400 3.900" stroke="#757d87" stroke-width="3"/></svg>
<i style="left:3721.5px;top:1938.8px;width:106.5px;height:23.2px;background:#3a3d42;border-radius:1.500px"></i>
<b class="tc f150" style="left:3774.49px;top:1942px;color:#8b8e94;transform:scaleX(1.043);">Auto: Off</b>
<i style="left:3713.5px;top:1972.3px;width:121.5px;height:20.5px;background:#454a50;"></i>
<b class="tc f175" style="left:3774.48px;top:1973px;color:#fff;transform:scaleX(0.970);">Main</b>
<i style="left:3711.5px;top:853px;width:2px;height:1167px;background:#2c2f34;"></i>
<i style="left:0px;top:2020px;width:3840px;height:3px;background:#0c0d0e;"></i>
<i style="left:0px;top:2023px;width:3840px;height:3px;background:#22262a;"></i>
<i style="left:0px;top:2026px;width:3840px;height:66px;background:#6f7680;"></i>
<svg class="u" style="left:720px;top:2026px;width:2140px;height:64px;" viewBox="0 0 2140 64"><path d="M5.600 0H2136.800L2118 64H20z" fill="#131313"/></svg>
<svg class="u" style="left:771px;top:2038px;width:38.5px;height:20px;" viewBox="0 0 38.500 20"><path d="M0 5.500L5 10 0 14.500zM32.500 5.500L37.500 10 32.500 14.500z" fill="#4d5560"/><circle cx="19" cy="10" r="8.800" fill="none" stroke="#6f7680" stroke-width="1.500"/><g fill="#4d5560"><rect x="12" y="9" width="3" height="2.200"/><rect x="23" y="9" width="3" height="2.200"/><rect x="13.500" y="5" width="3" height="2.200"/><rect x="21.500" y="5" width="3" height="2.200"/><rect x="17.500" y="3.500" width="3" height="2.200"/><rect x="17.800" y="14.500" width="2.500" height="2.500"/></g></svg>
<b class="tc f155" style="left:790.31px;top:2064px;color:#7f858e;transform:scaleX(1.009);">MIDI</b>
<i style="left:826.2px;top:2037.7px;width:89px;height:7.8px;background:#3a3d43;"></i>
<i style="left:915.2px;top:2037.7px;width:8.8px;height:7.8px;background:#2a2b2e;"></i>
<i style="left:826.2px;top:2049.3px;width:89px;height:7.8px;background:#3a3d43;"></i>
<i style="left:915.2px;top:2049.3px;width:8.8px;height:7.8px;background:#2a2b2e;"></i>
<i style="left:826.2px;top:2037.7px;width:9px;height:7.8px;background:#4ea9dc;"></i>
<b class="tc f155" style="left:877.2px;top:2062px;color:#b0b3b8;transform:scaleX(1.037);">Performance</b>
<svg class="u" style="left:949.2px;top:2040.7px;width:35px;height:35px;" viewBox="0 0 35 35"><g fill="#a9abae"><circle cx="32.8" cy="17.5" r="2.100"/><circle cx="30.75" cy="25.15" r="2.100"/><circle cx="25.15" cy="30.75" r="2.100"/><circle cx="17.5" cy="32.8" r="2.100"/><circle cx="9.85" cy="30.75" r="2.100"/><circle cx="4.25" cy="25.15" r="2.100"/><circle cx="2.2" cy="17.5" r="2.100"/><circle cx="4.25" cy="9.85" r="2.100"/><circle cx="9.85" cy="4.25" r="2.100"/><circle cx="17.5" cy="2.2" r="2.100"/><circle cx="25.15" cy="4.25" r="2.100"/><circle cx="30.75" cy="9.85" r="2.100"/></g></svg>
<b class="t f195" style="left:1003.6px;top:2038px;color:#e8e8e8;transform:scaleX(0.984);">44.1 kHz</b>
<b class="t f165" style="left:1003.6px;top:2063px;color:#e8e8e8;transform:scaleX(0.990);">9.3 ms</b>
<b class="t f195" style="left:1105.7px;top:2038px;color:#e8e8e8;transform:scaleX(0.988);">14:06 days</b>
<b class="t f155" style="left:1105.7px;top:2064px;color:#9a9da2;transform:scaleX(1.035);">Record Max</b>
<b class="tc f195" style="left:1298.19px;top:2038px;color:#e8e8e8;transform:scaleX(0.981);">00:00:00.000</b>
<b class="tc f155" style="left:1291.01px;top:2064px;color:#9a9da2;transform:scaleX(1.028);">Seconds</b>
<b class="tc f255" style="left:1500.22px;top:2035px;color:#e2e2e2;font-weight:700;transform:scaleX(1.123);">00001.01.01.00</b>
<b class="tc f155" style="left:1490.61px;top:2063px;color:#9a9da2;transform:scaleX(1.011);">Bars</b>
<svg class="u" style="left:1631px;top:2048px;width:175px;height:19px;" viewBox="0 0 175 19"><g fill="#c9c9c9"><path d="M16.500 0V19L0 9.500z"/><path d="M46 0V19L32.700 9.500zM60 0V19L46 9.500z"/><path d="M80.800 0V19L94 9.500zM94 0V19L107.200 9.500z"/><path d="M120.200 0V19L136.700 9.500z"/><path d="M156.300 0h1.700v19h-1.700zM174.900 0V19L159.500 9.500z"/></g></svg>
<i style="left:1837.6px;top:2042.9px;width:30.1px;height:30.4px;background:#29acd9;"></i>
<svg class="u" style="left:1894.4px;top:2042.9px;width:27px;height:30.4px;" viewBox="0 0 27 30.400"><path d="M0 0V30.400L27 15.200z" fill="#c9c9c9"/></svg>
<i style="left:1941.8px;top:2042.8px;width:30.4px;height:30.4px;background:#cfcfcf;border-radius:50%"></i>
<svg class="u" style="left:1996.6px;top:2043.5px;width:47.5px;height:29.5px;" viewBox="0 0 47.500 29.500"><path d="M19 27.900H14.750A12.900 12.900 0 0 1 14.750 1.600H32.750A12.900 12.900 0 0 1 32.750 27.900H28L32.500 18M19 27.900L23.500 18" fill="none" stroke="#4fc3f0" stroke-width="2.800" stroke-linejoin="round" stroke-linecap="round"/></svg>
<b class="tc f175" style="left:2078.71px;top:2036px;color:#5686ad;font-weight:700;">L</b>
<b class="tc f175" style="left:2079.72px;top:2060px;color:#5686ad;font-weight:700;">R</b>
<b class="t f195" style="left:2095.3px;top:2035px;color:#ececec;transform:scaleX(0.986);">00001.01.01.00</b>
<b class="t f195" style="left:2095.3px;top:2058px;color:#ececec;transform:scaleX(0.986);">00097.01.01.00</b>
<svg class="u" style="left:2264.5px;top:2041px;width:24px;height:10px;" viewBox="0 0 24 10"><path d="M0 3H6Q9 3 10.500 5.500T15 8H24" fill="none" stroke="#a9abae" stroke-width="1.500"/><path d="M0 8h2M4 8h2M8 8h2" stroke="#a9abae" stroke-width="1.200"/></svg>
<svg class="u" style="left:2304px;top:2040px;width:23px;height:12px;" viewBox="0 0 23 12"><path d="M1 0V12" stroke="#a9abae" stroke-width="1.500"/><path d="M3.500 6h1.500M6.500 6h1.500" stroke="#a9abae" stroke-width="1.300"/><path d="M10.500 0v12" stroke="#a9abae" stroke-width="1.500"/><path d="M11 2.500H23V9.500H11z" fill="#a9abae"/></svg>
<svg class="u" style="left:2267.5px;top:2063.5px;width:16px;height:16px;" viewBox="0 0 16 16"><path d="M8 0l1.200 2.300 2.300-.9.400 2.500 2.500.400-.9 2.300L16 8l-2.500 1.400.9 2.300-2.500.400-.400 2.500-2.300-.9L8 16l-1.200-2.300-2.300.9-.400-2.500-2.500-.400.9-2.300L0 8l2.500-1.400-.9-2.300 2.500-.400.400-2.500 2.300.9z" fill="#a9abae"/><circle cx="8" cy="8" r="2.800" fill="#131313"/></svg>
<svg class="u" style="left:2302px;top:2066px;width:26.5px;height:11px;" viewBox="0 0 26.500 11"><path d="M0 5.500h2M3.500 5.500h2M21 5.500h2M24.500 5.500h2" stroke="#c92a2a" stroke-width="1.300"/><path d="M7 0v11M19.500 0v11" stroke="#c92a2a" stroke-width="1.600"/><rect x="7" y="2.500" width="12.500" height="6" fill="#c92a2a"/></svg>
<i style="left:2350.6px;top:2040.5px;width:13.4px;height:13.4px;background:#7d8a88;border-radius:50%"></i>
<svg class="u" style="left:2378.5px;top:2039px;width:17px;height:17px;color:#b0b3b8;"><use href="#wr"/></svg>
<svg class="u" style="left:2410px;top:2039.5px;width:17.5px;height:16px;" viewBox="0 0 17.500 16"><path d="M8.500 0L17.500 16H0z" fill="#9a9da2"/><path d="M2 2L13 14" stroke="#131313" stroke-width="1.800"/><path d="M3 1L14 13" stroke="#9a9da2" stroke-width="1.200"/></svg>
<b class="tc f160" style="left:2387.88px;top:2064px;color:#9a9da2;transform:scaleX(1.013);">Metronome</b>
<b class="tc f195" style="left:2479.51px;top:2036px;color:#e8e8e8;transform:scaleX(0.933);">4 / 4</b>
<b class="tc f160" style="left:2480.59px;top:2064px;color:#9a9da2;transform:scaleX(0.997);">Timing</b>
<b class="tc f195" style="left:2547.98px;top:2036px;color:#e8e8e8;">-</b>
<b class="tc f160" style="left:2547.69px;top:2064px;color:#9a9da2;transform:scaleX(0.957);">Key</b>
<b class="tc f195" style="left:2617.38px;top:2036px;color:#e8e8e8;transform:scaleX(0.966);">92.00</b>
<b class="tc f160" style="left:2617.21px;top:2064px;color:#9a9da2;transform:scaleX(1.015);">Tempo</b>
<i style="left:2672.7px;top:2037.9px;width:100.3px;height:5.6px;background:#3a3d42;"></i>
<i style="left:2773px;top:2037.9px;width:34.8px;height:5.6px;background:#1c1d1f;"></i>
<i style="left:2672.7px;top:2046px;width:100.3px;height:5.6px;background:#3a3d42;"></i>
<i style="left:2773px;top:2046px;width:34.8px;height:5.6px;background:#1c1d1f;"></i>
<i style="left:2672.7px;top:2064.3px;width:74px;height:12.7px;background:;background:repeating-linear-gradient(90deg,#4a9fd4 0,#4a9fd4 1.800px,#234c68 1.800px,#234c68 3.100px)"></i>
<i style="left:2746.7px;top:2064.3px;width:26.3px;height:12.7px;background:;background:repeating-linear-gradient(90deg,#3a3d42 0,#3a3d42 1.800px,#1d1e20 1.800px,#1d1e20 3.100px)"></i>
<i style="left:2745px;top:2064.3px;width:2.6px;height:12.7px;background:#dfe3e6;"></i>
<svg class="u" style="left:2784px;top:2064px;width:24px;height:13.5px;color:#4cb8e6;"><use href="#link"/></svg>
<i style="left:3573.6px;top:2026px;width:1.3px;height:66px;background:#5a616a;"></i>
<i style="left:3657.9px;top:2026px;width:83.4px;height:66px;background:#3f97d8;"></i>
<b class="tc f185" style="left:3616.18px;top:2053px;color:#f6f6f6;transform:scaleX(0.987);">Edit</b>
<b class="tc f185" style="left:3699.8px;top:2053px;color:#fff;transform:scaleX(0.984);">Mix</b>
<b class="tc f185" style="left:3791.5px;top:2053px;color:#f6f6f6;">Browse</b>
</body></html>
